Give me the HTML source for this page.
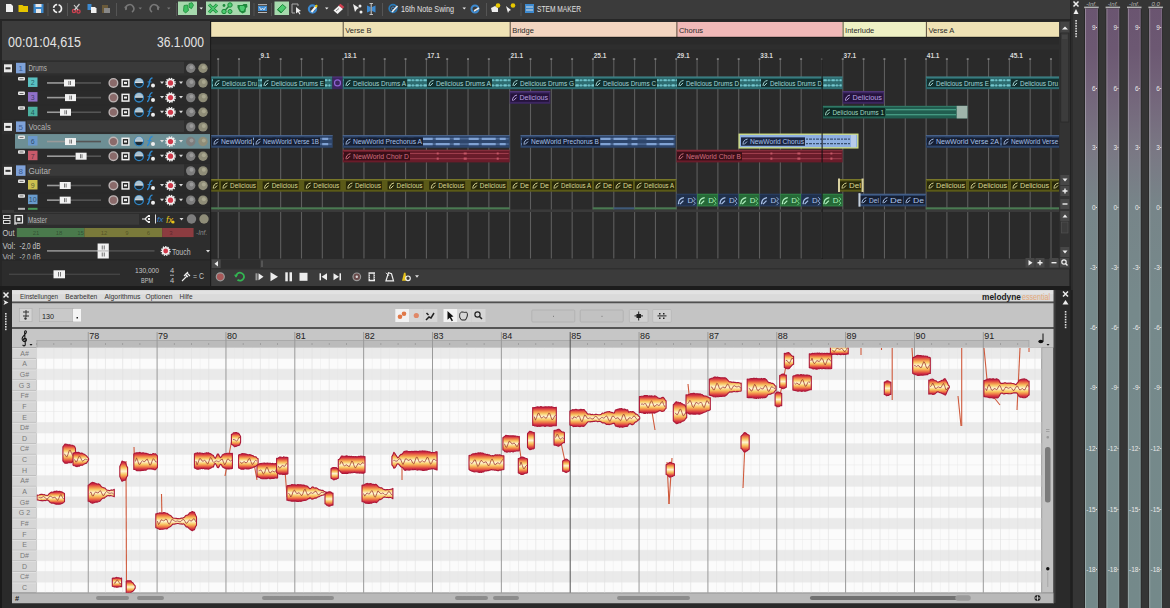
<!DOCTYPE html><html><head><meta charset="utf-8"><style>
*{margin:0;padding:0;box-sizing:border-box}
html,body{width:1170px;height:608px;overflow:hidden;background:#2b2b2b;font-family:"Liberation Sans",sans-serif;position:relative}
.a{position:absolute}
svg{position:absolute;left:0;top:0}
</style></head><body>
<div class="a" id="tb"><svg width="1071" height="21" style="position:absolute;left:0;top:0">
<rect x="0" y="0" width="1071" height="21" fill="#3b3b3b"/>
<rect x="0" y="19" width="1071" height="2" fill="#262626"/>
<!-- new doc -->
<path d="M6 4h5l2 2v6h-7z" fill="#f0f0f0"/>
<!-- folder -->
<path d="M18.5 5h4l1 1h4.5v6h-9.5z" fill="#e5c500"/>
<!-- save -->
<rect x="33.5" y="4" width="10" height="9" fill="#3b88cc"/><rect x="35.5" y="4" width="6" height="3" fill="#e8e8e8"/><rect x="36" y="9" width="5" height="4" fill="#e8e8e8"/>
<rect x="47.5" y="3" width="1" height="13" fill="#555"/>
<!-- refresh -->
<circle cx="57.5" cy="8.5" r="4" fill="none" stroke="#eee" stroke-width="1.6" stroke-dasharray="5 1.5"/>
<rect x="67" y="3" width="1" height="13" fill="#555"/>
<!-- scissors -->
<circle cx="74" cy="11" r="1.6" fill="none" stroke="#d04050" stroke-width="1.3"/><circle cx="78.5" cy="11.5" r="1.6" fill="none" stroke="#d04050" stroke-width="1.3"/><path d="M74.5 10l5-6M78 10l-4-5" stroke="#ccc" stroke-width="1.2"/>
<!-- copy -->
<rect x="87.5" y="4" width="4" height="6" fill="#3d8ad0"/><path d="M91 7h4l1.5 1.5v4.5h-5.5z" fill="#f0f0f0"/>
<!-- paste -->
<rect x="102" y="5" width="6" height="8" fill="#6a5a3a"/><rect x="104" y="8" width="6" height="5" fill="#888"/>
<rect x="116" y="3" width="1" height="13" fill="#555"/>
<!-- undo -->
<path d="M126 10a4 4 0 1 1 6 2" fill="none" stroke="#777" stroke-width="1.6"/><path d="M124 7l3 -1l0 4z" fill="#777"/>
<path d="M138.5 7.5h3.5l-1.75 2z" fill="#777"/>
<path d="M158 10a4 4 0 1 0 -6 2" fill="none" stroke="#777" stroke-width="1.6"/><path d="M160 7l-3 -1l0 4z" fill="#777"/>
<path d="M167 7.5h3.5l-1.75 2z" fill="#777"/>
<rect x="176" y="3" width="1" height="13" fill="#555"/>
<!-- green btn 1 -->
<rect x="178" y="1.5" width="19" height="13.5" fill="#a6d9ad"/>
<path d="M184 5.5l3.5 -0.5l1 5.5l-3 2.5l-2 -2z" fill="#3cc060" stroke="#1f8a3c" stroke-width="0.8"/><path d="M189 3.5l3 -0.8l1.5 2.5l-2 3.5l-2.5 -1.5z" fill="#3cc060" stroke="#1f8a3c" stroke-width="0.8"/>
<path d="M199.5 7.5h3.5l-1.75 2z" fill="#eee"/>
<rect x="206" y="1.5" width="44" height="13.5" fill="#a6d9ad"/>
<path d="M209 4.5c3 3 5 5 8 8M217 4.5c-3 3 -5 5 -8 8" stroke="#1f8a3c" stroke-width="3"/><path d="M209 4.5c3 3 5 5 8 8M217 4.5c-3 3 -5 5 -8 8" stroke="#4ccc70" stroke-width="1.4"/>
<path d="M224 11.5L230 5" stroke="#1f8a3c" stroke-width="1.5"/><circle cx="224" cy="11.5" r="2.2" fill="#4ccc70" stroke="#1f8a3c" stroke-width="1"/><circle cx="230" cy="5" r="2.2" fill="#4ccc70" stroke="#1f8a3c" stroke-width="1"/><circle cx="230" cy="11.5" r="2" fill="#4ccc70" stroke="#1f8a3c" stroke-width="1"/><circle cx="224" cy="5.5" r="1.4" fill="#1f8a3c"/>
<path d="M237.5 5h5l1 -1h3.5l0.5 3l-1.5 1l-0.5 4l-3 1.5l-3 -2l-2 -4z" fill="#1f8a3c"/><path d="M240 6h4l1 2l-1.5 3l-2.5 0l-1.5 -3z" fill="#4ccc70"/>
<rect x="253.5" y="3" width="1" height="13" fill="#555"/>
<rect x="258" y="4" width="9" height="1.2" fill="#aaa"/><rect x="258" y="6" width="9" height="5" fill="#3d8ad0"/><path d="M259.5 7l1.5 3l1.5 -2l1.5 2l1.5 -3" fill="none" stroke="#eee" stroke-width="0.8"/><rect x="258" y="12" width="9" height="1" fill="#bbb"/>
<rect x="271" y="3" width="1" height="13" fill="#555"/>
<rect x="274.5" y="1.5" width="14.5" height="13.5" fill="#a6d9ad"/>
<path d="M277.5 9.5l5 -5l3.5 3l-5 5.5z" fill="#4ccc70" stroke="#1f8a3c" stroke-width="1"/><path d="M277.5 9.5l3.5 3" stroke="#1f8a3c" stroke-width="1.2"/>
<path d="M292 4h6v2M292 4v9h3" fill="none" stroke="#aaa" stroke-width="1"/><path d="M296 7l5 4l-2 0.5l1.5 2.5l-1 0.5l-1.5 -2.5l-2 1.5z" fill="#eee"/>
<circle cx="312.5" cy="9" r="3.6" fill="none" stroke="#3d8ad0" stroke-width="2.2"/><path d="M311.5 12l5 -6" stroke="#f4f4f4" stroke-width="2"/><path d="M315.5 7.2l1.5 -2" stroke="#e8c800" stroke-width="2"/>
<path d="M325 7.5h3.5l-1.75 2z" fill="#eee"/>
<path d="M333.5 10.5l5.5 -5l4 3.5l-5.5 5z" fill="#f4f4f4"/><path d="M338.5 5.5l2 -1.8l3.8 3.3l-1.8 1.8z" fill="#d04050"/><path d="M336 11l3 -2.5" stroke="#666" stroke-width="0.8"/>
<rect x="347.5" y="3" width="1" height="13" fill="#555"/>
<path d="M353 4l6 4l-2 1l-2 3z" fill="#eee"/><circle cx="360" cy="6" r="1.5" fill="#eee"/><circle cx="361" cy="12" r="1.5" fill="#eee"/>
<path d="M367 5.5l3.5 1.5v4l-3.5 1.5zM375.5 5.5l-3.5 1.5v4l3.5 1.5z" fill="#3d8ad0"/><path d="M371.2 3.5v11" stroke="#ddd" stroke-width="0.9"/><path d="M369.5 3.5h3.5M369.5 14.5h3.5" stroke="#ddd" stroke-width="0.8"/>
<rect x="382" y="3" width="1" height="13" fill="#555"/>
<circle cx="393" cy="8.5" r="3.8" fill="none" stroke="#2a7ab8" stroke-width="1.8"/><circle cx="393" cy="8.5" r="1.5" fill="none" stroke="#3d8ad0" stroke-width="1"/><path d="M392 12l5.5 -6" stroke="#f0f0f0" stroke-width="1.6"/>
<text x="401" y="12" font-size="9.5" fill="#e0e0e0" font-family="Liberation Sans" textLength="53" lengthAdjust="spacingAndGlyphs">16th Note Swing</text>
<path d="M462.5 7.5h3.5l-1.75 2z" fill="#eee"/>
<circle cx="475" cy="9" r="3.5" fill="none" stroke="#3d8ad0" stroke-width="2"/><path d="M474 11l5 -3" stroke="#eee" stroke-width="1.5"/>
<rect x="486" y="3" width="1" height="13" fill="#555"/>
<path d="M491 8l4 -2l3 2v4h-6z" fill="#eee"/><circle cx="498" cy="5.5" r="2.3" fill="#e8c800"/>
<path d="M506 6l5 4l-2 1l-1 2z" fill="#eee"/><circle cx="513" cy="5.5" r="2.3" fill="#e8c800"/>
<rect x="520.5" y="3" width="1" height="13" fill="#555"/>
<rect x="525" y="4" width="9" height="9" fill="#3d8ad0"/><path d="M526 7h7M526 10h7" stroke="#ddd" stroke-width="1"/>
<text x="537" y="12" font-size="9" fill="#e0e0e0" font-family="Liberation Sans" textLength="44" lengthAdjust="spacingAndGlyphs">STEM MAKER</text>
</svg></div>
<svg width="1071" height="290" style="left:0;top:0">
<rect x="0" y="21" width="1071" height="269" fill="#262626"/>
<rect x="2" y="21" width="208" height="39.5" fill="#3c3c3c"/>
<text x="8" y="47.2" font-size="14" fill="#e4e4e4" textLength="73" lengthAdjust="spacingAndGlyphs">00:01:04,615</text>
<text x="157" y="47.2" font-size="14" fill="#e4e4e4" textLength="47" lengthAdjust="spacingAndGlyphs">36.1.000</text>
<rect x="2" y="61.5" width="208" height="151" fill="#2a2a2a"/>
<rect x="210" y="21" width="1.2" height="269" fill="#1c1c1c"/>
<rect x="2" y="61.3" width="208" height="14.65" fill="#2e2e2e"/>
<rect x="4" y="64.3" width="8" height="8" fill="#e8e8e8"/><rect x="5.5" y="67.3" width="5" height="2" fill="#333"/>
<rect x="16" y="62.8" width="9.5" height="10.5" fill="#7fa2d9"/>
<text x="20.7" y="71.3" font-size="8" fill="#3a5a90" text-anchor="middle">1</text>
<rect x="27" y="61.8" width="157" height="11.5" fill="#3a3a3a"/>
<text x="28.5" y="71.3" font-size="9" fill="#b4b4b4" textLength="18.5" lengthAdjust="spacingAndGlyphs">Drums</text>
<circle cx="190.7" cy="68.3" r="4.7" fill="#7d7d7d"/><circle cx="191.5" cy="67.3" r="2" fill="#9a9a9a"/>
<circle cx="203" cy="68.3" r="4.7" fill="#8f8d78"/><circle cx="203.8" cy="67.3" r="2" fill="#a9a78f"/>
<rect x="14" y="75.95" width="196" height="14.05" fill="#2a2a2a"/>
<rect x="18" y="76.95" width="7" height="3.5" fill="#e8e8e8" rx="1"/><rect x="19.5" y="78.35000000000001" width="4" height="0.8" fill="#555"/>
<rect x="28" y="77.45" width="9.5" height="9.5" fill="#5ac0c0"/>
<text x="32.7" y="85.25" font-size="7" fill="rgba(0,20,40,0.6)" text-anchor="middle">2</text>
<rect x="47" y="82.15" width="17" height="1.6" fill="#9a9a9a"/><rect x="64" y="82.15" width="37" height="1.6" fill="#555"/>
<rect x="64" y="79.45" width="11" height="7" fill="#f2f2f2"/><rect x="68.5" y="80.95" width="0.8" height="4" fill="#555"/><rect x="70" y="80.95" width="0.8" height="4" fill="#555"/>
<circle cx="113.4" cy="82.95" r="4.3" fill="#8a6a6a" stroke="#bcb4b4" stroke-width="1.4"/>
<rect x="121.4" y="78.95" width="8.2" height="8.2" fill="#f0f0f0"/><rect x="122.9" y="80.45" width="5.2" height="5.2" fill="#2a2a2a"/><rect x="124" y="81.95" width="3" height="2" fill="#f0f0f0"/>
<circle cx="139" cy="82.95" r="4.4" fill="#1c2a33" stroke="#2f86c6" stroke-width="1.3"/><path d="M134.8 82.45a4.2 4.2 0 0 1 8.4 0z" fill="#a9c2d2"/><rect x="135" y="82.15" width="8" height="0.9" fill="#eee"/>
<path d="M147 86.95c2 0 2-2 2.5-5s1-4 3-4" fill="none" stroke="#2f8ad0" stroke-width="1.4"/><path d="M147.5 81.95h4" stroke="#2f8ad0" stroke-width="1"/><circle cx="153" cy="85.45" r="2" fill="#eee"/>
<path d="M160 81.45h4l-2 2.5z" fill="#ddd"/>
<circle cx="170.5" cy="82.95" r="4.3" fill="#f0f0f0"/><circle cx="170.5" cy="82.95" r="4.6" fill="none" stroke="#f0f0f0" stroke-width="1.5" stroke-dasharray="1.3 1.1"/><circle cx="170.5" cy="82.95" r="2.6" fill="#d0394a"/>
<path d="M179 81.45h4l-2 2.5z" fill="#ddd"/>
<circle cx="190.7" cy="82.95" r="4.7" fill="#7d7d7d"/><circle cx="191.5" cy="81.95" r="2" fill="#9a9a9a"/>
<circle cx="203" cy="82.95" r="4.7" fill="#8f8d78"/><circle cx="203.8" cy="81.95" r="2" fill="#a9a78f"/>
<rect x="14" y="90.6" width="196" height="14.05" fill="#2a2a2a"/>
<rect x="18" y="91.6" width="7" height="3.5" fill="#e8e8e8" rx="1"/><rect x="19.5" y="93.0" width="4" height="0.8" fill="#555"/>
<rect x="28" y="92.1" width="9.5" height="9.5" fill="#9070c8"/>
<text x="32.7" y="99.89999999999999" font-size="7" fill="rgba(0,20,40,0.6)" text-anchor="middle">3</text>
<rect x="47" y="96.8" width="18" height="1.6" fill="#9a9a9a"/><rect x="65" y="96.8" width="36" height="1.6" fill="#555"/>
<rect x="65" y="94.1" width="11" height="7" fill="#f2f2f2"/><rect x="69.5" y="95.6" width="0.8" height="4" fill="#555"/><rect x="71" y="95.6" width="0.8" height="4" fill="#555"/>
<circle cx="113.4" cy="97.6" r="4.3" fill="#8a6a6a" stroke="#bcb4b4" stroke-width="1.4"/>
<rect x="121.4" y="93.6" width="8.2" height="8.2" fill="#f0f0f0"/><rect x="122.9" y="95.1" width="5.2" height="5.2" fill="#2a2a2a"/><rect x="124" y="96.6" width="3" height="2" fill="#f0f0f0"/>
<circle cx="139" cy="97.6" r="4.4" fill="#1c2a33" stroke="#2f86c6" stroke-width="1.3"/><path d="M134.8 97.1a4.2 4.2 0 0 1 8.4 0z" fill="#a9c2d2"/><rect x="135" y="96.8" width="8" height="0.9" fill="#eee"/>
<path d="M147 101.6c2 0 2-2 2.5-5s1-4 3-4" fill="none" stroke="#2f8ad0" stroke-width="1.4"/><path d="M147.5 96.6h4" stroke="#2f8ad0" stroke-width="1"/><circle cx="153" cy="100.1" r="2" fill="#eee"/>
<path d="M160 96.1h4l-2 2.5z" fill="#ddd"/>
<circle cx="170.5" cy="97.6" r="4.3" fill="#f0f0f0"/><circle cx="170.5" cy="97.6" r="4.6" fill="none" stroke="#f0f0f0" stroke-width="1.5" stroke-dasharray="1.3 1.1"/><circle cx="170.5" cy="97.6" r="2.6" fill="#d0394a"/>
<path d="M179 96.1h4l-2 2.5z" fill="#ddd"/>
<circle cx="190.7" cy="97.6" r="4.7" fill="#7d7d7d"/><circle cx="191.5" cy="96.6" r="2" fill="#9a9a9a"/>
<circle cx="203" cy="97.6" r="4.7" fill="#8f8d78"/><circle cx="203.8" cy="96.6" r="2" fill="#a9a78f"/>
<rect x="14" y="105.25" width="196" height="14.05" fill="#2a2a2a"/>
<rect x="18" y="106.25" width="7" height="3.5" fill="#e8e8e8" rx="1"/><rect x="19.5" y="107.65" width="4" height="0.8" fill="#555"/>
<rect x="28" y="106.75" width="9.5" height="9.5" fill="#4cb0a0"/>
<text x="32.7" y="114.55" font-size="7" fill="rgba(0,20,40,0.6)" text-anchor="middle">4</text>
<rect x="47" y="111.45" width="13" height="1.6" fill="#9a9a9a"/><rect x="60" y="111.45" width="41" height="1.6" fill="#555"/>
<rect x="60" y="108.75" width="11" height="7" fill="#f2f2f2"/><rect x="64.5" y="110.25" width="0.8" height="4" fill="#555"/><rect x="66" y="110.25" width="0.8" height="4" fill="#555"/>
<circle cx="113.4" cy="112.25" r="4.3" fill="#8a6a6a" stroke="#bcb4b4" stroke-width="1.4"/>
<rect x="121.4" y="108.25" width="8.2" height="8.2" fill="#f0f0f0"/><rect x="122.9" y="109.75" width="5.2" height="5.2" fill="#2a2a2a"/><rect x="124" y="111.25" width="3" height="2" fill="#f0f0f0"/>
<circle cx="139" cy="112.25" r="4.4" fill="#1c2a33" stroke="#2f86c6" stroke-width="1.3"/><path d="M134.8 111.75a4.2 4.2 0 0 1 8.4 0z" fill="#a9c2d2"/><rect x="135" y="111.45" width="8" height="0.9" fill="#eee"/>
<path d="M147 116.25c2 0 2-2 2.5-5s1-4 3-4" fill="none" stroke="#2f8ad0" stroke-width="1.4"/><path d="M147.5 111.25h4" stroke="#2f8ad0" stroke-width="1"/><circle cx="153" cy="114.75" r="2" fill="#eee"/>
<path d="M160 110.75h4l-2 2.5z" fill="#ddd"/>
<circle cx="170.5" cy="112.25" r="4.3" fill="#f0f0f0"/><circle cx="170.5" cy="112.25" r="4.6" fill="none" stroke="#f0f0f0" stroke-width="1.5" stroke-dasharray="1.3 1.1"/><circle cx="170.5" cy="112.25" r="2.6" fill="#d0394a"/>
<path d="M179 110.75h4l-2 2.5z" fill="#ddd"/>
<circle cx="190.7" cy="112.25" r="4.7" fill="#7d7d7d"/><circle cx="191.5" cy="111.25" r="2" fill="#9a9a9a"/>
<circle cx="203" cy="112.25" r="4.7" fill="#8f8d78"/><circle cx="203.8" cy="111.25" r="2" fill="#a9a78f"/>
<rect x="2" y="119.9" width="208" height="14.65" fill="#2e2e2e"/>
<rect x="4" y="122.9" width="8" height="8" fill="#e8e8e8"/><rect x="5.5" y="125.9" width="5" height="2" fill="#333"/>
<rect x="16" y="121.4" width="9.5" height="10.5" fill="#7fa2d9"/>
<text x="20.7" y="129.9" font-size="8" fill="#3a5a90" text-anchor="middle">5</text>
<rect x="27" y="120.4" width="157" height="11.5" fill="#3a3a3a"/>
<text x="28.5" y="129.9" font-size="9" fill="#b4b4b4" textLength="22.200000000000003" lengthAdjust="spacingAndGlyphs">Vocals</text>
<circle cx="190.7" cy="126.9" r="4.7" fill="#7d7d7d"/><circle cx="191.5" cy="125.9" r="2" fill="#9a9a9a"/>
<circle cx="203" cy="126.9" r="4.7" fill="#8f8d78"/><circle cx="203.8" cy="125.9" r="2" fill="#a9a78f"/>
<rect x="15" y="134.05" width="195" height="14.65" fill="#6d8f95"/>
<rect x="18" y="135.55" width="7" height="3.5" fill="#e8e8e8" rx="1"/><rect x="19.5" y="136.95000000000002" width="4" height="0.8" fill="#555"/>
<rect x="28" y="136.05" width="9.5" height="9.5" fill="#6a98cc"/>
<text x="32.7" y="143.85000000000002" font-size="7" fill="rgba(0,20,40,0.6)" text-anchor="middle">6</text>
<rect x="47" y="140.75" width="18" height="1.6" fill="#9a9a9a"/><rect x="65" y="140.75" width="36" height="1.6" fill="#555"/>
<rect x="65" y="138.05" width="11" height="7" fill="#f2f2f2"/><rect x="69.5" y="139.55" width="0.8" height="4" fill="#555"/><rect x="71" y="139.55" width="0.8" height="4" fill="#555"/>
<circle cx="113.4" cy="141.55" r="4.3" fill="#8a6a6a" stroke="#bcb4b4" stroke-width="1.4"/>
<rect x="121.4" y="137.55" width="8.2" height="8.2" fill="#f0f0f0"/><rect x="122.9" y="139.05" width="5.2" height="5.2" fill="#2a2a2a"/><rect x="124" y="140.55" width="3" height="2" fill="#f0f0f0"/>
<circle cx="139" cy="141.55" r="4.4" fill="#1c2a33" stroke="#2f86c6" stroke-width="1.3"/><path d="M134.8 141.05a4.2 4.2 0 0 1 8.4 0z" fill="#a9c2d2"/><rect x="135" y="140.75" width="8" height="0.9" fill="#eee"/>
<path d="M147 145.55c2 0 2-2 2.5-5s1-4 3-4" fill="none" stroke="#2f8ad0" stroke-width="1.4"/><path d="M147.5 140.55h4" stroke="#2f8ad0" stroke-width="1"/><circle cx="153" cy="144.05" r="2" fill="#eee"/>
<path d="M160 140.05h4l-2 2.5z" fill="#ddd"/>
<circle cx="170.5" cy="141.55" r="4.3" fill="#f0f0f0"/><circle cx="170.5" cy="141.55" r="4.6" fill="none" stroke="#f0f0f0" stroke-width="1.5" stroke-dasharray="1.3 1.1"/><circle cx="170.5" cy="141.55" r="2.6" fill="#d0394a"/>
<path d="M179 140.05h4l-2 2.5z" fill="#ddd"/>
<circle cx="190.7" cy="141.55" r="4.7" fill="#7d7d7d"/><circle cx="191.5" cy="140.55" r="2" fill="#9a9a9a"/>
<circle cx="203" cy="141.55" r="4.7" fill="#8f8d78"/><circle cx="203.8" cy="140.55" r="2" fill="#a9a78f"/>
<rect x="14" y="149.2" width="196" height="14.05" fill="#2a2a2a"/>
<rect x="18" y="150.2" width="7" height="3.5" fill="#e8e8e8" rx="1"/><rect x="19.5" y="151.6" width="4" height="0.8" fill="#555"/>
<rect x="28" y="150.7" width="9.5" height="9.5" fill="#c85a6a"/>
<text x="32.7" y="158.5" font-size="7" fill="rgba(0,20,40,0.6)" text-anchor="middle">7</text>
<rect x="47" y="155.39999999999998" width="28.599999999999994" height="1.6" fill="#9a9a9a"/><rect x="75.6" y="155.39999999999998" width="25.400000000000006" height="1.6" fill="#555"/>
<rect x="75.6" y="152.7" width="11" height="7" fill="#f2f2f2"/><rect x="80.1" y="154.2" width="0.8" height="4" fill="#555"/><rect x="81.6" y="154.2" width="0.8" height="4" fill="#555"/>
<circle cx="113.4" cy="156.2" r="4.3" fill="#8a6a6a" stroke="#bcb4b4" stroke-width="1.4"/>
<rect x="121.4" y="152.2" width="8.2" height="8.2" fill="#f0f0f0"/><rect x="122.9" y="153.7" width="5.2" height="5.2" fill="#2a2a2a"/><rect x="124" y="155.2" width="3" height="2" fill="#f0f0f0"/>
<circle cx="139" cy="156.2" r="4.4" fill="#1c2a33" stroke="#2f86c6" stroke-width="1.3"/><path d="M134.8 155.7a4.2 4.2 0 0 1 8.4 0z" fill="#a9c2d2"/><rect x="135" y="155.39999999999998" width="8" height="0.9" fill="#eee"/>
<path d="M147 160.2c2 0 2-2 2.5-5s1-4 3-4" fill="none" stroke="#2f8ad0" stroke-width="1.4"/><path d="M147.5 155.2h4" stroke="#2f8ad0" stroke-width="1"/><circle cx="153" cy="158.7" r="2" fill="#eee"/>
<path d="M160 154.7h4l-2 2.5z" fill="#ddd"/>
<circle cx="170.5" cy="156.2" r="4.3" fill="#f0f0f0"/><circle cx="170.5" cy="156.2" r="4.6" fill="none" stroke="#f0f0f0" stroke-width="1.5" stroke-dasharray="1.3 1.1"/><circle cx="170.5" cy="156.2" r="2.6" fill="#d0394a"/>
<path d="M179 154.7h4l-2 2.5z" fill="#ddd"/>
<circle cx="190.7" cy="156.2" r="4.7" fill="#7d7d7d"/><circle cx="191.5" cy="155.2" r="2" fill="#9a9a9a"/>
<circle cx="203" cy="156.2" r="4.7" fill="#8f8d78"/><circle cx="203.8" cy="155.2" r="2" fill="#a9a78f"/>
<rect x="2" y="163.85" width="208" height="14.65" fill="#2e2e2e"/>
<rect x="4" y="166.85" width="8" height="8" fill="#e8e8e8"/><rect x="5.5" y="169.85" width="5" height="2" fill="#333"/>
<rect x="16" y="165.35" width="9.5" height="10.5" fill="#7fa2d9"/>
<text x="20.7" y="173.85" font-size="8" fill="#3a5a90" text-anchor="middle">8</text>
<rect x="27" y="164.35" width="157" height="11.5" fill="#3a3a3a"/>
<text x="28.5" y="173.85" font-size="9" fill="#b4b4b4" textLength="22.200000000000003" lengthAdjust="spacingAndGlyphs">Guitar</text>
<circle cx="190.7" cy="170.85" r="4.7" fill="#7d7d7d"/><circle cx="191.5" cy="169.85" r="2" fill="#9a9a9a"/>
<circle cx="203" cy="170.85" r="4.7" fill="#8f8d78"/><circle cx="203.8" cy="169.85" r="2" fill="#a9a78f"/>
<rect x="14" y="178.5" width="196" height="14.05" fill="#2a2a2a"/>
<rect x="18" y="179.5" width="7" height="3.5" fill="#e8e8e8" rx="1"/><rect x="19.5" y="180.9" width="4" height="0.8" fill="#555"/>
<rect x="28" y="180.0" width="9.5" height="9.5" fill="#ccc050"/>
<text x="32.7" y="187.8" font-size="7" fill="rgba(0,20,40,0.6)" text-anchor="middle">9</text>
<rect x="47" y="184.7" width="12.700000000000003" height="1.6" fill="#9a9a9a"/><rect x="59.7" y="184.7" width="41.3" height="1.6" fill="#555"/>
<rect x="59.7" y="182.0" width="11" height="7" fill="#f2f2f2"/><rect x="64.2" y="183.5" width="0.8" height="4" fill="#555"/><rect x="65.7" y="183.5" width="0.8" height="4" fill="#555"/>
<circle cx="113.4" cy="185.5" r="4.3" fill="#8a6a6a" stroke="#bcb4b4" stroke-width="1.4"/>
<rect x="121.4" y="181.5" width="8.2" height="8.2" fill="#f0f0f0"/><rect x="122.9" y="183.0" width="5.2" height="5.2" fill="#2a2a2a"/><rect x="124" y="184.5" width="3" height="2" fill="#f0f0f0"/>
<circle cx="139" cy="185.5" r="4.4" fill="#1c2a33" stroke="#2f86c6" stroke-width="1.3"/><path d="M134.8 185.0a4.2 4.2 0 0 1 8.4 0z" fill="#a9c2d2"/><rect x="135" y="184.7" width="8" height="0.9" fill="#eee"/>
<path d="M147 189.5c2 0 2-2 2.5-5s1-4 3-4" fill="none" stroke="#2f8ad0" stroke-width="1.4"/><path d="M147.5 184.5h4" stroke="#2f8ad0" stroke-width="1"/><circle cx="153" cy="188.0" r="2" fill="#eee"/>
<path d="M160 184.0h4l-2 2.5z" fill="#ddd"/>
<circle cx="170.5" cy="185.5" r="4.3" fill="#f0f0f0"/><circle cx="170.5" cy="185.5" r="4.6" fill="none" stroke="#f0f0f0" stroke-width="1.5" stroke-dasharray="1.3 1.1"/><circle cx="170.5" cy="185.5" r="2.6" fill="#d0394a"/>
<path d="M179 184.0h4l-2 2.5z" fill="#ddd"/>
<circle cx="190.7" cy="185.5" r="4.7" fill="#7d7d7d"/><circle cx="191.5" cy="184.5" r="2" fill="#9a9a9a"/>
<circle cx="203" cy="185.5" r="4.7" fill="#8f8d78"/><circle cx="203.8" cy="184.5" r="2" fill="#a9a78f"/>
<rect x="14" y="193.14999999999998" width="196" height="14.05" fill="#2a2a2a"/>
<rect x="18" y="194.14999999999998" width="7" height="3.5" fill="#e8e8e8" rx="1"/><rect x="19.5" y="195.54999999999998" width="4" height="0.8" fill="#555"/>
<rect x="28" y="194.64999999999998" width="9.5" height="9.5" fill="#6a9ccc"/>
<text x="32.7" y="202.45" font-size="7" fill="rgba(0,20,40,0.6)" text-anchor="middle">10</text>
<rect x="47" y="199.34999999999997" width="12.700000000000003" height="1.6" fill="#9a9a9a"/><rect x="59.7" y="199.34999999999997" width="41.3" height="1.6" fill="#555"/>
<rect x="59.7" y="196.64999999999998" width="11" height="7" fill="#f2f2f2"/><rect x="64.2" y="198.14999999999998" width="0.8" height="4" fill="#555"/><rect x="65.7" y="198.14999999999998" width="0.8" height="4" fill="#555"/>
<circle cx="113.4" cy="200.14999999999998" r="4.3" fill="#8a6a6a" stroke="#bcb4b4" stroke-width="1.4"/>
<rect x="121.4" y="196.14999999999998" width="8.2" height="8.2" fill="#f0f0f0"/><rect x="122.9" y="197.64999999999998" width="5.2" height="5.2" fill="#2a2a2a"/><rect x="124" y="199.14999999999998" width="3" height="2" fill="#f0f0f0"/>
<circle cx="139" cy="200.14999999999998" r="4.4" fill="#1c2a33" stroke="#2f86c6" stroke-width="1.3"/><path d="M134.8 199.64999999999998a4.2 4.2 0 0 1 8.4 0z" fill="#a9c2d2"/><rect x="135" y="199.34999999999997" width="8" height="0.9" fill="#eee"/>
<path d="M147 204.14999999999998c2 0 2-2 2.5-5s1-4 3-4" fill="none" stroke="#2f8ad0" stroke-width="1.4"/><path d="M147.5 199.14999999999998h4" stroke="#2f8ad0" stroke-width="1"/><circle cx="153" cy="202.64999999999998" r="2" fill="#eee"/>
<path d="M160 198.64999999999998h4l-2 2.5z" fill="#ddd"/>
<circle cx="170.5" cy="200.14999999999998" r="4.3" fill="#f0f0f0"/><circle cx="170.5" cy="200.14999999999998" r="4.6" fill="none" stroke="#f0f0f0" stroke-width="1.5" stroke-dasharray="1.3 1.1"/><circle cx="170.5" cy="200.14999999999998" r="2.6" fill="#d0394a"/>
<path d="M179 198.64999999999998h4l-2 2.5z" fill="#ddd"/>
<circle cx="190.7" cy="200.14999999999998" r="4.7" fill="#7d7d7d"/><circle cx="191.5" cy="199.14999999999998" r="2" fill="#9a9a9a"/>
<circle cx="203" cy="200.14999999999998" r="4.7" fill="#8f8d78"/><circle cx="203.8" cy="199.14999999999998" r="2" fill="#a9a78f"/>
<rect x="2" y="209.9" width="208" height="3.5" fill="#3a3a3a"/>
<rect x="2" y="213.4" width="208" height="46" fill="#2d2d2d"/>
<rect x="27" y="213.8" width="112" height="11" fill="#3a3a3a"/>
<rect x="3.5" y="215.5" width="6.5" height="3" fill="none" stroke="#ddd" stroke-width="1"/><rect x="3.5" y="220.5" width="6.5" height="3" fill="none" stroke="#ddd" stroke-width="1"/>
<rect x="15" y="215.5" width="7.5" height="7.5" fill="none" stroke="#eee" stroke-width="1.2"/><rect x="17.2" y="217.7" width="3.2" height="3.2" fill="#eee"/><path d="M14 224h3" stroke="#eee"/>
<text x="28" y="222.6" font-size="9" fill="#b8b8b8" textLength="19" lengthAdjust="spacingAndGlyphs">Master</text>
<path d="M142 219h3M145 219l3-3M145 219l3 3" stroke="#eee" stroke-width="1.2" fill="none"/><rect x="148" y="215" width="2" height="2" fill="#eee"/><rect x="148" y="218" width="2" height="2" fill="#eee"/><rect x="148" y="221" width="2" height="2" fill="#eee"/>
<rect x="155" y="214.5" width="1" height="9" fill="#ddd"/><text x="157" y="222" font-size="8" font-style="italic" fill="#3a8ad0">fx</text>
<text x="166" y="223" font-size="9" font-style="italic" fill="#e6c21a">fx</text><circle cx="173" cy="222" r="1.6" fill="#e6c21a"/>
<path d="M179.5 218h4l-2 2.5z" fill="#ddd"/>
<circle cx="191.5" cy="219" r="4.7" fill="#7d7d7d"/><circle cx="204" cy="219" r="4.7" fill="#8f8d78"/>
<text x="2.5" y="235.5" font-size="8.5" fill="#c8c8c8" textLength="12" lengthAdjust="spacingAndGlyphs">Out</text>
<rect x="16.8" y="228" width="67.5" height="9.1" fill="#4a7a4c"/><rect x="84.3" y="228" width="78" height="9.1" fill="#7a7a3a"/><rect x="162.2" y="228" width="31.4" height="9.1" fill="#8c3c40"/>
<text x="36" y="235" font-size="6" fill="rgba(0,0,0,0.35)" text-anchor="middle">21</text>
<text x="59" y="235" font-size="6" fill="rgba(0,0,0,0.35)" text-anchor="middle">18</text>
<text x="80.5" y="235" font-size="6" fill="rgba(0,0,0,0.35)" text-anchor="middle">15</text>
<text x="104" y="235" font-size="6" fill="rgba(0,0,0,0.35)" text-anchor="middle">12</text>
<text x="127" y="235" font-size="6" fill="rgba(0,0,0,0.35)" text-anchor="middle">9</text>
<text x="148.5" y="235" font-size="6" fill="rgba(0,0,0,0.35)" text-anchor="middle">6</text>
<text x="171" y="235" font-size="6" fill="rgba(0,0,0,0.35)" text-anchor="middle">3</text>
<text x="196" y="235" font-size="6.5" fill="#888" font-style="italic">-Inf.</text>
<text x="2.5" y="248.5" font-size="8.5" fill="#c8c8c8" textLength="13" lengthAdjust="spacingAndGlyphs">Vol:</text>
<text x="19.5" y="248.5" font-size="8.5" fill="#c8c8c8" textLength="21" lengthAdjust="spacingAndGlyphs">-2,0 dB</text>
<rect x="47" y="250.2" width="51" height="1.4" fill="#a0a0a0"/><rect x="108" y="250.2" width="46.5" height="1.4" fill="#555"/>
<rect x="97.6" y="243.5" width="11.2" height="15" fill="#f2f2f2"/><rect x="97.6" y="250.6" width="11.2" height="0.7" fill="#999"/>
<rect x="101.8" y="245.5" width="0.8" height="4" fill="#555"/><rect x="103.8" y="245.5" width="0.8" height="4" fill="#555"/><rect x="101.8" y="252.5" width="0.8" height="4" fill="#555"/><rect x="103.8" y="252.5" width="0.8" height="4" fill="#555"/>
<circle cx="165.7" cy="251" r="3.9" fill="#f0f0f0"/><circle cx="165.7" cy="251" r="4.3" fill="none" stroke="#f0f0f0" stroke-width="1.4" stroke-dasharray="1.3 1.1"/><circle cx="165.7" cy="251" r="2.4" fill="#d0394a"/>
<text x="172" y="254.5" font-size="9" fill="#c0c0c0" textLength="18.5" lengthAdjust="spacingAndGlyphs">Touch</text>
<path d="M206 250h4l-2 2.5z" fill="#ddd"/>
<text x="2.5" y="259.5" font-size="8.5" fill="#b8b8b8" textLength="13" lengthAdjust="spacingAndGlyphs">Vol:</text>
<text x="19.5" y="259.5" font-size="8.5" fill="#b8b8b8" textLength="21" lengthAdjust="spacingAndGlyphs">-2,0 dB</text>
<rect x="2" y="259.5" width="208" height="26.5" fill="#2c2c2c"/>
<rect x="2" y="259.5" width="208" height="0.8" fill="#222"/>
<rect x="9" y="273.6" width="111" height="1.4" fill="#444"/>
<rect x="53.5" y="270.3" width="11.5" height="8" fill="#f2f2f2"/><rect x="58" y="272" width="0.8" height="4.5" fill="#555"/><rect x="60" y="272" width="0.8" height="4.5" fill="#555"/>
<text x="147" y="273" font-size="8" fill="#c4c4c4" text-anchor="middle" textLength="24" lengthAdjust="spacingAndGlyphs">130,000</text>
<text x="147" y="283" font-size="8" fill="#c4c4c4" text-anchor="middle" textLength="12" lengthAdjust="spacingAndGlyphs">BPM</text>
<text x="172" y="272.5" font-size="7.5" fill="#c4c4c4" text-anchor="middle">4</text><rect x="170" y="274.8" width="4" height="0.8" fill="#c4c4c4"/><text x="172" y="282.5" font-size="7.5" fill="#c4c4c4" text-anchor="middle">4</text>
<path d="M182 281l5-5M185 274l3 3M187 273l3 3M184 276l4-4" stroke="#eee" stroke-width="1.1"/>
<text x="193" y="279" font-size="9" fill="#c4c4c4" textLength="11" lengthAdjust="spacingAndGlyphs">= C</text>
<rect x="0" y="286" width="1071" height="4" fill="#1c1c1c"/>
<rect x="211.2" y="21" width="848" height="238" fill="#2a2a2a"/>
<rect x="211.2" y="22" width="848" height="15" fill="#efe2b5"/>
<rect x="342.7" y="22" width="167.0" height="15" fill="#efe2b5"/>
<rect x="342.7" y="22" width="1" height="15" fill="#5a5040"/>
<text x="345.2" y="32.5" font-size="7.5" fill="#2a2a2a">Verse B</text>
<rect x="509.7" y="22" width="166.7" height="15" fill="#f3d5c0"/>
<rect x="509.7" y="22" width="1" height="15" fill="#5a5040"/>
<text x="512.2" y="32.5" font-size="7.5" fill="#2a2a2a">Bridge</text>
<rect x="676.4" y="22" width="166.20000000000005" height="15" fill="#f1b9b8"/>
<rect x="676.4" y="22" width="1" height="15" fill="#5a5040"/>
<text x="678.9" y="32.5" font-size="7.5" fill="#2a2a2a">Chorus</text>
<rect x="842.6" y="22" width="83.29999999999995" height="15" fill="#eef0c4"/>
<rect x="842.6" y="22" width="1" height="15" fill="#5a5040"/>
<text x="845.1" y="32.5" font-size="7.5" fill="#2a2a2a">Interlude</text>
<rect x="925.9" y="22" width="133.30000000000007" height="15" fill="#efe2b5"/>
<rect x="925.9" y="22" width="1" height="15" fill="#5a5040"/>
<text x="928.4" y="32.5" font-size="7.5" fill="#2a2a2a">Verse A</text>
<rect x="211.2" y="36.8" width="848" height="1.2" fill="#1e1e1e"/>
<rect x="211.2" y="44.5" width="848" height="5" fill="#2e2e2e"/>
<rect x="217.66000000000003" y="58.5" width="1.1" height="200" fill="#5e5e5e"/>
<rect x="217.16000000000003" y="58.3" width="2" height="1.5" fill="#888"/>
<rect x="238.48000000000002" y="58.5" width="1.1" height="200" fill="#5e5e5e"/>
<rect x="237.98000000000002" y="58.3" width="2" height="1.5" fill="#888"/>
<rect x="259.3" y="58.5" width="1.1" height="200" fill="#5e5e5e"/>
<rect x="258.8" y="58.3" width="2" height="1.5" fill="#888"/>
<text x="260.6" y="57.8" font-size="6.5" fill="#d8d8d8" font-weight="bold">9.1</text>
<rect x="280.12" y="58.5" width="1.1" height="200" fill="#5e5e5e"/>
<rect x="279.62" y="58.3" width="2" height="1.5" fill="#888"/>
<rect x="300.94" y="58.5" width="1.1" height="200" fill="#5e5e5e"/>
<rect x="300.44" y="58.3" width="2" height="1.5" fill="#888"/>
<rect x="321.76" y="58.5" width="1.1" height="200" fill="#5e5e5e"/>
<rect x="321.26" y="58.3" width="2" height="1.5" fill="#888"/>
<rect x="342.58000000000004" y="58.5" width="1.1" height="200" fill="#5e5e5e"/>
<rect x="342.08000000000004" y="58.3" width="2" height="1.5" fill="#888"/>
<text x="343.88000000000005" y="57.8" font-size="6.5" fill="#d8d8d8" font-weight="bold">13.1</text>
<rect x="363.4" y="58.5" width="1.1" height="200" fill="#5e5e5e"/>
<rect x="362.9" y="58.3" width="2" height="1.5" fill="#888"/>
<rect x="384.22" y="58.5" width="1.1" height="200" fill="#5e5e5e"/>
<rect x="383.72" y="58.3" width="2" height="1.5" fill="#888"/>
<rect x="405.04" y="58.5" width="1.1" height="200" fill="#5e5e5e"/>
<rect x="404.54" y="58.3" width="2" height="1.5" fill="#888"/>
<rect x="425.86" y="58.5" width="1.1" height="200" fill="#5e5e5e"/>
<rect x="425.36" y="58.3" width="2" height="1.5" fill="#888"/>
<text x="427.16" y="57.8" font-size="6.5" fill="#d8d8d8" font-weight="bold">17.1</text>
<rect x="446.68" y="58.5" width="1.1" height="200" fill="#5e5e5e"/>
<rect x="446.18" y="58.3" width="2" height="1.5" fill="#888"/>
<rect x="467.5" y="58.5" width="1.1" height="200" fill="#5e5e5e"/>
<rect x="467.0" y="58.3" width="2" height="1.5" fill="#888"/>
<rect x="488.32000000000005" y="58.5" width="1.1" height="200" fill="#5e5e5e"/>
<rect x="487.82000000000005" y="58.3" width="2" height="1.5" fill="#888"/>
<rect x="509.14" y="58.5" width="1.1" height="200" fill="#5e5e5e"/>
<rect x="508.64" y="58.3" width="2" height="1.5" fill="#888"/>
<text x="510.44" y="57.8" font-size="6.5" fill="#d8d8d8" font-weight="bold">21.1</text>
<rect x="529.96" y="58.5" width="1.1" height="200" fill="#5e5e5e"/>
<rect x="529.46" y="58.3" width="2" height="1.5" fill="#888"/>
<rect x="550.78" y="58.5" width="1.1" height="200" fill="#5e5e5e"/>
<rect x="550.28" y="58.3" width="2" height="1.5" fill="#888"/>
<rect x="571.6" y="58.5" width="1.1" height="200" fill="#5e5e5e"/>
<rect x="571.1" y="58.3" width="2" height="1.5" fill="#888"/>
<rect x="592.4200000000001" y="58.5" width="1.1" height="200" fill="#5e5e5e"/>
<rect x="591.9200000000001" y="58.3" width="2" height="1.5" fill="#888"/>
<text x="593.72" y="57.8" font-size="6.5" fill="#d8d8d8" font-weight="bold">25.1</text>
<rect x="613.24" y="58.5" width="1.1" height="200" fill="#5e5e5e"/>
<rect x="612.74" y="58.3" width="2" height="1.5" fill="#888"/>
<rect x="634.06" y="58.5" width="1.1" height="200" fill="#5e5e5e"/>
<rect x="633.56" y="58.3" width="2" height="1.5" fill="#888"/>
<rect x="654.88" y="58.5" width="1.1" height="200" fill="#5e5e5e"/>
<rect x="654.38" y="58.3" width="2" height="1.5" fill="#888"/>
<rect x="675.7" y="58.5" width="1.1" height="200" fill="#5e5e5e"/>
<rect x="675.2" y="58.3" width="2" height="1.5" fill="#888"/>
<text x="677.0" y="57.8" font-size="6.5" fill="#d8d8d8" font-weight="bold">29.1</text>
<rect x="696.52" y="58.5" width="1.1" height="200" fill="#5e5e5e"/>
<rect x="696.02" y="58.3" width="2" height="1.5" fill="#888"/>
<rect x="717.34" y="58.5" width="1.1" height="200" fill="#5e5e5e"/>
<rect x="716.84" y="58.3" width="2" height="1.5" fill="#888"/>
<rect x="738.1600000000001" y="58.5" width="1.1" height="200" fill="#5e5e5e"/>
<rect x="737.6600000000001" y="58.3" width="2" height="1.5" fill="#888"/>
<rect x="758.98" y="58.5" width="1.1" height="200" fill="#5e5e5e"/>
<rect x="758.48" y="58.3" width="2" height="1.5" fill="#888"/>
<text x="760.28" y="57.8" font-size="6.5" fill="#d8d8d8" font-weight="bold">33.1</text>
<rect x="779.8" y="58.5" width="1.1" height="200" fill="#5e5e5e"/>
<rect x="779.3" y="58.3" width="2" height="1.5" fill="#888"/>
<rect x="800.6200000000001" y="58.5" width="1.1" height="200" fill="#5e5e5e"/>
<rect x="800.1200000000001" y="58.3" width="2" height="1.5" fill="#888"/>
<rect x="821.44" y="58.5" width="1.1" height="200" fill="#5e5e5e"/>
<rect x="820.94" y="58.3" width="2" height="1.5" fill="#888"/>
<rect x="842.26" y="58.5" width="1.1" height="200" fill="#5e5e5e"/>
<rect x="841.76" y="58.3" width="2" height="1.5" fill="#888"/>
<text x="843.56" y="57.8" font-size="6.5" fill="#d8d8d8" font-weight="bold">37.1</text>
<rect x="863.0799999999999" y="58.5" width="1.1" height="200" fill="#5e5e5e"/>
<rect x="862.5799999999999" y="58.3" width="2" height="1.5" fill="#888"/>
<rect x="883.9000000000001" y="58.5" width="1.1" height="200" fill="#5e5e5e"/>
<rect x="883.4000000000001" y="58.3" width="2" height="1.5" fill="#888"/>
<rect x="904.72" y="58.5" width="1.1" height="200" fill="#5e5e5e"/>
<rect x="904.22" y="58.3" width="2" height="1.5" fill="#888"/>
<rect x="925.54" y="58.5" width="1.1" height="200" fill="#5e5e5e"/>
<rect x="925.04" y="58.3" width="2" height="1.5" fill="#888"/>
<text x="926.8399999999999" y="57.8" font-size="6.5" fill="#d8d8d8" font-weight="bold">41.1</text>
<rect x="946.3600000000001" y="58.5" width="1.1" height="200" fill="#5e5e5e"/>
<rect x="945.8600000000001" y="58.3" width="2" height="1.5" fill="#888"/>
<rect x="967.1800000000001" y="58.5" width="1.1" height="200" fill="#5e5e5e"/>
<rect x="966.6800000000001" y="58.3" width="2" height="1.5" fill="#888"/>
<rect x="988.0" y="58.5" width="1.1" height="200" fill="#5e5e5e"/>
<rect x="987.5" y="58.3" width="2" height="1.5" fill="#888"/>
<rect x="1008.8199999999999" y="58.5" width="1.1" height="200" fill="#5e5e5e"/>
<rect x="1008.3199999999999" y="58.3" width="2" height="1.5" fill="#888"/>
<text x="1010.1199999999999" y="57.8" font-size="6.5" fill="#d8d8d8" font-weight="bold">45.1</text>
<rect x="1029.64" y="58.5" width="1.1" height="200" fill="#5e5e5e"/>
<rect x="1029.14" y="58.3" width="2" height="1.5" fill="#888"/>
<rect x="1050.46" y="58.5" width="1.1" height="200" fill="#5e5e5e"/>
<rect x="1049.96" y="58.3" width="2" height="1.5" fill="#888"/>
<rect x="211.2" y="209.4" width="848" height="2.6" fill="#3a3a3a"/>
<rect x="211.2" y="76.55" width="121.19999999999999" height="12.6" fill="#2d6c70"/>
<rect x="211.2" y="76.55" width="121.19999999999999" height="0.9" fill="#7ed3db" opacity="0.35"/>
<path d="M212.2 80.25H331.4M212.2 85.45H331.4" stroke="#7ed3db" stroke-width="0.9" opacity="0.55"/>
<path d="M212.2 80.25H331.4M212.2 85.45H331.4" stroke="#7ed3db" stroke-width="2.2" stroke-dasharray="3 1.5 1.5 2" opacity="0.8"/>
<rect x="213" y="78.75" width="45" height="8.4" fill="#12302f"/>
<path d="M215 85.95c0-3 1.5-5 4.5-5.5M216 85.95l3-3" fill="none" stroke="#a3d6d6" stroke-width="1"/>
<text x="222" y="85.75" font-size="8" fill="#a3d6d6" textLength="35" lengthAdjust="spacingAndGlyphs">Delicious Dru</text>
<rect x="262" y="78.75" width="63" height="8.4" fill="#12302f"/>
<path d="M264 85.95c0-3 1.5-5 4.5-5.5M265 85.95l3-3" fill="none" stroke="#a3d6d6" stroke-width="1"/>
<text x="271" y="85.75" font-size="8" fill="#a3d6d6" textLength="53" lengthAdjust="spacingAndGlyphs">Delicious Drums E</text>
<rect x="332.4" y="76.55" width="10.300000000000011" height="12.6" fill="#3c2660"/>
<rect x="332.4" y="76.55" width="10.300000000000011" height="0.9" fill="#8e62d2" opacity="0.35"/>
<circle cx="337.5" cy="82.95" r="3" fill="none" stroke="#8e62d2" stroke-width="1.2"/>
<rect x="342.7" y="76.55" width="499.90000000000003" height="12.6" fill="#2d6c70"/>
<rect x="342.7" y="76.55" width="499.90000000000003" height="0.9" fill="#7ed3db" opacity="0.35"/>
<path d="M343.7 80.25H841.6M343.7 85.45H841.6" stroke="#7ed3db" stroke-width="0.9" opacity="0.55"/>
<path d="M343.7 80.25H841.6M343.7 85.45H841.6" stroke="#7ed3db" stroke-width="2.2" stroke-dasharray="3 1.5 1.5 2" opacity="0.8"/>
<rect x="344" y="78.75" width="63" height="8.4" fill="#12302f"/>
<path d="M346 85.95c0-3 1.5-5 4.5-5.5M347 85.95l3-3" fill="none" stroke="#a3d6d6" stroke-width="1"/>
<text x="353" y="85.75" font-size="8" fill="#a3d6d6" textLength="53" lengthAdjust="spacingAndGlyphs">Delicious Drums A</text>
<rect x="427" y="78.75" width="65" height="8.4" fill="#12302f"/>
<path d="M429 85.95c0-3 1.5-5 4.5-5.5M430 85.95l3-3" fill="none" stroke="#a3d6d6" stroke-width="1"/>
<text x="436" y="85.75" font-size="8" fill="#a3d6d6" textLength="55" lengthAdjust="spacingAndGlyphs">Delicious Drums A</text>
<rect x="511" y="78.75" width="64" height="8.4" fill="#12302f"/>
<path d="M513 85.95c0-3 1.5-5 4.5-5.5M514 85.95l3-3" fill="none" stroke="#a3d6d6" stroke-width="1"/>
<text x="520" y="85.75" font-size="8" fill="#a3d6d6" textLength="54" lengthAdjust="spacingAndGlyphs">Delicious Drums G</text>
<rect x="594" y="78.75" width="63" height="8.4" fill="#12302f"/>
<path d="M596 85.95c0-3 1.5-5 4.5-5.5M597 85.95l3-3" fill="none" stroke="#a3d6d6" stroke-width="1"/>
<text x="603" y="85.75" font-size="8" fill="#a3d6d6" textLength="53" lengthAdjust="spacingAndGlyphs">Delicious Drums C</text>
<rect x="677" y="78.75" width="63" height="8.4" fill="#12302f"/>
<path d="M679 85.95c0-3 1.5-5 4.5-5.5M680 85.95l3-3" fill="none" stroke="#a3d6d6" stroke-width="1"/>
<text x="686" y="85.75" font-size="8" fill="#a3d6d6" textLength="53" lengthAdjust="spacingAndGlyphs">Delicious Drums D</text>
<rect x="761" y="78.75" width="62" height="8.4" fill="#12302f"/>
<path d="M763 85.95c0-3 1.5-5 4.5-5.5M764 85.95l3-3" fill="none" stroke="#a3d6d6" stroke-width="1"/>
<text x="770" y="85.75" font-size="8" fill="#a3d6d6" textLength="52" lengthAdjust="spacingAndGlyphs">Delicious Drums D</text>
<rect x="925.9" y="76.55" width="133.30000000000007" height="12.6" fill="#2d6c70"/>
<rect x="925.9" y="76.55" width="133.30000000000007" height="0.9" fill="#7ed3db" opacity="0.35"/>
<path d="M926.9 80.25H1058.2M926.9 85.45H1058.2" stroke="#7ed3db" stroke-width="0.9" opacity="0.55"/>
<path d="M926.9 80.25H1058.2M926.9 85.45H1058.2" stroke="#7ed3db" stroke-width="2.2" stroke-dasharray="3 1.5 1.5 2" opacity="0.8"/>
<rect x="927" y="78.75" width="63" height="8.4" fill="#12302f"/>
<path d="M929 85.95c0-3 1.5-5 4.5-5.5M930 85.95l3-3" fill="none" stroke="#a3d6d6" stroke-width="1"/>
<text x="936" y="85.75" font-size="8" fill="#a3d6d6" textLength="53" lengthAdjust="spacingAndGlyphs">Delicious Drums E</text>
<rect x="1011" y="78.75" width="48.200000000000045" height="8.4" fill="#12302f"/>
<path d="M1013 85.95c0-3 1.5-5 4.5-5.5M1014 85.95l3-3" fill="none" stroke="#a3d6d6" stroke-width="1"/>
<text x="1020" y="85.75" font-size="8" fill="#a3d6d6" textLength="38.200000000000045" lengthAdjust="spacingAndGlyphs">Delicious Dru</text>
<rect x="509.7" y="91.19999999999999" width="40.599999999999966" height="12.6" fill="#3c2660"/>
<rect x="509.7" y="91.19999999999999" width="40.599999999999966" height="0.9" fill="#8e62d2" opacity="0.35"/>
<rect x="510.5" y="93.39999999999999" width="38.5" height="8.4" fill="#25133c"/>
<path d="M512.5 100.6c0-3 1.5-5 4.5-5.5M513.5 100.6l3-3" fill="none" stroke="#b9a0e0" stroke-width="1"/>
<text x="519.5" y="100.39999999999999" font-size="8" fill="#b9a0e0" textLength="28.5" lengthAdjust="spacingAndGlyphs">Delicious</text>
<rect x="842.6" y="91.19999999999999" width="41.5" height="12.6" fill="#3c2660"/>
<rect x="842.6" y="91.19999999999999" width="41.5" height="0.9" fill="#8e62d2" opacity="0.35"/>
<rect x="843.5" y="93.39999999999999" width="39.5" height="8.4" fill="#25133c"/>
<path d="M845.5 100.6c0-3 1.5-5 4.5-5.5M846.5 100.6l3-3" fill="none" stroke="#b9a0e0" stroke-width="1"/>
<text x="852.5" y="100.39999999999999" font-size="8" fill="#b9a0e0" textLength="29.5" lengthAdjust="spacingAndGlyphs">Delicious</text>
<rect x="822.6" y="105.85" width="144.79999999999995" height="12.6" fill="#215e50"/>
<rect x="822.6" y="105.85" width="144.79999999999995" height="0.9" fill="#5fc4a4" opacity="0.35"/>
<rect x="823.5" y="108.05" width="61.5" height="8.4" fill="#0e2822"/>
<path d="M825.5 115.25c0-3 1.5-5 4.5-5.5M826.5 115.25l3-3" fill="none" stroke="#a0d8c4" stroke-width="1"/>
<text x="832.5" y="115.05" font-size="8" fill="#a0d8c4" textLength="51.5" lengthAdjust="spacingAndGlyphs">Delicious Drums 1</text>
<path d="M886 109.75H956M886 114.75H956" stroke="#5fc4a4" stroke-width="1" opacity="0.8"/>
<rect x="956.7" y="105.85" width="10.7" height="12.6" fill="#9fb5ab"/>
<rect x="211.2" y="135.15" width="121.5" height="12.6" fill="#2e466c"/>
<rect x="211.2" y="135.15" width="121.5" height="0.9" fill="#8fb2e6" opacity="0.35"/>
<path d="M212.2 138.85000000000002H331.7M212.2 144.05H331.7" stroke="#8fb2e6" stroke-width="0.9" opacity="0.55"/>
<path d="M212.2 138.85000000000002H331.7M212.2 144.05H331.7" stroke="#8fb2e6" stroke-width="2.2" stroke-dasharray="14 4 6 9 10 3" opacity="0.8"/>
<rect x="212" y="137.35000000000002" width="41" height="8.4" fill="#161f33"/>
<path d="M214 144.55c0-3 1.5-5 4.5-5.5M215 144.55l3-3" fill="none" stroke="#a9c1e8" stroke-width="1"/>
<text x="221" y="144.35000000000002" font-size="8" fill="#a9c1e8" textLength="31" lengthAdjust="spacingAndGlyphs">NewWorld</text>
<rect x="254" y="137.35000000000002" width="66" height="8.4" fill="#161f33"/>
<path d="M256 144.55c0-3 1.5-5 4.5-5.5M257 144.55l3-3" fill="none" stroke="#a9c1e8" stroke-width="1"/>
<text x="263" y="144.35000000000002" font-size="8" fill="#a9c1e8" textLength="56" lengthAdjust="spacingAndGlyphs">NewWorld Verse 1B</text>
<rect x="342.7" y="135.15" width="167.0" height="12.6" fill="#2e466c"/>
<rect x="342.7" y="135.15" width="167.0" height="0.9" fill="#8fb2e6" opacity="0.35"/>
<path d="M343.7 138.85000000000002H508.7M343.7 144.05H508.7" stroke="#8fb2e6" stroke-width="0.9" opacity="0.55"/>
<path d="M343.7 138.85000000000002H508.7M343.7 144.05H508.7" stroke="#8fb2e6" stroke-width="2.2" stroke-dasharray="14 4 6 9 10 3" opacity="0.8"/>
<rect x="344" y="137.35000000000002" width="79" height="8.4" fill="#161f33"/>
<path d="M346 144.55c0-3 1.5-5 4.5-5.5M347 144.55l3-3" fill="none" stroke="#a9c1e8" stroke-width="1"/>
<text x="353" y="144.35000000000002" font-size="8" fill="#a9c1e8" textLength="69" lengthAdjust="spacingAndGlyphs">NewWorld Prechorus A</text>
<rect x="520.5" y="135.15" width="155.10000000000002" height="12.6" fill="#2e466c"/>
<rect x="520.5" y="135.15" width="155.10000000000002" height="0.9" fill="#8fb2e6" opacity="0.35"/>
<path d="M521.5 138.85000000000002H674.6M521.5 144.05H674.6" stroke="#8fb2e6" stroke-width="0.9" opacity="0.55"/>
<path d="M521.5 138.85000000000002H674.6M521.5 144.05H674.6" stroke="#8fb2e6" stroke-width="2.2" stroke-dasharray="14 4 6 9 10 3" opacity="0.8"/>
<rect x="522" y="137.35000000000002" width="78" height="8.4" fill="#161f33"/>
<path d="M524 144.55c0-3 1.5-5 4.5-5.5M525 144.55l3-3" fill="none" stroke="#a9c1e8" stroke-width="1"/>
<text x="531" y="144.35000000000002" font-size="8" fill="#a9c1e8" textLength="68" lengthAdjust="spacingAndGlyphs">NewWorld Prechorus B</text>
<rect x="738.5" y="133.55" width="120" height="15" fill="#d2e07e"/>
<rect x="739.8" y="134.85000000000002" width="117.4" height="12.4" fill="#8fb0e2"/>
<rect x="741" y="137.35000000000002" width="64" height="8.4" fill="#1a2540"/>
<path d="M743 144.55c0-3 1.5-5 4.5-5.5M744 144.55l3-3" fill="none" stroke="#a9c1e8" stroke-width="1"/>
<text x="750" y="144.35000000000002" font-size="8" fill="#a9c1e8" textLength="54" lengthAdjust="spacingAndGlyphs">NewWorld Chorus</text>
<path d="M806 139.05H850M806 143.55H850" stroke="#3a5070" stroke-width="1.2" stroke-dasharray="2 1 3 1"/>
<rect x="851" y="134.85000000000002" width="5" height="12.4" fill="#b8cce8"/>
<rect x="925.9" y="135.15" width="133.30000000000007" height="12.6" fill="#2e466c"/>
<rect x="925.9" y="135.15" width="133.30000000000007" height="0.9" fill="#8fb2e6" opacity="0.35"/>
<path d="M926.9 138.85000000000002H1058.2M926.9 144.05H1058.2" stroke="#8fb2e6" stroke-width="0.9" opacity="0.55"/>
<path d="M926.9 138.85000000000002H1058.2M926.9 144.05H1058.2" stroke="#8fb2e6" stroke-width="2.2" stroke-dasharray="14 4 6 9 10 3" opacity="0.8"/>
<rect x="927" y="137.35000000000002" width="73" height="8.4" fill="#161f33"/>
<path d="M929 144.55c0-3 1.5-5 4.5-5.5M930 144.55l3-3" fill="none" stroke="#a9c1e8" stroke-width="1"/>
<text x="936" y="144.35000000000002" font-size="8" fill="#a9c1e8" textLength="63" lengthAdjust="spacingAndGlyphs">NewWorld Verse 2A</text>
<rect x="1002" y="137.35000000000002" width="57.200000000000045" height="8.4" fill="#161f33"/>
<path d="M1004 144.55c0-3 1.5-5 4.5-5.5M1005 144.55l3-3" fill="none" stroke="#a9c1e8" stroke-width="1"/>
<text x="1011" y="144.35000000000002" font-size="8" fill="#a9c1e8" textLength="47.200000000000045" lengthAdjust="spacingAndGlyphs">NewWorld Verse</text>
<rect x="342.7" y="149.79999999999998" width="167.0" height="12.6" fill="#6a1c2a"/>
<rect x="342.7" y="149.79999999999998" width="167.0" height="0.9" fill="#d46070" opacity="0.35"/>
<path d="M343.7 153.5H508.7M343.7 158.7H508.7" stroke="#d46070" stroke-width="0.9" opacity="0.55"/>
<path d="M343.7 153.5H508.7M343.7 158.7H508.7" stroke="#d46070" stroke-width="2.2" stroke-dasharray="3 30 2 25" opacity="0.8"/>
<rect x="344" y="152.0" width="66" height="8.4" fill="#3a0f18"/>
<path d="M346 159.2c0-3 1.5-5 4.5-5.5M347 159.2l3-3" fill="none" stroke="#d27080" stroke-width="1"/>
<text x="353" y="159.0" font-size="8" fill="#d27080" textLength="56" lengthAdjust="spacingAndGlyphs">NewWorld Choir D</text>
<rect x="676.4" y="149.79999999999998" width="166.20000000000005" height="12.6" fill="#6a1c2a"/>
<rect x="676.4" y="149.79999999999998" width="166.20000000000005" height="0.9" fill="#d46070" opacity="0.35"/>
<path d="M677.4 153.5H841.6M677.4 158.7H841.6" stroke="#d46070" stroke-width="0.9" opacity="0.55"/>
<path d="M677.4 153.5H841.6M677.4 158.7H841.6" stroke="#d46070" stroke-width="2.2" stroke-dasharray="3 30 2 25" opacity="0.8"/>
<rect x="677" y="152.0" width="65" height="8.4" fill="#3a0f18"/>
<path d="M679 159.2c0-3 1.5-5 4.5-5.5M680 159.2l3-3" fill="none" stroke="#d27080" stroke-width="1"/>
<text x="686" y="159.0" font-size="8" fill="#d27080" textLength="55" lengthAdjust="spacingAndGlyphs">NewWorld Choir B</text>
<rect x="211.2" y="179.1" width="298.5" height="12.6" fill="#5b5a18"/>
<rect x="211.2" y="179.1" width="298.5" height="0.9" fill="#c4c250" opacity="0.35"/>
<rect x="211.2" y="181.3" width="7.800000000000011" height="8.4" fill="#28280a"/>
<path d="M213.2 188.5c0-3 1.5-5 4.5-5.5M214.2 188.5l3-3" fill="none" stroke="#dcd994" stroke-width="1"/>
<rect x="221.0" y="181.3" width="36.0" height="8.4" fill="#28280a"/>
<path d="M223.0 188.5c0-3 1.5-5 4.5-5.5M224.0 188.5l3-3" fill="none" stroke="#dcd994" stroke-width="1"/>
<text x="230.0" y="188.3" font-size="8" fill="#dcd994" textLength="26.0" lengthAdjust="spacingAndGlyphs">Delicious</text>
<rect x="262.64" y="181.3" width="36.0" height="8.4" fill="#28280a"/>
<path d="M264.64 188.5c0-3 1.5-5 4.5-5.5M265.64 188.5l3-3" fill="none" stroke="#dcd994" stroke-width="1"/>
<text x="271.64" y="188.3" font-size="8" fill="#dcd994" textLength="26.0" lengthAdjust="spacingAndGlyphs">Delicious</text>
<rect x="304.28" y="181.3" width="36.0" height="8.4" fill="#28280a"/>
<path d="M306.28 188.5c0-3 1.5-5 4.5-5.5M307.28 188.5l3-3" fill="none" stroke="#dcd994" stroke-width="1"/>
<text x="313.28" y="188.3" font-size="8" fill="#dcd994" textLength="26.0" lengthAdjust="spacingAndGlyphs">Delicious</text>
<rect x="345.92" y="181.3" width="36.0" height="8.4" fill="#28280a"/>
<path d="M347.92 188.5c0-3 1.5-5 4.5-5.5M348.92 188.5l3-3" fill="none" stroke="#dcd994" stroke-width="1"/>
<text x="354.92" y="188.3" font-size="8" fill="#dcd994" textLength="26.0" lengthAdjust="spacingAndGlyphs">Delicious</text>
<rect x="387.56" y="181.3" width="36.0" height="8.4" fill="#28280a"/>
<path d="M389.56 188.5c0-3 1.5-5 4.5-5.5M390.56 188.5l3-3" fill="none" stroke="#dcd994" stroke-width="1"/>
<text x="396.56" y="188.3" font-size="8" fill="#dcd994" textLength="26.0" lengthAdjust="spacingAndGlyphs">Delicious</text>
<rect x="429.2" y="181.3" width="36.0" height="8.4" fill="#28280a"/>
<path d="M431.2 188.5c0-3 1.5-5 4.5-5.5M432.2 188.5l3-3" fill="none" stroke="#dcd994" stroke-width="1"/>
<text x="438.2" y="188.3" font-size="8" fill="#dcd994" textLength="26.0" lengthAdjust="spacingAndGlyphs">Delicious</text>
<rect x="470.84000000000003" y="181.3" width="36.0" height="8.4" fill="#28280a"/>
<path d="M472.84000000000003 188.5c0-3 1.5-5 4.5-5.5M473.84000000000003 188.5l3-3" fill="none" stroke="#dcd994" stroke-width="1"/>
<text x="479.84000000000003" y="188.3" font-size="8" fill="#dcd994" textLength="26.0" lengthAdjust="spacingAndGlyphs">Delicious</text>
<rect x="509.7" y="179.1" width="166.7" height="12.6" fill="#5b5a18"/>
<rect x="509.7" y="179.1" width="166.7" height="0.9" fill="#c4c250" opacity="0.35"/>
<rect x="511" y="181.3" width="19" height="8.4" fill="#28280a"/>
<path d="M513 188.5c0-3 1.5-5 4.5-5.5M514 188.5l3-3" fill="none" stroke="#dcd994" stroke-width="1"/>
<text x="520" y="188.3" font-size="8" fill="#dcd994" textLength="9" lengthAdjust="spacingAndGlyphs">De</text>
<rect x="531" y="181.3" width="19" height="8.4" fill="#28280a"/>
<path d="M533 188.5c0-3 1.5-5 4.5-5.5M534 188.5l3-3" fill="none" stroke="#dcd994" stroke-width="1"/>
<text x="540" y="188.3" font-size="8" fill="#dcd994" textLength="9" lengthAdjust="spacingAndGlyphs">De</text>
<rect x="552" y="181.3" width="40" height="8.4" fill="#28280a"/>
<path d="M554 188.5c0-3 1.5-5 4.5-5.5M555 188.5l3-3" fill="none" stroke="#dcd994" stroke-width="1"/>
<text x="561" y="188.3" font-size="8" fill="#dcd994" textLength="30" lengthAdjust="spacingAndGlyphs">Delicious A</text>
<rect x="594" y="181.3" width="19" height="8.4" fill="#28280a"/>
<path d="M596 188.5c0-3 1.5-5 4.5-5.5M597 188.5l3-3" fill="none" stroke="#dcd994" stroke-width="1"/>
<text x="603" y="188.3" font-size="8" fill="#dcd994" textLength="9" lengthAdjust="spacingAndGlyphs">De</text>
<rect x="614" y="181.3" width="19" height="8.4" fill="#28280a"/>
<path d="M616 188.5c0-3 1.5-5 4.5-5.5M617 188.5l3-3" fill="none" stroke="#dcd994" stroke-width="1"/>
<text x="623" y="188.3" font-size="8" fill="#dcd994" textLength="9" lengthAdjust="spacingAndGlyphs">De</text>
<rect x="635" y="181.3" width="40" height="8.4" fill="#28280a"/>
<path d="M637 188.5c0-3 1.5-5 4.5-5.5M638 188.5l3-3" fill="none" stroke="#dcd994" stroke-width="1"/>
<text x="644" y="188.3" font-size="8" fill="#dcd994" textLength="30" lengthAdjust="spacingAndGlyphs">Delicious A</text>
<rect x="838" y="179.1" width="25.600000000000023" height="12.6" fill="#5b5a18"/>
<rect x="838" y="179.1" width="25.600000000000023" height="0.9" fill="#c4c250" opacity="0.35"/>
<rect x="840" y="181.3" width="22" height="8.4" fill="#28280a"/>
<path d="M842 188.5c0-3 1.5-5 4.5-5.5M843 188.5l3-3" fill="none" stroke="#dcd994" stroke-width="1"/>
<text x="849" y="188.3" font-size="8" fill="#dcd994" textLength="12" lengthAdjust="spacingAndGlyphs">Del</text>
<rect x="838" y="178.5" width="2" height="13.5" fill="#d8d0a0"/><rect x="861.6" y="178.5" width="2" height="13.5" fill="#d8d0a0"/>
<rect x="925.9" y="179.1" width="133.30000000000007" height="12.6" fill="#5b5a18"/>
<rect x="925.9" y="179.1" width="133.30000000000007" height="0.9" fill="#c4c250" opacity="0.35"/>
<rect x="927" y="181.3" width="39" height="8.4" fill="#28280a"/>
<path d="M929 188.5c0-3 1.5-5 4.5-5.5M930 188.5l3-3" fill="none" stroke="#dcd994" stroke-width="1"/>
<text x="936" y="188.3" font-size="8" fill="#dcd994" textLength="29" lengthAdjust="spacingAndGlyphs">Delicious</text>
<rect x="969" y="181.3" width="39" height="8.4" fill="#28280a"/>
<path d="M971 188.5c0-3 1.5-5 4.5-5.5M972 188.5l3-3" fill="none" stroke="#dcd994" stroke-width="1"/>
<text x="978" y="188.3" font-size="8" fill="#dcd994" textLength="29" lengthAdjust="spacingAndGlyphs">Delicious</text>
<rect x="1011" y="181.3" width="39" height="8.4" fill="#28280a"/>
<path d="M1013 188.5c0-3 1.5-5 4.5-5.5M1014 188.5l3-3" fill="none" stroke="#dcd994" stroke-width="1"/>
<text x="1020" y="188.3" font-size="8" fill="#dcd994" textLength="29" lengthAdjust="spacingAndGlyphs">Delicious</text>
<rect x="1052" y="181.3" width="7.2000000000000455" height="8.4" fill="#28280a"/>
<path d="M1054 188.5c0-3 1.5-5 4.5-5.5M1055 188.5l3-3" fill="none" stroke="#dcd994" stroke-width="1"/>
<rect x="676.4" y="193.74999999999997" width="20.78" height="12.6" fill="#2e466c"/>
<rect x="677.0" y="194.54999999999998" width="19.6" height="11" fill="#161f33" opacity="0.55"/>
<path d="M678.4 204.14999999999998c0-3.5 2-6 5.5-6.5M679.9 204.14999999999998l3.5-3.5" fill="none" stroke="#a9c1e8" stroke-width="1.3"/>
<text x="687.4" y="202.95" font-size="8" fill="#a9c1e8">D</text>
<path d="M693.4 197.14999999999998l2 2l-2 2M693.4 201.14999999999998l2 2l-2 2" fill="none" stroke="#8fb2e6" stroke-width="0.9"/>
<rect x="697.18" y="193.74999999999997" width="20.78" height="12.6" fill="#35904c"/>
<rect x="697.78" y="194.54999999999998" width="19.6" height="11" fill="#1a4a26" opacity="0.55"/>
<path d="M699.18 204.14999999999998c0-3.5 2-6 5.5-6.5M700.68 204.14999999999998l3.5-3.5" fill="none" stroke="#b0f0c0" stroke-width="1.3"/>
<text x="708.18" y="202.95" font-size="8" fill="#b0f0c0">D</text>
<path d="M714.18 197.14999999999998l2 2l-2 2M714.18 201.14999999999998l2 2l-2 2" fill="none" stroke="#70e090" stroke-width="0.9"/>
<rect x="717.96" y="193.74999999999997" width="20.78" height="12.6" fill="#2e466c"/>
<rect x="718.5600000000001" y="194.54999999999998" width="19.6" height="11" fill="#161f33" opacity="0.55"/>
<path d="M719.96 204.14999999999998c0-3.5 2-6 5.5-6.5M721.46 204.14999999999998l3.5-3.5" fill="none" stroke="#a9c1e8" stroke-width="1.3"/>
<text x="728.96" y="202.95" font-size="8" fill="#a9c1e8">D</text>
<path d="M734.96 197.14999999999998l2 2l-2 2M734.96 201.14999999999998l2 2l-2 2" fill="none" stroke="#8fb2e6" stroke-width="0.9"/>
<rect x="738.74" y="193.74999999999997" width="20.78" height="12.6" fill="#35904c"/>
<rect x="739.34" y="194.54999999999998" width="19.6" height="11" fill="#1a4a26" opacity="0.55"/>
<path d="M740.74 204.14999999999998c0-3.5 2-6 5.5-6.5M742.24 204.14999999999998l3.5-3.5" fill="none" stroke="#b0f0c0" stroke-width="1.3"/>
<text x="749.74" y="202.95" font-size="8" fill="#b0f0c0">D</text>
<path d="M755.74 197.14999999999998l2 2l-2 2M755.74 201.14999999999998l2 2l-2 2" fill="none" stroke="#70e090" stroke-width="0.9"/>
<rect x="759.52" y="193.74999999999997" width="20.78" height="12.6" fill="#2e466c"/>
<rect x="760.12" y="194.54999999999998" width="19.6" height="11" fill="#161f33" opacity="0.55"/>
<path d="M761.52 204.14999999999998c0-3.5 2-6 5.5-6.5M763.02 204.14999999999998l3.5-3.5" fill="none" stroke="#a9c1e8" stroke-width="1.3"/>
<text x="770.52" y="202.95" font-size="8" fill="#a9c1e8">D</text>
<path d="M776.52 197.14999999999998l2 2l-2 2M776.52 201.14999999999998l2 2l-2 2" fill="none" stroke="#8fb2e6" stroke-width="0.9"/>
<rect x="780.3" y="193.74999999999997" width="20.78" height="12.6" fill="#35904c"/>
<rect x="780.9" y="194.54999999999998" width="19.6" height="11" fill="#1a4a26" opacity="0.55"/>
<path d="M782.3 204.14999999999998c0-3.5 2-6 5.5-6.5M783.8 204.14999999999998l3.5-3.5" fill="none" stroke="#b0f0c0" stroke-width="1.3"/>
<text x="791.3" y="202.95" font-size="8" fill="#b0f0c0">D</text>
<path d="M797.3 197.14999999999998l2 2l-2 2M797.3 201.14999999999998l2 2l-2 2" fill="none" stroke="#70e090" stroke-width="0.9"/>
<rect x="801.0799999999999" y="193.74999999999997" width="20.78" height="12.6" fill="#2e466c"/>
<rect x="801.68" y="194.54999999999998" width="19.6" height="11" fill="#161f33" opacity="0.55"/>
<path d="M803.0799999999999 204.14999999999998c0-3.5 2-6 5.5-6.5M804.5799999999999 204.14999999999998l3.5-3.5" fill="none" stroke="#a9c1e8" stroke-width="1.3"/>
<text x="812.0799999999999" y="202.95" font-size="8" fill="#a9c1e8">D</text>
<path d="M818.0799999999999 197.14999999999998l2 2l-2 2M818.0799999999999 201.14999999999998l2 2l-2 2" fill="none" stroke="#8fb2e6" stroke-width="0.9"/>
<rect x="821.86" y="193.74999999999997" width="20.78" height="12.6" fill="#35904c"/>
<rect x="822.46" y="194.54999999999998" width="19.6" height="11" fill="#1a4a26" opacity="0.55"/>
<path d="M823.86 204.14999999999998c0-3.5 2-6 5.5-6.5M825.36 204.14999999999998l3.5-3.5" fill="none" stroke="#b0f0c0" stroke-width="1.3"/>
<text x="832.86" y="202.95" font-size="8" fill="#b0f0c0">D</text>
<path d="M838.86 197.14999999999998l2 2l-2 2M838.86 201.14999999999998l2 2l-2 2" fill="none" stroke="#70e090" stroke-width="0.9"/>
<rect x="858.5" y="193.74999999999997" width="67.39999999999998" height="12.6" fill="#2e466c"/>
<rect x="858.5" y="193.74999999999997" width="67.39999999999998" height="0.9" fill="#8fb2e6" opacity="0.35"/>
<rect x="860" y="195.95" width="20" height="8.4" fill="#161f33"/>
<path d="M862 203.14999999999998c0-3 1.5-5 4.5-5.5M863 203.14999999999998l3-3" fill="none" stroke="#a9c1e8" stroke-width="1"/>
<text x="869" y="202.95" font-size="8" fill="#a9c1e8" textLength="10" lengthAdjust="spacingAndGlyphs">Del</text>
<rect x="881" y="195.95" width="22" height="8.4" fill="#161f33"/>
<path d="M883 203.14999999999998c0-3 1.5-5 4.5-5.5M884 203.14999999999998l3-3" fill="none" stroke="#a9c1e8" stroke-width="1"/>
<text x="890" y="202.95" font-size="8" fill="#a9c1e8" textLength="12" lengthAdjust="spacingAndGlyphs">De</text>
<rect x="904" y="195.95" width="21" height="8.4" fill="#161f33"/>
<path d="M906 203.14999999999998c0-3 1.5-5 4.5-5.5M907 203.14999999999998l3-3" fill="none" stroke="#a9c1e8" stroke-width="1"/>
<text x="913" y="202.95" font-size="8" fill="#a9c1e8" textLength="11" lengthAdjust="spacingAndGlyphs">De</text>
<rect x="858.5" y="193.14999999999998" width="2" height="13.5" fill="#c8d0d8"/>
<rect x="211.2" y="207.3" width="298.5" height="2.1" fill="#4a7a52"/>
<rect x="592.8" y="207.3" width="20.90000000000009" height="2.1" fill="#4a7a52"/>
<rect x="613.7" y="207.3" width="20.799999999999955" height="2.1" fill="#3f5a78"/>
<rect x="634.5" y="207.3" width="41.89999999999998" height="2.1" fill="#4a7a52"/>
<rect x="925.9" y="207.3" width="133.30000000000007" height="2.1" fill="#4a7a52"/>
<rect x="821.6" y="58" width="1" height="201" fill="#111"/>
<rect x="211.2" y="259" width="858" height="9.5" fill="#393939"/>
<rect x="212" y="259.5" width="8.5" height="8.5" fill="#4a4a4a"/><path d="M218 261l-3.5 2.7l3.5 2.7z" fill="#eee"/>
<rect x="221" y="259.5" width="39" height="8.5" fill="#2e2e2e"/><rect x="261" y="260.5" width="2" height="6.5" fill="#555"/>
<rect x="211.2" y="268.5" width="858" height="17.5" fill="#3b3b3b"/>
<rect x="211.2" y="268.5" width="858" height="0.8" fill="#2a2a2a"/>
<circle cx="220.3" cy="276.8" r="4" fill="#a85858" stroke="#9a9a9a" stroke-width="1.2"/>
<path d="M236 276.8a4 4 0 1 1 1.5 3" fill="none" stroke="#33b552" stroke-width="1.8"/><path d="M234 274.8l2 3l2-3z" fill="#33b552"/>
<rect x="255.5" y="273.3" width="2" height="7" fill="#999"/><path d="M258.5 273.3l5 3.5l-5 3.5z" fill="#eee"/>
<path d="M270.5 272.3l7.5 4.5l-7.5 4.5z" fill="#eee"/>
<rect x="285.3" y="272.3" width="2.5" height="9" fill="#eee"/><rect x="289.5" y="272.3" width="2.5" height="9" fill="#eee"/>
<rect x="299.5" y="272.8" width="8" height="8" fill="#eee"/>
<rect x="319.5" y="273.3" width="1.5" height="7" fill="#eee"/><path d="M327 273.3l-5.5 3.5l5.5 3.5z" fill="#eee"/>
<rect x="339.5" y="273.3" width="1.5" height="7" fill="#eee"/><path d="M333.5 273.3l5.5 3.5l-5.5 3.5z" fill="#eee"/>
<circle cx="356.8" cy="276.8" r="3.8" fill="#6a4a4a" stroke="#999" stroke-width="1.2"/><circle cx="356.8" cy="276.8" r="1.2" fill="#ddd"/>
<rect x="368.5" y="272.3" width="6.5" height="9" fill="#eee"/><rect x="370" y="273.8" width="3.5" height="6" fill="#3b3b3b"/><path d="M369.2 273.8v6M374.3 273.8v6" stroke="#3b3b3b" stroke-width="0.8" stroke-dasharray="1 1"/>
<path d="M386 280.8l2.5-8l3 1l2 7z" fill="none" stroke="#eee" stroke-width="1.2"/><path d="M386 272.8l3 3" stroke="#eee"/>
<path d="M402 280.8l2-8l1.5 0l1 8z" fill="#e6c21a"/><circle cx="408" cy="278.3" r="2.3" fill="none" stroke="#eee" stroke-width="1.2"/>
<path d="M415 275.3h4l-2 2.5z" fill="#ddd"/>
<rect x="1059.3" y="21" width="11" height="247.5" fill="#333"/>
<rect x="1060.3" y="22" width="9" height="11" fill="#444"/><path d="M1062 29.5l3-3l3 3z" fill="#eee"/>
<rect x="1060.8" y="33" width="8" height="89" fill="#3c3c3c" stroke="#292929" stroke-width="0.8"/><rect x="1062" y="35" width="5.5" height="4" fill="#454545"/>
<rect x="1060.3" y="175" width="9" height="10" fill="#474747"/>
<path d="M1062.5 178.5h5l-2.5 3z" fill="#eee"/>
<rect x="1060.3" y="186" width="9" height="10" fill="#474747"/>
<path d="M1062.5 191h5M1065 188.5v5" stroke="#eee" stroke-width="1.4"/>
<rect x="1060.3" y="199" width="9" height="10" fill="#474747"/>
<path d="M1062.5 204h5" stroke="#eee" stroke-width="1.4"/>
<rect x="1060.3" y="211" width="9" height="10" fill="#474747"/>
<path d="M1062.5 217.5h5l-2.5-3z" fill="#eee"/>
<rect x="1060.3" y="247" width="9" height="10" fill="#474747"/>
<path d="M1062.5 250.5h5l-2.5 3z" fill="#eee"/>
<rect x="1061.5" y="222" width="6.5" height="11" fill="#3c3c3c" stroke="#555" stroke-width="0.6"/>
<rect x="1025.5" y="258" width="9" height="9.5" fill="#474747"/>
<path d="M1028.5 260l4 2.7l-4 2.7z" fill="#eee"/>
<rect x="1035.5" y="258" width="9" height="9.5" fill="#474747"/>
<path d="M1037.5 262.7h5M1040 260.2v5" stroke="#eee" stroke-width="1.4"/>
<rect x="1049.5" y="258" width="9" height="9.5" fill="#474747"/>
<path d="M1051.5 262.7h5" stroke="#eee" stroke-width="1.4"/>
<rect x="1060.0" y="258" width="9" height="9.5" fill="#474747"/>
<circle cx="1064" cy="262" r="2.2" fill="none" stroke="#eee" stroke-width="1.2"/><path d="M1065.5 263.5l2 2" stroke="#eee" stroke-width="1.4"/>
<rect x="1070.3" y="0" width="2.5" height="290" fill="#1f1f1f"/>
<rect x="14" y="207.8" width="196" height="4" fill="#2a2a2a"/>
<rect x="18" y="207.8" width="7" height="2" fill="#bbb"/><rect x="28" y="207.8" width="9.5" height="2" fill="#4a9a5a"/></svg>
<svg width="1170" height="608" style="left:0;top:0">
<rect x="0" y="290" width="1073" height="318" fill="#2a2a2a"/>
<rect x="0" y="290" width="2" height="318" fill="#1a1a1a"/>
<path d="M3.5 292.5l5 5M8.5 292.5l-5 5" stroke="#eee" stroke-width="1.5"/><path d="M3.5 300l5 2.5l-5 2.5l1.2-2.5z" fill="#eee"/>
<rect x="5" y="313.0" width="1.6" height="1.6" fill="#ddd"/>
<rect x="5" y="315.6" width="1.6" height="1.6" fill="#ddd"/>
<rect x="5" y="318.2" width="1.6" height="1.6" fill="#ddd"/>
<rect x="5" y="320.8" width="1.6" height="1.6" fill="#ddd"/>
<rect x="5" y="323.4" width="1.6" height="1.6" fill="#ddd"/>
<rect x="5" y="326.0" width="1.6" height="1.6" fill="#ddd"/>
<rect x="5" y="328.6" width="1.6" height="1.6" fill="#ddd"/>
<path d="M1063 291.5l5 5M1068 291.5l-5 5" stroke="#eee" stroke-width="1.5"/><path d="M1062.5 304.5l3-4.5l3 4.5z" fill="#eee"/>
<rect x="1064.8" y="311.0" width="1.6" height="1.6" fill="#ddd"/>
<rect x="1064.8" y="313.6" width="1.6" height="1.6" fill="#ddd"/>
<rect x="1064.8" y="316.2" width="1.6" height="1.6" fill="#ddd"/>
<rect x="1064.8" y="318.8" width="1.6" height="1.6" fill="#ddd"/>
<rect x="1064.8" y="321.4" width="1.6" height="1.6" fill="#ddd"/>
<rect x="1064.8" y="324.0" width="1.6" height="1.6" fill="#ddd"/>
<rect x="1064.8" y="326.6" width="1.6" height="1.6" fill="#ddd"/>
<rect x="1070.3" y="290" width="2.5" height="318" fill="#1f1f1f"/>
<rect x="12" y="290.2" width="1043" height="11.5" fill="#dadada"/><rect x="12" y="290.2" width="1043" height="4" fill="#e2e2e2"/>
<text x="20" y="299.3" font-size="8" fill="#333" textLength="38" lengthAdjust="spacingAndGlyphs">Einstellungen</text>
<text x="65.3" y="299.3" font-size="8" fill="#333" textLength="32" lengthAdjust="spacingAndGlyphs">Bearbeiten</text>
<text x="104.5" y="299.3" font-size="8" fill="#333" textLength="36" lengthAdjust="spacingAndGlyphs">Algorithmus</text>
<text x="145.5" y="299.3" font-size="8" fill="#333" textLength="27" lengthAdjust="spacingAndGlyphs">Optionen</text>
<text x="179.5" y="299.3" font-size="8" fill="#333" textLength="13" lengthAdjust="spacingAndGlyphs">Hilfe</text>
<text x="982" y="299.5" font-size="9.5" font-weight="bold" fill="#1a1a1a" textLength="39" lengthAdjust="spacingAndGlyphs">melodyne</text>
<text x="1022" y="299.5" font-size="9.5" fill="#e4a878" textLength="28" lengthAdjust="spacingAndGlyphs">essential</text>
<rect x="12" y="301.7" width="1043" height="1.5" fill="#505050"/>
<rect x="12" y="303.2" width="1042" height="23.8" fill="#c4c4c4"/>
<rect x="19.5" y="308.5" width="12.5" height="13.2" fill="#d3d3d3" stroke="#b0b0b0" stroke-width="0.6"/>
<path d="M23 312h6M23 316h6" stroke="#333" stroke-width="1.1"/><circle cx="25.5" cy="318.5" r="1.2" fill="#333"/><path d="M26 310v7" stroke="#333" stroke-width="1"/>
<rect x="39.5" y="308.5" width="33.5" height="13.2" fill="#c9c9c9" stroke="#adadad" stroke-width="0.6"/>
<text x="42" y="318.5" font-size="8" fill="#222" textLength="12" lengthAdjust="spacingAndGlyphs">130</text>
<rect x="73" y="309" width="8" height="12.5" fill="#f4f4f4"/><rect x="76.5" y="317" width="1.5" height="1.5" fill="#222"/>
<rect x="395.3" y="309" width="14" height="13" fill="#f2f2f2"/><rect x="409.3" y="309" width="14" height="13" fill="#d6d6d6"/><rect x="423.3" y="309" width="14" height="13" fill="#d6d6d6"/>
<circle cx="400" cy="316.7" r="2.3" fill="#e07848"/><circle cx="404" cy="313.7" r="2.3" fill="#e07848"/><circle cx="416.3" cy="315.5" r="2.6" fill="#e08868"/>
<path d="M426 320l3-3l2 1l3-5M426.5 313l2 2" stroke="#222" stroke-width="1.5" fill="none"/>
<rect x="443.5" y="309" width="14" height="13" fill="#f2f2f2"/><rect x="457.5" y="309" width="14" height="13" fill="#d6d6d6"/><rect x="471.5" y="309" width="14" height="13" fill="#d6d6d6"/>
<path d="M447.5 311l6 5.5l-2.5 0.5l2 3.5l-1.3 0.7l-2-3.5l-2.2 2z" fill="#111"/>
<path d="M460 318c-1-3 0-6 2-6c2 0 3 1 4 0c1 0 2 2 1 5l-1.5 3h-4z" fill="none" stroke="#222" stroke-width="1"/>
<circle cx="477.5" cy="314.5" r="2.6" fill="none" stroke="#222" stroke-width="1.2"/><path d="M479.5 316.5l2.5 2.5" stroke="#222" stroke-width="1.5"/>
<rect x="531.8" y="310" width="43" height="12" fill="#c2c2c2" stroke="#acacac" stroke-width="0.7" rx="1"/><rect x="553" y="315.8" width="1" height="1" fill="#777"/>
<rect x="580.2" y="310" width="43" height="12" fill="#c2c2c2" stroke="#acacac" stroke-width="0.7" rx="1"/><rect x="601.5" y="315.8" width="1" height="1" fill="#777"/>
<rect x="629.4" y="309.5" width="18.6" height="12.8" fill="#d0d0d0" stroke="#b0b0b0" stroke-width="0.6" rx="1"/><rect x="652.7" y="309.5" width="18.6" height="12.8" fill="#d0d0d0" stroke="#b0b0b0" stroke-width="0.6" rx="1"/>
<path d="M634.5 315.9h8.5M638.7 311.5v9" stroke="#222" stroke-width="1"/><rect x="636.5" y="314" width="4.5" height="4" fill="#222"/>
<path d="M657.5 315.9h9" stroke="#222" stroke-width="1"/><path d="M659 313h1.5v1.5h-1.5zM663 313h1.5v1.5h-1.5zM659 317.5h1.5v1.5h-1.5zM663 317.5h1.5v1.5h-1.5z" fill="#222"/>
<rect x="12" y="327" width="1042" height="2" fill="#555"/>
<rect x="12" y="329" width="1042" height="18.8" fill="#c6c6c6"/>
<rect x="36.6" y="340.2" width="992.5" height="7.6" fill="#bbbbbb"/><rect x="36.6" y="340.2" width="992.5" height="0.8" fill="#a5a5a5"/><rect x="36.6" y="340.2" width="0.8" height="7.6" fill="#a5a5a5"/><rect x="1028.5" y="340.2" width="0.8" height="7.6" fill="#a5a5a5"/>
<path d="M25.3 344.5c0 1.8-2.6 1.8-2.4 0.2M25.3 344.5L24.6 332c0-1.5 1.8-1.8 1.8 0c0 2.2-4.3 4-4.3 6.8c0 2.2 2 3 3.2 2.6c1.6-0.6 1.6-3-0.2-3.2c-1.4-0.1-1.9 1.2-1.3 2" fill="none" stroke="#111" stroke-width="1.05"/>
<path d="M29.5 344h3l-1.5 1.8z" fill="#111"/>
<path d="M1043 333.5v8" stroke="#111" stroke-width="1"/><ellipse cx="1040.8" cy="341.5" rx="2.5" ry="1.8" fill="#111"/><path d="M1046.5 344h3l-1.5 1.8z" fill="#111"/>
<rect x="36.6" y="347.8" width="1004.9" height="244.95000000000002" fill="#fbfbfb"/>
<rect x="12" y="347.8" width="24.6" height="244.95000000000002" fill="#bdbdbd"/>
<rect x="36.6" y="347.8" width="1004.9" height="10.65" fill="#eaeaea"/>
<rect x="12.5" y="348.3" width="23.6" height="9.65" fill="#d6d6d6"/><rect x="12.5" y="348.3" width="23.6" height="0.7" fill="#e6e6e6"/>
<text x="24.5" y="355.6" font-size="7" fill="#7a7a7a" text-anchor="middle">A#</text>
<rect x="12.5" y="358.95" width="23.6" height="9.65" fill="#d6d6d6"/><rect x="12.5" y="358.95" width="23.6" height="0.7" fill="#e6e6e6"/>
<text x="24.5" y="366.25" font-size="7" fill="#7a7a7a" text-anchor="middle">A</text>
<rect x="36.6" y="369.1" width="1004.9" height="10.65" fill="#eaeaea"/>
<rect x="12.5" y="369.6" width="23.6" height="9.65" fill="#d6d6d6"/><rect x="12.5" y="369.6" width="23.6" height="0.7" fill="#e6e6e6"/>
<text x="24.5" y="376.90000000000003" font-size="7" fill="#7a7a7a" text-anchor="middle">G#</text>
<rect x="12.5" y="380.25" width="23.6" height="9.65" fill="#d6d6d6"/><rect x="12.5" y="380.25" width="23.6" height="0.7" fill="#e6e6e6"/>
<text x="24.5" y="387.55" font-size="7" fill="#7a7a7a" text-anchor="middle">G 3</text>
<rect x="36.6" y="390.40000000000003" width="1004.9" height="10.65" fill="#eaeaea"/>
<rect x="12.5" y="390.90000000000003" width="23.6" height="9.65" fill="#d6d6d6"/><rect x="12.5" y="390.90000000000003" width="23.6" height="0.7" fill="#e6e6e6"/>
<text x="24.5" y="398.20000000000005" font-size="7" fill="#7a7a7a" text-anchor="middle">F#</text>
<rect x="12.5" y="401.55" width="23.6" height="9.65" fill="#d6d6d6"/><rect x="12.5" y="401.55" width="23.6" height="0.7" fill="#e6e6e6"/>
<text x="24.5" y="408.85" font-size="7" fill="#7a7a7a" text-anchor="middle">F</text>
<rect x="12.5" y="412.20000000000005" width="23.6" height="9.65" fill="#d6d6d6"/><rect x="12.5" y="412.20000000000005" width="23.6" height="0.7" fill="#e6e6e6"/>
<text x="24.5" y="419.50000000000006" font-size="7" fill="#7a7a7a" text-anchor="middle">E</text>
<rect x="36.6" y="422.35" width="1004.9" height="10.65" fill="#eaeaea"/>
<rect x="12.5" y="422.85" width="23.6" height="9.65" fill="#d6d6d6"/><rect x="12.5" y="422.85" width="23.6" height="0.7" fill="#e6e6e6"/>
<text x="24.5" y="430.15000000000003" font-size="7" fill="#7a7a7a" text-anchor="middle">D#</text>
<rect x="12.5" y="433.5" width="23.6" height="9.65" fill="#d6d6d6"/><rect x="12.5" y="433.5" width="23.6" height="0.7" fill="#e6e6e6"/>
<text x="24.5" y="440.8" font-size="7" fill="#7a7a7a" text-anchor="middle">D</text>
<rect x="36.6" y="443.65000000000003" width="1004.9" height="10.65" fill="#eaeaea"/>
<rect x="12.5" y="444.15000000000003" width="23.6" height="9.65" fill="#d6d6d6"/><rect x="12.5" y="444.15000000000003" width="23.6" height="0.7" fill="#e6e6e6"/>
<text x="24.5" y="451.45000000000005" font-size="7" fill="#7a7a7a" text-anchor="middle">C#</text>
<rect x="12.5" y="454.8" width="23.6" height="9.65" fill="#d6d6d6"/><rect x="12.5" y="454.8" width="23.6" height="0.7" fill="#e6e6e6"/>
<text x="24.5" y="462.1" font-size="7" fill="#7a7a7a" text-anchor="middle">C</text>
<rect x="12.5" y="465.45000000000005" width="23.6" height="9.65" fill="#d6d6d6"/><rect x="12.5" y="465.45000000000005" width="23.6" height="0.7" fill="#e6e6e6"/>
<text x="24.5" y="472.75000000000006" font-size="7" fill="#7a7a7a" text-anchor="middle">H</text>
<rect x="36.6" y="475.6" width="1004.9" height="10.65" fill="#eaeaea"/>
<rect x="12.5" y="476.1" width="23.6" height="9.65" fill="#d6d6d6"/><rect x="12.5" y="476.1" width="23.6" height="0.7" fill="#e6e6e6"/>
<text x="24.5" y="483.40000000000003" font-size="7" fill="#7a7a7a" text-anchor="middle">A#</text>
<rect x="12.5" y="486.75" width="23.6" height="9.65" fill="#d6d6d6"/><rect x="12.5" y="486.75" width="23.6" height="0.7" fill="#e6e6e6"/>
<text x="24.5" y="494.05" font-size="7" fill="#7a7a7a" text-anchor="middle">A</text>
<rect x="36.6" y="496.9" width="1004.9" height="10.65" fill="#eaeaea"/>
<rect x="12.5" y="497.4" width="23.6" height="9.65" fill="#d6d6d6"/><rect x="12.5" y="497.4" width="23.6" height="0.7" fill="#e6e6e6"/>
<text x="24.5" y="504.7" font-size="7" fill="#7a7a7a" text-anchor="middle">G#</text>
<rect x="12.5" y="508.05" width="23.6" height="9.65" fill="#d6d6d6"/><rect x="12.5" y="508.05" width="23.6" height="0.7" fill="#e6e6e6"/>
<text x="24.5" y="515.35" font-size="7" fill="#7a7a7a" text-anchor="middle">G 2</text>
<rect x="36.6" y="518.2" width="1004.9" height="10.65" fill="#eaeaea"/>
<rect x="12.5" y="518.7" width="23.6" height="9.65" fill="#d6d6d6"/><rect x="12.5" y="518.7" width="23.6" height="0.7" fill="#e6e6e6"/>
<text x="24.5" y="526.0" font-size="7" fill="#7a7a7a" text-anchor="middle">F#</text>
<rect x="12.5" y="529.35" width="23.6" height="9.65" fill="#d6d6d6"/><rect x="12.5" y="529.35" width="23.6" height="0.7" fill="#e6e6e6"/>
<text x="24.5" y="536.65" font-size="7" fill="#7a7a7a" text-anchor="middle">F</text>
<rect x="12.5" y="540.0" width="23.6" height="9.65" fill="#d6d6d6"/><rect x="12.5" y="540.0" width="23.6" height="0.7" fill="#e6e6e6"/>
<text x="24.5" y="547.3" font-size="7" fill="#7a7a7a" text-anchor="middle">E</text>
<rect x="36.6" y="550.15" width="1004.9" height="10.65" fill="#eaeaea"/>
<rect x="12.5" y="550.65" width="23.6" height="9.65" fill="#d6d6d6"/><rect x="12.5" y="550.65" width="23.6" height="0.7" fill="#e6e6e6"/>
<text x="24.5" y="557.9499999999999" font-size="7" fill="#7a7a7a" text-anchor="middle">D#</text>
<rect x="12.5" y="561.3" width="23.6" height="9.65" fill="#d6d6d6"/><rect x="12.5" y="561.3" width="23.6" height="0.7" fill="#e6e6e6"/>
<text x="24.5" y="568.5999999999999" font-size="7" fill="#7a7a7a" text-anchor="middle">D</text>
<rect x="36.6" y="571.45" width="1004.9" height="10.65" fill="#eaeaea"/>
<rect x="12.5" y="571.95" width="23.6" height="9.65" fill="#d6d6d6"/><rect x="12.5" y="571.95" width="23.6" height="0.7" fill="#e6e6e6"/>
<text x="24.5" y="579.25" font-size="7" fill="#7a7a7a" text-anchor="middle">C#</text>
<rect x="12.5" y="582.6" width="23.6" height="9.65" fill="#d6d6d6"/><rect x="12.5" y="582.6" width="23.6" height="0.7" fill="#e6e6e6"/>
<text x="24.5" y="589.9" font-size="7" fill="#7a7a7a" text-anchor="middle">C</text>
<rect x="36.6" y="358.15" width="1004.9" height="0.6" fill="#ececec"/>
<rect x="36.6" y="368.8" width="1004.9" height="0.6" fill="#ececec"/>
<rect x="36.6" y="379.45" width="1004.9" height="0.6" fill="#ececec"/>
<rect x="36.6" y="390.1" width="1004.9" height="0.6" fill="#ececec"/>
<rect x="36.6" y="400.75" width="1004.9" height="0.6" fill="#ececec"/>
<rect x="36.6" y="411.40000000000003" width="1004.9" height="0.6" fill="#ececec"/>
<rect x="36.6" y="422.05" width="1004.9" height="0.6" fill="#ececec"/>
<rect x="36.6" y="432.7" width="1004.9" height="0.6" fill="#ececec"/>
<rect x="36.6" y="443.35" width="1004.9" height="0.6" fill="#ececec"/>
<rect x="36.6" y="454.0" width="1004.9" height="0.6" fill="#ececec"/>
<rect x="36.6" y="464.65000000000003" width="1004.9" height="0.6" fill="#ececec"/>
<rect x="36.6" y="475.3" width="1004.9" height="0.6" fill="#ececec"/>
<rect x="36.6" y="485.95" width="1004.9" height="0.6" fill="#ececec"/>
<rect x="36.6" y="496.59999999999997" width="1004.9" height="0.6" fill="#ececec"/>
<rect x="36.6" y="507.25" width="1004.9" height="0.6" fill="#ececec"/>
<rect x="36.6" y="517.9000000000001" width="1004.9" height="0.6" fill="#ececec"/>
<rect x="36.6" y="528.5500000000001" width="1004.9" height="0.6" fill="#ececec"/>
<rect x="36.6" y="539.2" width="1004.9" height="0.6" fill="#ececec"/>
<rect x="36.6" y="549.85" width="1004.9" height="0.6" fill="#ececec"/>
<rect x="36.6" y="560.5" width="1004.9" height="0.6" fill="#ececec"/>
<rect x="36.6" y="571.1500000000001" width="1004.9" height="0.6" fill="#ececec"/>
<rect x="36.6" y="581.8000000000001" width="1004.9" height="0.6" fill="#ececec"/>
<rect x="36.11250000000003" y="347.8" width="1" height="244.95000000000002" fill="#e2e2e2" opacity="0.7"/>
<rect x="36.212500000000034" y="343" width="0.8" height="2" fill="#999"/>
<rect x="53.32500000000003" y="347.8" width="1" height="244.95000000000002" fill="#e2e2e2" opacity="0.7"/>
<rect x="53.42500000000003" y="343" width="0.8" height="2" fill="#999"/>
<rect x="44.81875000000003" y="347.8" width="0.8" height="244.95000000000002" fill="#e6e6e6" opacity="0.45"/>
<rect x="70.53750000000002" y="347.8" width="1" height="244.95000000000002" fill="#e2e2e2" opacity="0.7"/>
<rect x="70.63750000000002" y="343" width="0.8" height="2" fill="#999"/>
<rect x="62.031250000000036" y="347.8" width="0.8" height="244.95000000000002" fill="#e6e6e6" opacity="0.45"/>
<rect x="104.9625" y="347.8" width="1" height="244.95000000000002" fill="#e2e2e2" opacity="0.7"/>
<rect x="105.0625" y="343" width="0.8" height="2" fill="#999"/>
<rect x="96.45625" y="347.8" width="0.8" height="244.95000000000002" fill="#e6e6e6" opacity="0.45"/>
<rect x="122.175" y="347.8" width="1" height="244.95000000000002" fill="#e2e2e2" opacity="0.7"/>
<rect x="122.27499999999999" y="343" width="0.8" height="2" fill="#999"/>
<rect x="113.66874999999999" y="347.8" width="0.8" height="244.95000000000002" fill="#e6e6e6" opacity="0.45"/>
<rect x="139.3875" y="347.8" width="1" height="244.95000000000002" fill="#e2e2e2" opacity="0.7"/>
<rect x="139.48749999999998" y="343" width="0.8" height="2" fill="#999"/>
<rect x="130.88125" y="347.8" width="0.8" height="244.95000000000002" fill="#e6e6e6" opacity="0.45"/>
<rect x="87.75" y="332" width="1" height="260.95000000000005" fill="#9a9a9a"/>
<text x="89.25" y="338.8" font-size="8.5" fill="#222" textLength="10" lengthAdjust="spacingAndGlyphs">78</text>
<rect x="173.81250000000003" y="347.8" width="1" height="244.95000000000002" fill="#e2e2e2" opacity="0.7"/>
<rect x="173.91250000000002" y="343" width="0.8" height="2" fill="#999"/>
<rect x="165.30625" y="347.8" width="0.8" height="244.95000000000002" fill="#e6e6e6" opacity="0.45"/>
<rect x="191.02500000000003" y="347.8" width="1" height="244.95000000000002" fill="#e2e2e2" opacity="0.7"/>
<rect x="191.12500000000003" y="343" width="0.8" height="2" fill="#999"/>
<rect x="182.51875" y="347.8" width="0.8" height="244.95000000000002" fill="#e6e6e6" opacity="0.45"/>
<rect x="208.2375" y="347.8" width="1" height="244.95000000000002" fill="#e2e2e2" opacity="0.7"/>
<rect x="208.3375" y="343" width="0.8" height="2" fill="#999"/>
<rect x="199.73125000000002" y="347.8" width="0.8" height="244.95000000000002" fill="#e6e6e6" opacity="0.45"/>
<rect x="156.60000000000002" y="332" width="1" height="260.95000000000005" fill="#9a9a9a"/>
<text x="158.10000000000002" y="338.8" font-size="8.5" fill="#222" textLength="10" lengthAdjust="spacingAndGlyphs">79</text>
<rect x="242.66250000000002" y="347.8" width="1" height="244.95000000000002" fill="#e2e2e2" opacity="0.7"/>
<rect x="242.76250000000002" y="343" width="0.8" height="2" fill="#999"/>
<rect x="234.15625" y="347.8" width="0.8" height="244.95000000000002" fill="#e6e6e6" opacity="0.45"/>
<rect x="259.875" y="347.8" width="1" height="244.95000000000002" fill="#e2e2e2" opacity="0.7"/>
<rect x="259.975" y="343" width="0.8" height="2" fill="#999"/>
<rect x="251.36875" y="347.8" width="0.8" height="244.95000000000002" fill="#e6e6e6" opacity="0.45"/>
<rect x="277.08750000000003" y="347.8" width="1" height="244.95000000000002" fill="#e2e2e2" opacity="0.7"/>
<rect x="277.18750000000006" y="343" width="0.8" height="2" fill="#999"/>
<rect x="268.58125000000007" y="347.8" width="0.8" height="244.95000000000002" fill="#e6e6e6" opacity="0.45"/>
<rect x="225.45000000000002" y="332" width="1" height="260.95000000000005" fill="#9a9a9a"/>
<text x="226.95000000000002" y="338.8" font-size="8.5" fill="#222" textLength="10" lengthAdjust="spacingAndGlyphs">80</text>
<rect x="311.5125" y="347.8" width="1" height="244.95000000000002" fill="#e2e2e2" opacity="0.7"/>
<rect x="311.6125" y="343" width="0.8" height="2" fill="#999"/>
<rect x="303.00625" y="347.8" width="0.8" height="244.95000000000002" fill="#e6e6e6" opacity="0.45"/>
<rect x="328.725" y="347.8" width="1" height="244.95000000000002" fill="#e2e2e2" opacity="0.7"/>
<rect x="328.82500000000005" y="343" width="0.8" height="2" fill="#999"/>
<rect x="320.21875000000006" y="347.8" width="0.8" height="244.95000000000002" fill="#e6e6e6" opacity="0.45"/>
<rect x="345.9375" y="347.8" width="1" height="244.95000000000002" fill="#e2e2e2" opacity="0.7"/>
<rect x="346.0375" y="343" width="0.8" height="2" fill="#999"/>
<rect x="337.43125000000003" y="347.8" width="0.8" height="244.95000000000002" fill="#e6e6e6" opacity="0.45"/>
<rect x="294.3" y="332" width="1" height="260.95000000000005" fill="#9a9a9a"/>
<text x="295.8" y="338.8" font-size="8.5" fill="#222" textLength="10" lengthAdjust="spacingAndGlyphs">81</text>
<rect x="380.36249999999995" y="347.8" width="1" height="244.95000000000002" fill="#e2e2e2" opacity="0.7"/>
<rect x="380.4625" y="343" width="0.8" height="2" fill="#999"/>
<rect x="371.85625" y="347.8" width="0.8" height="244.95000000000002" fill="#e6e6e6" opacity="0.45"/>
<rect x="397.575" y="347.8" width="1" height="244.95000000000002" fill="#e2e2e2" opacity="0.7"/>
<rect x="397.675" y="343" width="0.8" height="2" fill="#999"/>
<rect x="389.06875" y="347.8" width="0.8" height="244.95000000000002" fill="#e6e6e6" opacity="0.45"/>
<rect x="414.78749999999997" y="347.8" width="1" height="244.95000000000002" fill="#e2e2e2" opacity="0.7"/>
<rect x="414.8875" y="343" width="0.8" height="2" fill="#999"/>
<rect x="406.28125" y="347.8" width="0.8" height="244.95000000000002" fill="#e6e6e6" opacity="0.45"/>
<rect x="363.15" y="332" width="1" height="260.95000000000005" fill="#9a9a9a"/>
<text x="364.65" y="338.8" font-size="8.5" fill="#222" textLength="10" lengthAdjust="spacingAndGlyphs">82</text>
<rect x="449.2125" y="347.8" width="1" height="244.95000000000002" fill="#e2e2e2" opacity="0.7"/>
<rect x="449.3125" y="343" width="0.8" height="2" fill="#999"/>
<rect x="440.70625" y="347.8" width="0.8" height="244.95000000000002" fill="#e6e6e6" opacity="0.45"/>
<rect x="466.425" y="347.8" width="1" height="244.95000000000002" fill="#e2e2e2" opacity="0.7"/>
<rect x="466.52500000000003" y="343" width="0.8" height="2" fill="#999"/>
<rect x="457.91875000000005" y="347.8" width="0.8" height="244.95000000000002" fill="#e6e6e6" opacity="0.45"/>
<rect x="483.6375" y="347.8" width="1" height="244.95000000000002" fill="#e2e2e2" opacity="0.7"/>
<rect x="483.7375" y="343" width="0.8" height="2" fill="#999"/>
<rect x="475.13125" y="347.8" width="0.8" height="244.95000000000002" fill="#e6e6e6" opacity="0.45"/>
<rect x="432.0" y="332" width="1" height="260.95000000000005" fill="#9a9a9a"/>
<text x="433.5" y="338.8" font-size="8.5" fill="#222" textLength="10" lengthAdjust="spacingAndGlyphs">83</text>
<rect x="518.0625" y="347.8" width="1" height="244.95000000000002" fill="#e2e2e2" opacity="0.7"/>
<rect x="518.1625" y="343" width="0.8" height="2" fill="#999"/>
<rect x="509.55625000000003" y="347.8" width="0.8" height="244.95000000000002" fill="#e6e6e6" opacity="0.45"/>
<rect x="535.275" y="347.8" width="1" height="244.95000000000002" fill="#e2e2e2" opacity="0.7"/>
<rect x="535.375" y="343" width="0.8" height="2" fill="#999"/>
<rect x="526.7687500000001" y="347.8" width="0.8" height="244.95000000000002" fill="#e6e6e6" opacity="0.45"/>
<rect x="552.4875000000001" y="347.8" width="1" height="244.95000000000002" fill="#e2e2e2" opacity="0.7"/>
<rect x="552.5875000000001" y="343" width="0.8" height="2" fill="#999"/>
<rect x="543.98125" y="347.8" width="0.8" height="244.95000000000002" fill="#e6e6e6" opacity="0.45"/>
<rect x="500.85" y="332" width="1" height="260.95000000000005" fill="#9a9a9a"/>
<text x="502.35" y="338.8" font-size="8.5" fill="#222" textLength="10" lengthAdjust="spacingAndGlyphs">84</text>
<rect x="586.9125" y="347.8" width="1" height="244.95000000000002" fill="#e2e2e2" opacity="0.7"/>
<rect x="587.0125" y="343" width="0.8" height="2" fill="#999"/>
<rect x="578.4062500000001" y="347.8" width="0.8" height="244.95000000000002" fill="#e6e6e6" opacity="0.45"/>
<rect x="604.125" y="347.8" width="1" height="244.95000000000002" fill="#e2e2e2" opacity="0.7"/>
<rect x="604.225" y="343" width="0.8" height="2" fill="#999"/>
<rect x="595.6187500000001" y="347.8" width="0.8" height="244.95000000000002" fill="#e6e6e6" opacity="0.45"/>
<rect x="621.3375000000001" y="347.8" width="1" height="244.95000000000002" fill="#e2e2e2" opacity="0.7"/>
<rect x="621.4375000000001" y="343" width="0.8" height="2" fill="#999"/>
<rect x="612.8312500000001" y="347.8" width="0.8" height="244.95000000000002" fill="#e6e6e6" opacity="0.45"/>
<rect x="569.7" y="332" width="1" height="260.95000000000005" fill="#555"/>
<text x="571.2" y="338.8" font-size="8.5" fill="#222" textLength="10" lengthAdjust="spacingAndGlyphs">85</text>
<rect x="655.7624999999999" y="347.8" width="1" height="244.95000000000002" fill="#e2e2e2" opacity="0.7"/>
<rect x="655.8625" y="343" width="0.8" height="2" fill="#999"/>
<rect x="647.25625" y="347.8" width="0.8" height="244.95000000000002" fill="#e6e6e6" opacity="0.45"/>
<rect x="672.9749999999999" y="347.8" width="1" height="244.95000000000002" fill="#e2e2e2" opacity="0.7"/>
<rect x="673.0749999999999" y="343" width="0.8" height="2" fill="#999"/>
<rect x="664.46875" y="347.8" width="0.8" height="244.95000000000002" fill="#e6e6e6" opacity="0.45"/>
<rect x="690.1875" y="347.8" width="1" height="244.95000000000002" fill="#e2e2e2" opacity="0.7"/>
<rect x="690.2875" y="343" width="0.8" height="2" fill="#999"/>
<rect x="681.68125" y="347.8" width="0.8" height="244.95000000000002" fill="#e6e6e6" opacity="0.45"/>
<rect x="638.55" y="332" width="1" height="260.95000000000005" fill="#9a9a9a"/>
<text x="640.05" y="338.8" font-size="8.5" fill="#222" textLength="10" lengthAdjust="spacingAndGlyphs">86</text>
<rect x="724.6125" y="347.8" width="1" height="244.95000000000002" fill="#e2e2e2" opacity="0.7"/>
<rect x="724.7125" y="343" width="0.8" height="2" fill="#999"/>
<rect x="716.10625" y="347.8" width="0.8" height="244.95000000000002" fill="#e6e6e6" opacity="0.45"/>
<rect x="741.8249999999999" y="347.8" width="1" height="244.95000000000002" fill="#e2e2e2" opacity="0.7"/>
<rect x="741.925" y="343" width="0.8" height="2" fill="#999"/>
<rect x="733.31875" y="347.8" width="0.8" height="244.95000000000002" fill="#e6e6e6" opacity="0.45"/>
<rect x="759.0375" y="347.8" width="1" height="244.95000000000002" fill="#e2e2e2" opacity="0.7"/>
<rect x="759.1375" y="343" width="0.8" height="2" fill="#999"/>
<rect x="750.53125" y="347.8" width="0.8" height="244.95000000000002" fill="#e6e6e6" opacity="0.45"/>
<rect x="707.4" y="332" width="1" height="260.95000000000005" fill="#9a9a9a"/>
<text x="708.9" y="338.8" font-size="8.5" fill="#222" textLength="10" lengthAdjust="spacingAndGlyphs">87</text>
<rect x="793.4625" y="347.8" width="1" height="244.95000000000002" fill="#e2e2e2" opacity="0.7"/>
<rect x="793.5625" y="343" width="0.8" height="2" fill="#999"/>
<rect x="784.9562500000001" y="347.8" width="0.8" height="244.95000000000002" fill="#e6e6e6" opacity="0.45"/>
<rect x="810.675" y="347.8" width="1" height="244.95000000000002" fill="#e2e2e2" opacity="0.7"/>
<rect x="810.775" y="343" width="0.8" height="2" fill="#999"/>
<rect x="802.16875" y="347.8" width="0.8" height="244.95000000000002" fill="#e6e6e6" opacity="0.45"/>
<rect x="827.8875" y="347.8" width="1" height="244.95000000000002" fill="#e2e2e2" opacity="0.7"/>
<rect x="827.9875000000001" y="343" width="0.8" height="2" fill="#999"/>
<rect x="819.38125" y="347.8" width="0.8" height="244.95000000000002" fill="#e6e6e6" opacity="0.45"/>
<rect x="776.25" y="332" width="1" height="260.95000000000005" fill="#9a9a9a"/>
<text x="777.75" y="338.8" font-size="8.5" fill="#222" textLength="10" lengthAdjust="spacingAndGlyphs">88</text>
<rect x="862.3124999999999" y="347.8" width="1" height="244.95000000000002" fill="#e2e2e2" opacity="0.7"/>
<rect x="862.4124999999999" y="343" width="0.8" height="2" fill="#999"/>
<rect x="853.80625" y="347.8" width="0.8" height="244.95000000000002" fill="#e6e6e6" opacity="0.45"/>
<rect x="879.5249999999999" y="347.8" width="1" height="244.95000000000002" fill="#e2e2e2" opacity="0.7"/>
<rect x="879.6249999999999" y="343" width="0.8" height="2" fill="#999"/>
<rect x="871.01875" y="347.8" width="0.8" height="244.95000000000002" fill="#e6e6e6" opacity="0.45"/>
<rect x="896.7375" y="347.8" width="1" height="244.95000000000002" fill="#e2e2e2" opacity="0.7"/>
<rect x="896.8375" y="343" width="0.8" height="2" fill="#999"/>
<rect x="888.2312499999999" y="347.8" width="0.8" height="244.95000000000002" fill="#e6e6e6" opacity="0.45"/>
<rect x="845.0999999999999" y="332" width="1" height="260.95000000000005" fill="#9a9a9a"/>
<text x="846.5999999999999" y="338.8" font-size="8.5" fill="#222" textLength="10" lengthAdjust="spacingAndGlyphs">89</text>
<rect x="931.1624999999999" y="347.8" width="1" height="244.95000000000002" fill="#e2e2e2" opacity="0.7"/>
<rect x="931.2624999999999" y="343" width="0.8" height="2" fill="#999"/>
<rect x="922.65625" y="347.8" width="0.8" height="244.95000000000002" fill="#e6e6e6" opacity="0.45"/>
<rect x="948.3749999999999" y="347.8" width="1" height="244.95000000000002" fill="#e2e2e2" opacity="0.7"/>
<rect x="948.4749999999999" y="343" width="0.8" height="2" fill="#999"/>
<rect x="939.86875" y="347.8" width="0.8" height="244.95000000000002" fill="#e6e6e6" opacity="0.45"/>
<rect x="965.5875" y="347.8" width="1" height="244.95000000000002" fill="#e2e2e2" opacity="0.7"/>
<rect x="965.6875" y="343" width="0.8" height="2" fill="#999"/>
<rect x="957.08125" y="347.8" width="0.8" height="244.95000000000002" fill="#e6e6e6" opacity="0.45"/>
<rect x="913.9499999999999" y="332" width="1" height="260.95000000000005" fill="#9a9a9a"/>
<text x="915.4499999999999" y="338.8" font-size="8.5" fill="#222" textLength="10" lengthAdjust="spacingAndGlyphs">90</text>
<rect x="1000.0124999999999" y="347.8" width="1" height="244.95000000000002" fill="#e2e2e2" opacity="0.7"/>
<rect x="1000.1125" y="343" width="0.8" height="2" fill="#999"/>
<rect x="991.50625" y="347.8" width="0.8" height="244.95000000000002" fill="#e6e6e6" opacity="0.45"/>
<rect x="1017.2249999999999" y="347.8" width="1" height="244.95000000000002" fill="#e2e2e2" opacity="0.7"/>
<rect x="1017.3249999999999" y="343" width="0.8" height="2" fill="#999"/>
<rect x="1008.71875" y="347.8" width="0.8" height="244.95000000000002" fill="#e6e6e6" opacity="0.45"/>
<rect x="1034.4375" y="347.8" width="1" height="244.95000000000002" fill="#e2e2e2" opacity="0.7"/>
<rect x="1025.9312499999999" y="347.8" width="0.8" height="244.95000000000002" fill="#e6e6e6" opacity="0.45"/>
<rect x="982.8" y="332" width="1" height="260.95000000000005" fill="#9a9a9a"/>
<text x="984.3" y="338.8" font-size="8.5" fill="#222" textLength="10" lengthAdjust="spacingAndGlyphs">91</text>
<rect x="1041.5" y="347.8" width="12" height="244.95000000000002" fill="#c3c3c3"/>
<rect x="1041.5" y="347.8" width="0.8" height="244.95000000000002" fill="#a8a8a8"/>
<rect x="1045" y="447" width="5.5" height="55.5" rx="2.5" fill="#7a7a7a"/>
<rect x="1046" y="429" width="3.5" height="0.8" fill="#999"/><rect x="1046" y="431" width="3.5" height="0.8" fill="#999"/><rect x="1046.5" y="436" width="2.5" height="2.5" rx="1" fill="#999"/>
<circle cx="1047.8" cy="568.8" r="1.7" fill="#111"/><rect x="1047.5" y="572" width="0.7" height="15" fill="#999"/>
<rect x="12" y="592.8" width="1042" height="10.7" fill="#b9b9b9"/>
<rect x="12" y="592.8" width="1042" height="0.8" fill="#9d9d9d"/>
<text x="15" y="601" font-size="7.5" fill="#222" font-weight="bold">#</text>
<path d="M98 598H128M139 598H162M264 598H332M457 598H487M495 598H517M619 598H688" stroke="#8c8c8c" stroke-width="4" stroke-linecap="round" stroke-dasharray="5 1 3 1"/>
<path d="M812 598H962" stroke="#707070" stroke-width="4.2" stroke-linecap="round"/>
<path d="M958 598H968" stroke="#9a9a9a" stroke-width="5.5" stroke-linecap="round"/>
<circle cx="1037.5" cy="598" r="3" fill="#222"/><path d="M1035 598h5M1037.5 595.5v5" stroke="#ddd" stroke-width="0.8"/>
<rect x="1053.5" y="290" width="2" height="313" fill="#404040"/>
<rect x="12" y="603.5" width="1043" height="5" fill="#2a2a2a"/>
<defs><linearGradient id="bg" x1="0" y1="0" x2="0" y2="1"><stop offset="0" stop-color="#b81838"/><stop offset="0.1" stop-color="#d63442"/><stop offset="0.22" stop-color="#f08048"/><stop offset="0.34" stop-color="#f8c862"/><stop offset="0.5" stop-color="#fff6d4"/><stop offset="0.66" stop-color="#f8c862"/><stop offset="0.78" stop-color="#f08048"/><stop offset="0.9" stop-color="#d63442"/><stop offset="1" stop-color="#b81838"/></linearGradient><clipPath id="gc"><rect x="36.6" y="347.8" width="1004.9" height="245"/></clipPath></defs>
<g clip-path="url(#gc)">
<path d="M126 461L126.5 590" stroke="#cf5a3c" stroke-width="1.1"/>
<path d="M134 447L134.5 462" stroke="#cf5a3c" stroke-width="1.1"/>
<path d="M161.5 494L162 520" stroke="#cf5a3c" stroke-width="1.1"/>
<path d="M225 476L232 439" stroke="#cf5a3c" stroke-width="1.1"/>
<path d="M253 458L257 480" stroke="#cf5a3c" stroke-width="1.1"/>
<path d="M285 470L287 497" stroke="#cf5a3c" stroke-width="1.1"/>
<path d="M402 462L402 480" stroke="#cf5a3c" stroke-width="1.1"/>
<path d="M519 444L522 465" stroke="#cf5a3c" stroke-width="1.1"/>
<path d="M560 438L566 466" stroke="#cf5a3c" stroke-width="1.1"/>
<path d="M650 400L655 430" stroke="#cf5a3c" stroke-width="1.1"/>
<path d="M688 384L690 404" stroke="#cf5a3c" stroke-width="1.1"/>
<path d="M667 462L669 504" stroke="#cf5a3c" stroke-width="1.1"/>
<path d="M672 458L669 504" stroke="#cf5a3c" stroke-width="1.1"/>
<path d="M745 442L743 488" stroke="#cf5a3c" stroke-width="1.1"/>
<path d="M778 405L786 366" stroke="#cf5a3c" stroke-width="1.1"/>
<path d="M830 368L832 348" stroke="#cf5a3c" stroke-width="1.1"/>
<path d="M892.2 348L892.2 400" stroke="#cf5a3c" stroke-width="1.1"/>
<path d="M912 348L913.5 372" stroke="#cf5a3c" stroke-width="1.1"/>
<path d="M961.7 348L961.7 426" stroke="#cf5a3c" stroke-width="1.1"/>
<path d="M958 396L961 426" stroke="#cf5a3c" stroke-width="1.1"/>
<path d="M984 348L988 390" stroke="#cf5a3c" stroke-width="1.1"/>
<path d="M988 390L1000 405" stroke="#cf5a3c" stroke-width="1.1"/>
<path d="M1020 348L1017 410" stroke="#cf5a3c" stroke-width="1.1"/>
<path d="M861 348L861 355" stroke="#cf5a3c" stroke-width="1.1"/>
<path d="M1029 348L1029 352" stroke="#cf5a3c" stroke-width="1.1"/>
<path d="M881.5 348L881.5 350" stroke="#cf5a3c" stroke-width="1.1"/>
<path d="M93 484L97 500" stroke="#cf5a3c" stroke-width="1.1"/>
<path d="M200 455L203 468" stroke="#cf5a3c" stroke-width="1.1"/>
<path d="M305 488L310 499" stroke="#cf5a3c" stroke-width="1.1"/>
<path d="M342 457L345 470" stroke="#cf5a3c" stroke-width="1.1"/>
<path d="M409 455L412 466" stroke="#cf5a3c" stroke-width="1.1"/>
<path d="M476 456L479 468" stroke="#cf5a3c" stroke-width="1.1"/>
<path d="M536 411L540 424" stroke="#cf5a3c" stroke-width="1.1"/>
<path d="M697 397L701 408" stroke="#cf5a3c" stroke-width="1.1"/>
<path d="M798 379L802 388" stroke="#cf5a3c" stroke-width="1.1"/>
<path d="M717 381L721 391" stroke="#cf5a3c" stroke-width="1.1"/>
<path d="M990 382L994 392" stroke="#cf5a3c" stroke-width="1.1"/>
<path d="M37.0 497.7L37.0 495.1 38.0 495.3 39.0 495.0 40.1 494.6 41.1 494.4 42.1 494.4 43.1 494.7 44.1 494.6 45.1 495.1 46.2 495.2 47.2 495.5 48.2 495.0 49.2 493.7 50.2 492.9 51.3 492.1 52.3 492.3 53.3 492.1 54.3 491.4 55.3 491.6 56.4 491.1 57.4 491.2 58.4 491.5 59.4 491.3 60.4 491.6 61.4 491.8 62.5 492.2 63.5 492.9 64.5 493.5L64.5 497.7L64.5 501.7 63.5 502.6 62.5 503.3 61.4 503.6 60.4 504.1 59.4 504.0 58.4 504.2 57.4 504.1 56.4 504.2 55.3 503.9 54.3 503.4 53.3 503.1 52.3 503.1 51.3 503.1 50.2 502.6 49.2 501.2 48.2 500.5 47.2 499.9 46.2 500.2 45.1 500.7 44.1 500.3 43.1 500.9 42.1 500.4 41.1 500.6 40.1 500.5 39.0 500.3 38.0 500.0 37.0 500.0Z" fill="url(#bg)" stroke="#ac1838" stroke-width="1.1" stroke-linejoin="round"/>
<path d="M38.5 497.7L39.7 497.6L40.9 497.9L42.1 497.4L43.3 496.6L44.5 497.0L45.7 498.4L46.9 499.1L48.1 498.4L49.3 496.7L50.5 496.0L51.7 497.2L52.9 498.0L54.1 497.3L55.3 497.4L56.5 499.3L57.7 500.4L58.9 498.2L60.1 495.0L61.3 494.7L62.5 497.5L63.7 499.2" fill="none" stroke="#9c3434" stroke-width="0.85" opacity="0.9"/>
<path d="M62.9 453.7L62.9 446.8 63.9 445.5 65.0 444.1 66.0 444.3 67.1 444.4 68.2 444.9 69.2 444.8 70.2 444.9 71.3 445.3 72.3 445.2 73.4 445.8 74.5 446.3 75.5 448.4L75.5 453.7L75.5 458.4 74.5 460.8 73.4 461.4 72.3 462.0 71.3 462.7 70.2 462.8 69.2 462.4 68.2 462.8 67.1 463.3 66.0 463.2 65.0 463.3 63.9 462.2 62.9 460.9Z" fill="url(#bg)" stroke="#ac1838" stroke-width="1.1" stroke-linejoin="round"/>
<path d="M64.4 453.7L65.6 455.9L66.8 457.1L68.0 454.3L69.2 450.5L70.4 450.3L71.6 453.5L72.8 455.7L74.0 454.9" fill="none" stroke="#9c3434" stroke-width="0.85" opacity="0.9"/>
<path d="M73.0 459.3L73.0 453.0 74.0 453.1 75.1 452.5 76.1 452.4 77.2 452.5 78.2 452.3 79.2 452.6 80.3 453.4 81.3 453.0 82.4 453.2 83.4 453.9 84.4 454.3 85.5 455.1 86.5 455.9 87.6 457.3 88.6 458.4L88.6 459.3L88.6 460.0 87.6 461.4 86.5 463.1 85.5 463.4 84.4 463.9 83.4 464.6 82.4 465.2 81.3 465.2 80.3 465.3 79.2 466.2 78.2 466.1 77.2 466.6 76.1 466.5 75.1 465.8 74.0 465.7 73.0 465.1Z" fill="url(#bg)" stroke="#ac1838" stroke-width="1.1" stroke-linejoin="round"/>
<path d="M74.5 459.3L75.7 461.9L76.9 461.7L78.1 458.2L79.3 455.8L80.5 457.3L81.7 460.3L82.9 461.3L84.1 459.9L85.3 459.2L86.5 459.6L87.7 459.5" fill="none" stroke="#9c3434" stroke-width="0.85" opacity="0.9"/>
<path d="M88.2 493.0L88.2 485.2 89.2 484.8 90.2 483.7 91.2 483.0 92.2 482.4 93.2 482.6 94.2 482.8 95.2 483.2 96.2 483.6 97.2 484.2 98.2 483.8 99.2 484.3 100.2 485.0 101.2 486.6 102.3 487.2 103.3 487.6 104.3 487.9 105.3 488.3 106.3 489.8 107.3 490.1 108.3 490.2 109.3 490.7 110.3 490.3 111.3 489.9 112.3 490.2 113.3 489.9 114.3 489.3L114.3 493.0L114.3 496.7 113.3 496.2 112.3 496.0 111.3 495.7 110.3 495.6 109.3 495.9 108.3 495.5 107.3 495.7 106.3 496.5 105.3 497.1 104.3 498.2 103.3 498.0 102.3 498.5 101.2 499.7 100.2 501.0 99.2 501.5 98.2 501.8 97.2 502.1 96.2 501.9 95.2 502.3 94.2 502.6 93.2 503.1 92.2 503.1 91.2 502.8 90.2 502.0 89.2 501.3 88.2 501.3Z" fill="url(#bg)" stroke="#ac1838" stroke-width="1.1" stroke-linejoin="round"/>
<path d="M89.7 493.0L90.9 492.0L92.1 495.7L93.3 496.0L94.5 493.3L95.7 491.9L96.9 492.7L98.1 493.0L99.3 491.4L100.5 490.7L101.7 493.1L102.9 495.6L104.1 495.2L105.3 492.7L106.5 491.6L107.7 492.3L108.9 493.2L110.1 493.3L111.3 492.9L112.5 493.2L113.7 494.1" fill="none" stroke="#9c3434" stroke-width="0.85" opacity="0.9"/>
<path d="M119.8 471.3L119.8 466.5 120.9 464.0 122.0 461.1 123.1 461.5 124.3 461.8 125.4 462.4 126.5 465.7 127.6 467.6L127.6 471.3L127.6 475.6 126.5 477.2 125.4 480.2 124.3 480.3 123.1 480.7 122.0 481.3 120.9 479.0 119.8 476.5Z" fill="url(#bg)" stroke="#ac1838" stroke-width="1.1" stroke-linejoin="round"/>
<path d="M133.8 461.6L133.8 453.9 134.8 453.3 135.9 452.9 136.9 452.9 137.9 452.8 138.9 452.7 140.0 452.4 141.0 453.1 142.0 453.1 143.0 452.8 144.1 453.0 145.1 453.4 146.1 453.2 147.1 453.8 148.2 453.9 149.2 454.8 150.2 454.3 151.2 454.8 152.3 454.1 153.3 453.6 154.3 454.0 155.3 453.7 156.4 454.8 157.4 455.8L157.4 461.6L157.4 467.4 156.4 468.6 155.3 469.8 154.3 469.7 153.3 469.0 152.3 469.1 151.2 468.9 150.2 468.8 149.2 468.9 148.2 468.8 147.1 469.3 146.1 470.2 145.1 470.0 144.1 470.3 143.0 470.4 142.0 470.3 141.0 470.6 140.0 470.6 138.9 470.8 137.9 470.6 136.9 470.7 135.9 469.9 134.8 469.5 133.8 469.5Z" fill="url(#bg)" stroke="#ac1838" stroke-width="1.1" stroke-linejoin="round"/>
<path d="M135.3 461.6L136.5 457.8L137.7 460.7L138.9 464.3L140.1 464.3L141.3 461.9L142.5 460.7L143.7 461.6L144.9 461.6L146.1 459.8L147.3 459.1L148.5 461.9L149.7 465.1L150.9 464.7L152.1 461.0L153.3 458.6L154.5 459.8L155.7 462.0L156.9 461.9" fill="none" stroke="#9c3434" stroke-width="0.85" opacity="0.9"/>
<path d="M155.8 521.0L155.8 513.9 156.8 513.9 157.8 513.3 158.9 513.2 159.9 512.7 160.9 513.0 161.9 513.1 162.9 512.9 163.9 512.6 165.0 512.8 166.0 513.2 167.0 513.3 168.0 514.0 169.0 514.7 170.0 515.2 171.1 515.9 172.1 517.2 173.1 518.0 174.1 518.2 175.1 518.2 176.2 518.4 177.2 518.6 178.2 518.5 179.2 518.7 180.2 518.6 181.2 518.0 182.3 518.3 183.3 517.7 184.3 517.3 185.3 516.0 186.3 515.3 187.3 515.2 188.4 514.6 189.4 513.1 190.4 512.6 191.4 511.9 192.4 511.5 193.4 512.1 194.5 512.4 195.5 515.1 196.5 516.9L196.5 521.0L196.5 525.2 195.5 526.6 194.5 529.6 193.4 529.9 192.4 530.8 191.4 530.3 190.4 529.5 189.4 528.9 188.4 527.7 187.3 526.8 186.3 527.0 185.3 525.6 184.3 524.4 183.3 523.8 182.3 524.2 181.2 523.9 180.2 524.0 179.2 523.7 178.2 523.5 177.2 523.5 176.2 523.7 175.1 523.9 174.1 524.2 173.1 524.0 172.1 524.8 171.1 526.0 170.0 526.7 169.0 527.3 168.0 527.9 167.0 528.9 166.0 528.8 165.0 528.7 163.9 529.0 162.9 529.2 161.9 529.2 160.9 529.2 159.9 529.4 158.9 529.0 157.8 528.4 156.8 528.0 155.8 527.8Z" fill="url(#bg)" stroke="#ac1838" stroke-width="1.1" stroke-linejoin="round"/>
<path d="M157.3 521.0L158.5 524.6L159.7 522.9L160.9 520.1L162.1 519.8L163.3 521.0L164.5 520.5L165.7 519.0L166.9 519.7L168.1 522.9L169.3 524.3L170.5 522.2L171.7 519.6L172.9 519.7L174.1 520.7L175.3 521.4L176.5 521.2L177.7 521.0L178.9 521.5L180.1 521.9L181.3 521.1L182.5 519.7L183.7 519.5L184.9 521.1L186.1 523.4L187.3 522.9L188.5 520.8L189.7 520.1L190.9 521.1L192.1 520.7L193.3 518.8L194.5 518.9L195.7 521.8" fill="none" stroke="#9c3434" stroke-width="0.85" opacity="0.9"/>
<path d="M194.4 461.0L194.4 454.0 195.4 453.3 196.4 453.2 197.4 452.7 198.4 453.3 199.4 452.9 200.4 453.0 201.4 453.3 202.4 453.4 203.4 453.7 204.4 453.2 205.4 453.3 206.4 452.8 207.4 453.1 208.4 452.7 209.4 453.5 210.4 453.6 211.4 454.2 212.4 454.9 213.4 455.4 214.4 457.6 215.4 458.3 216.4 456.2 217.4 454.1 218.4 454.0 219.4 456.0 220.4 457.6 221.4 456.9 222.4 454.8 223.4 454.7 224.4 453.7 225.4 453.7 226.4 453.5 227.4 453.3 228.4 453.3 229.4 453.5 230.4 453.3 231.4 453.6 232.4 453.4L232.4 461.0L232.4 468.4 231.4 468.6 230.4 468.8 229.4 468.9 228.4 468.6 227.4 468.9 226.4 468.7 225.4 468.3 224.4 468.1 223.4 467.5 222.4 466.7 221.4 464.7 220.4 464.2 219.4 466.1 218.4 467.7 217.4 467.4 216.4 465.3 215.4 463.5 214.4 464.0 213.4 467.0 212.4 467.0 211.4 467.7 210.4 468.3 209.4 468.8 208.4 469.3 207.4 468.9 206.4 468.6 205.4 468.9 204.4 468.9 203.4 468.3 202.4 468.8 201.4 468.3 200.4 468.9 199.4 468.7 198.4 469.3 197.4 469.3 196.4 468.9 195.4 468.2 194.4 468.0Z" fill="url(#bg)" stroke="#ac1838" stroke-width="1.1" stroke-linejoin="round"/>
<path d="M195.9 461.0L197.1 464.9L198.3 462.0L199.5 458.7L200.7 458.7L201.9 460.8L203.1 461.3L204.3 460.3L205.5 460.9L206.7 463.3L207.9 464.0L209.1 460.9L210.3 457.5L211.5 458.2L212.7 461.3L213.9 462.6L215.1 461.5L216.3 460.9L217.5 461.3L218.7 461.9L219.9 460.6L221.1 459.7L222.3 459.1L223.5 462.4L224.7 464.9L225.9 462.9L227.1 459.5L228.3 458.8L229.5 460.5L230.7 461.0L231.9 460.0" fill="none" stroke="#9c3434" stroke-width="0.85" opacity="0.9"/>
<path d="M231.4 439.5L231.4 434.2 232.4 434.3 233.4 432.9 234.5 432.7 235.5 432.5 236.5 432.5 237.5 433.1 238.6 433.4 239.6 434.7 240.6 436.5L240.6 439.5L240.6 442.3 239.6 445.0 238.6 445.4 237.5 445.6 236.5 446.2 235.5 446.5 234.5 446.8 233.4 445.5 232.4 444.7 231.4 444.2Z" fill="url(#bg)" stroke="#ac1838" stroke-width="1.1" stroke-linejoin="round"/>
<path d="M232.9 439.5L234.1 439.6L235.3 440.1L236.5 441.2L237.7 440.0L238.9 437.3L240.1 437.7" fill="none" stroke="#9c3434" stroke-width="0.85" opacity="0.9"/>
<path d="M238.6 461.6L238.6 455.0 239.6 454.5 240.7 454.3 241.7 453.7 242.7 453.6 243.7 453.7 244.8 453.8 245.8 454.1 246.8 454.4 247.8 454.7 248.9 454.7 249.9 454.5 250.9 455.1 251.9 455.4 253.0 455.6 254.0 456.7 255.0 456.8 256.0 456.9 257.1 458.1 258.1 458.8L258.1 461.6L258.1 464.8 257.1 465.3 256.0 466.1 255.0 466.8 254.0 466.9 253.0 467.5 251.9 468.0 250.9 468.2 249.9 468.5 248.9 468.9 247.8 468.8 246.8 468.9 245.8 468.8 244.8 468.8 243.7 469.2 242.7 469.1 241.7 469.3 240.7 468.9 239.6 468.3 238.6 468.0Z" fill="url(#bg)" stroke="#ac1838" stroke-width="1.1" stroke-linejoin="round"/>
<path d="M240.1 461.6L241.3 463.4L242.5 463.1L243.7 461.7L244.9 462.0L246.1 463.1L247.3 461.9L248.5 459.0L249.7 458.3L250.9 461.5L252.1 464.5L253.3 463.8L254.5 461.4L255.7 460.4L256.9 461.2" fill="none" stroke="#9c3434" stroke-width="0.85" opacity="0.9"/>
<path d="M257.0 470.9L257.0 465.2 258.0 464.9 259.1 464.0 260.1 463.6 261.1 463.6 262.1 463.3 263.2 463.3 264.2 462.9 265.2 463.4 266.3 463.3 267.3 463.0 268.3 463.2 269.4 463.2 270.4 463.2 271.4 463.8 272.5 463.4 273.5 463.7 274.5 463.8 275.5 463.5 276.6 463.7 277.6 463.8L277.6 470.9L277.6 477.9 276.6 478.1 275.5 477.7 274.5 478.2 273.5 478.4 272.5 478.3 271.4 478.4 270.4 478.6 269.4 478.6 268.3 478.1 267.3 478.6 266.3 478.6 265.2 478.5 264.2 478.8 263.2 478.6 262.1 478.7 261.1 478.5 260.1 477.8 259.1 477.3 258.0 476.9 257.0 477.0Z" fill="url(#bg)" stroke="#ac1838" stroke-width="1.1" stroke-linejoin="round"/>
<path d="M258.5 470.9L259.7 470.5L260.9 469.9L262.1 471.7L263.3 474.1L264.5 473.1L265.7 469.2L266.9 467.0L268.1 469.1L269.3 472.4L270.5 473.0L271.7 471.3L272.9 470.9L274.1 472.0L275.3 471.6L276.5 469.0" fill="none" stroke="#9c3434" stroke-width="0.85" opacity="0.9"/>
<path d="M276.6 465.7L276.6 458.4 277.6 458.5 278.7 457.7 279.7 457.0 280.7 457.0 281.7 457.3 282.8 457.5 283.8 456.8 284.8 457.4 285.8 457.3 286.9 457.4 287.9 457.5L287.9 465.7L287.9 473.8 286.9 474.2 285.8 473.9 284.8 474.5 283.8 474.2 282.8 474.6 281.7 474.1 280.7 474.1 279.7 474.3 278.7 473.7 277.6 473.2 276.6 472.5Z" fill="url(#bg)" stroke="#ac1838" stroke-width="1.1" stroke-linejoin="round"/>
<path d="M278.1 465.7L279.3 468.1L280.5 467.8L281.7 465.8L282.9 465.5L284.1 466.5L285.3 465.7L286.5 463.2" fill="none" stroke="#9c3434" stroke-width="0.85" opacity="0.9"/>
<path d="M286.9 493.0L286.9 486.0 287.9 485.6 288.9 485.6 289.9 485.4 290.9 485.2 291.9 484.5 292.9 484.8 293.9 484.7 294.9 484.7 295.9 485.0 296.9 485.0 297.9 484.5 298.9 484.9 299.9 484.7 300.9 484.8 301.9 485.0 302.9 485.1 303.9 485.0 304.9 485.7 305.9 485.8 306.9 486.0 308.0 486.8 309.0 488.0 310.0 488.7 311.0 488.1 312.0 487.0 313.0 486.9 314.0 487.7 315.0 488.1 316.0 487.8 317.0 488.2 318.0 488.9 319.0 489.7 320.0 489.9 321.0 490.2 322.0 490.4 323.0 490.4 324.0 491.4 325.0 491.5 326.0 492.6 327.0 492.1L327.0 493.0L327.0 493.4 326.0 493.7 325.0 494.5 324.0 494.8 323.0 495.1 322.0 495.3 321.0 495.7 320.0 496.1 319.0 496.8 318.0 496.9 317.0 497.5 316.0 498.2 315.0 497.9 314.0 498.4 313.0 498.9 312.0 499.2 311.0 498.5 310.0 497.6 309.0 498.6 308.0 498.9 306.9 499.8 305.9 500.3 304.9 500.4 303.9 500.4 302.9 500.7 301.9 500.9 300.9 501.5 299.9 501.1 298.9 501.5 297.9 501.5 296.9 501.4 295.9 500.9 294.9 501.1 293.9 500.9 292.9 501.2 291.9 500.9 290.9 501.1 289.9 500.6 288.9 500.7 287.9 500.3 286.9 500.3Z" fill="url(#bg)" stroke="#ac1838" stroke-width="1.1" stroke-linejoin="round"/>
<path d="M288.4 493.0L289.6 494.5L290.8 497.0L292.0 495.1L293.2 491.2L294.4 490.0L295.6 492.0L296.8 493.7L298.0 493.1L299.2 492.7L300.4 494.3L301.6 495.8L302.8 493.9L304.0 490.1L305.2 489.2L306.4 492.4L307.6 495.2L308.8 494.7L310.0 493.1L311.2 492.7L312.4 493.4L313.6 493.0L314.8 491.4L316.0 491.2L317.2 493.3L318.4 495.0L319.6 494.3L320.8 492.7L322.0 492.1L323.2 492.6L324.4 493.1L325.6 493.0" fill="none" stroke="#9c3434" stroke-width="0.85" opacity="0.9"/>
<path d="M325.0 499.0L325.0 493.9 326.0 493.5 327.0 492.9 328.0 492.3 329.0 491.7 330.0 491.9 331.0 492.1 332.0 493.2 333.0 493.0L333.0 499.0L333.0 505.1 332.0 504.9 331.0 505.4 330.0 505.9 329.0 506.2 328.0 505.8 327.0 505.4 326.0 504.2 325.0 503.7Z" fill="url(#bg)" stroke="#ac1838" stroke-width="1.1" stroke-linejoin="round"/>
<path d="M331.0 473.5L331.0 468.8 332.0 468.0 333.1 467.5 334.1 467.6 335.2 467.8 336.2 467.6 337.3 468.6 338.3 468.6L338.3 473.5L338.3 478.2 337.3 478.6 336.2 479.2 335.2 479.2 334.1 479.9 333.1 479.4 332.0 478.6 331.0 478.3Z" fill="url(#bg)" stroke="#ac1838" stroke-width="1.1" stroke-linejoin="round"/>
<path d="M338.3 464.7L338.3 459.6 339.3 459.3 340.4 457.9 341.4 456.0 342.4 456.0 343.4 456.3 344.5 456.2 345.5 456.1 346.5 455.9 347.5 456.1 348.6 456.5 349.6 456.2 350.6 456.6 351.6 456.3 352.7 456.7 353.7 456.6 354.7 456.8 355.8 456.5 356.8 456.9 357.8 456.8 358.8 456.2 359.9 456.6 360.9 456.1 361.9 456.2 362.9 456.3 364.0 456.7 365.0 456.5L365.0 464.7L365.0 472.4 364.0 473.1 362.9 472.9 361.9 473.3 360.9 472.8 359.9 473.2 358.8 472.8 357.8 472.9 356.8 472.9 355.8 472.7 354.7 472.4 353.7 472.5 352.7 472.8 351.6 472.5 350.6 473.0 349.6 472.8 348.6 472.9 347.5 473.4 346.5 473.4 345.5 473.3 344.5 473.5 343.4 473.5 342.4 473.5 341.4 472.9 340.4 471.7 339.3 470.6 338.3 470.0Z" fill="url(#bg)" stroke="#ac1838" stroke-width="1.1" stroke-linejoin="round"/>
<path d="M339.8 464.7L341.0 461.4L342.2 462.0L343.4 464.9L344.6 466.1L345.8 465.1L347.0 464.8L348.2 466.3L349.4 466.6L350.6 463.8L351.8 461.0L353.0 462.1L354.2 466.1L355.4 468.1L356.6 466.3L357.8 463.8L359.0 463.8L360.2 464.8L361.4 464.0L362.6 462.4L363.8 463.4" fill="none" stroke="#9c3434" stroke-width="0.85" opacity="0.9"/>
<path d="M362.0 493.5L362.0 485.4 363.0 485.1 364.1 485.1 365.1 484.2 366.1 483.8 367.1 483.4 368.2 483.7 369.2 483.9 370.2 483.5 371.3 483.8 372.3 484.4 373.3 484.2 374.4 484.7 375.4 484.2 376.4 484.5 377.4 485.6 378.5 486.9 379.5 487.3 380.5 487.9 381.6 487.7 382.6 488.7 383.6 489.4 384.7 489.6 385.7 489.9 386.7 489.6 387.8 489.5 388.8 489.8 389.8 489.5 390.8 489.3 391.9 489.1 392.9 488.4L392.9 493.5L392.9 498.8 391.9 498.0 390.8 497.6 389.8 497.2 388.8 497.7 387.8 497.2 386.7 497.5 385.7 497.3 384.7 496.9 383.6 497.2 382.6 498.1 381.6 499.1 380.5 499.6 379.5 499.4 378.5 500.7 377.4 501.8 376.4 502.7 375.4 502.2 374.4 502.3 373.3 502.5 372.3 502.7 371.3 503.3 370.2 503.1 369.2 503.4 368.2 503.4 367.1 503.2 366.1 503.3 365.1 502.9 364.1 502.0 363.0 501.8 362.0 501.6Z" fill="url(#bg)" stroke="#ac1838" stroke-width="1.1" stroke-linejoin="round"/>
<path d="M363.5 493.5L364.7 496.2L365.9 494.2L367.1 493.0L368.3 493.8L369.5 493.9L370.7 491.8L371.9 490.5L373.1 492.8L374.3 496.6L375.5 497.1L376.7 493.8L377.9 490.9L379.1 491.8L380.3 493.5L381.5 493.6L382.7 493.0L383.9 493.6L385.1 494.8L386.3 494.8L387.5 493.1L388.7 491.4L389.9 492.1L391.1 494.1L392.3 495.2" fill="none" stroke="#9c3434" stroke-width="0.85" opacity="0.9"/>
<path d="M391.9 460.6L391.9 456.5 392.9 454.9 393.9 452.3 394.9 453.5 395.9 455.1 396.9 456.6 397.9 457.9 398.9 456.8 399.9 455.3 400.9 454.3 401.9 454.4 402.9 453.2 404.0 451.5 405.0 451.4 406.0 451.0 407.0 451.1 408.0 451.5 409.0 451.5 410.0 451.6 411.0 451.5 412.0 451.4 413.0 451.7 414.0 451.4 415.0 451.4 416.0 451.3 417.0 451.4 418.0 451.7 419.0 451.2 420.0 451.0 421.0 451.3 422.0 450.9 423.0 451.0 424.0 451.1 425.0 451.0 426.1 451.2 427.1 451.3 428.1 451.7 429.1 451.8 430.1 452.1 431.1 452.6 432.1 452.5 433.1 452.5 434.1 452.5 435.1 452.3 436.1 451.7 437.1 451.8L437.1 460.6L437.1 469.9 436.1 469.7 435.1 469.0 434.1 469.1 433.1 468.5 432.1 468.9 431.1 468.6 430.1 469.2 429.1 469.1 428.1 469.4 427.1 469.9 426.1 470.1 425.0 470.0 424.0 470.5 423.0 470.4 422.0 470.1 421.0 470.0 420.0 470.0 419.0 469.6 418.0 470.1 417.0 470.0 416.0 469.7 415.0 469.3 414.0 469.8 413.0 469.4 412.0 469.6 411.0 469.7 410.0 470.0 409.0 470.1 408.0 469.8 407.0 470.0 406.0 469.9 405.0 470.4 404.0 469.5 402.9 467.9 401.9 467.2 400.9 466.8 399.9 465.6 398.9 464.4 397.9 463.7 396.9 464.3 395.9 466.5 394.9 467.8 393.9 468.3 392.9 466.1 391.9 464.8Z" fill="url(#bg)" stroke="#ac1838" stroke-width="1.1" stroke-linejoin="round"/>
<path d="M393.4 460.6L394.6 460.4L395.8 461.1L397.0 461.1L398.2 460.1L399.4 458.6L400.6 459.1L401.8 462.5L403.0 464.5L404.2 462.0L405.4 458.9L406.6 458.8L407.8 460.3L409.0 460.4L410.2 459.3L411.4 460.1L412.6 463.0L413.8 464.0L415.0 461.0L416.2 457.3L417.4 457.4L418.6 460.6L419.8 462.6L421.0 461.6L422.2 460.6L423.4 461.5L424.6 462.1L425.8 460.1L427.0 457.3L428.2 457.8L429.4 461.7L430.6 464.3L431.8 462.7L433.0 459.6L434.2 459.0L435.4 460.3L436.6 460.4" fill="none" stroke="#9c3434" stroke-width="0.85" opacity="0.9"/>
<path d="M469.0 462.7L469.0 455.6 470.0 455.3 471.1 455.0 472.1 454.3 473.1 453.8 474.1 453.9 475.2 453.4 476.2 453.6 477.2 453.2 478.2 452.9 479.3 453.1 480.3 452.8 481.3 453.0 482.3 453.1 483.4 453.4 484.4 454.0 485.4 454.0 486.4 454.6 487.5 454.4 488.5 454.9 489.5 454.9 490.6 455.7 491.6 455.7 492.6 455.6 493.6 455.9 494.7 455.1 495.7 454.8 496.7 455.1 497.7 454.9 498.8 455.0 499.8 454.7 500.8 455.2 501.8 455.7 502.9 455.7 503.9 455.7L503.9 462.7L503.9 469.5 502.9 469.7 501.8 469.7 500.8 470.3 499.8 470.1 498.8 470.6 497.7 470.6 496.7 470.5 495.7 470.0 494.7 470.3 493.6 469.8 492.6 470.0 491.6 469.6 490.6 469.9 489.5 470.2 488.5 470.6 487.5 470.5 486.4 471.0 485.4 471.0 484.4 471.1 483.4 472.0 482.3 471.9 481.3 472.4 480.3 472.1 479.3 472.5 478.2 472.1 477.2 471.8 476.2 471.7 475.2 471.8 474.1 472.0 473.1 471.4 472.1 471.3 471.1 470.7 470.0 470.2 469.0 469.4Z" fill="url(#bg)" stroke="#ac1838" stroke-width="1.1" stroke-linejoin="round"/>
<path d="M470.5 462.7L471.7 463.5L472.9 462.6L474.1 460.1L475.3 459.9L476.5 463.3L477.7 466.5L478.9 465.5L480.1 461.9L481.3 460.2L482.5 461.6L483.7 462.9L484.9 462.2L486.1 461.8L487.3 463.8L488.5 466.0L489.7 464.6L490.9 460.7L492.1 458.9L493.3 461.2L494.5 464.4L495.7 464.7L496.9 463.0L498.1 462.8L499.3 463.8L500.5 463.2L501.7 460.5L502.9 459.4" fill="none" stroke="#9c3434" stroke-width="0.85" opacity="0.9"/>
<path d="M502.9 443.7L502.9 437.7 503.9 436.9 504.9 436.2 506.0 435.2 507.0 435.7 508.0 435.5 509.0 435.9 510.1 435.9 511.1 435.9 512.1 435.9 513.1 435.7 514.2 436.1 515.2 435.9 516.2 436.3 517.2 436.3 518.3 436.8 519.3 436.4L519.3 443.7L519.3 450.7 518.3 451.0 517.2 450.7 516.2 451.0 515.2 451.2 514.2 451.3 513.1 451.9 512.1 451.5 511.1 451.5 510.1 451.9 509.0 451.8 508.0 451.6 507.0 452.3 506.0 451.7 504.9 451.7 503.9 450.3 502.9 450.0Z" fill="url(#bg)" stroke="#ac1838" stroke-width="1.1" stroke-linejoin="round"/>
<path d="M504.4 443.7L505.6 446.8L506.8 447.3L508.0 444.0L509.2 441.1L510.4 441.8L511.6 443.7L512.8 443.8L514.0 442.9L515.2 444.0L516.4 446.4L517.6 446.3L518.8 442.9" fill="none" stroke="#9c3434" stroke-width="0.85" opacity="0.9"/>
<path d="M518.3 465.8L518.3 458.5 519.3 458.2 520.3 457.8 521.4 457.0 522.4 457.1 523.4 457.4 524.4 457.7 525.5 458.3 526.5 458.5 527.5 459.0L527.5 465.8L527.5 472.8 526.5 473.1 525.5 473.3 524.4 473.5 523.4 474.3 522.4 474.5 521.4 474.4 520.3 473.9 519.3 473.2 518.3 473.0Z" fill="url(#bg)" stroke="#ac1838" stroke-width="1.1" stroke-linejoin="round"/>
<path d="M519.8 465.8L521.0 462.0L522.2 465.1L523.4 468.5L524.6 468.4L525.8 466.0L527.0 465.0" fill="none" stroke="#9c3434" stroke-width="0.85" opacity="0.9"/>
<path d="M527.5 440.6L527.5 433.6 528.6 432.4 529.8 431.2 530.9 431.5 532.0 432.0 533.2 432.6 534.3 432.6L534.3 440.6L534.3 448.3 533.2 449.0 532.0 449.0 530.9 449.4 529.8 449.7 528.6 448.5 527.5 447.3Z" fill="url(#bg)" stroke="#ac1838" stroke-width="1.1" stroke-linejoin="round"/>
<path d="M532.7 416.5L532.7 407.5 533.7 407.8 534.8 407.6 535.8 407.4 536.8 406.9 537.8 406.9 538.9 407.1 539.9 407.0 540.9 406.5 541.9 407.0 543.0 407.1 544.0 407.1 545.0 406.9 546.0 406.7 547.1 407.0 548.1 406.7 549.1 406.8 550.1 407.1 551.2 406.8 552.2 406.9 553.2 407.4 554.2 407.6 555.3 407.5 556.3 407.2L556.3 416.5L556.3 425.8 555.3 425.8 554.2 425.7 553.2 425.6 552.2 425.9 551.2 426.2 550.1 426.3 549.1 426.3 548.1 425.8 547.1 425.9 546.0 425.9 545.0 426.4 544.0 425.9 543.0 426.0 541.9 425.9 540.9 426.1 539.9 426.5 538.9 425.9 537.8 426.4 536.8 426.3 535.8 426.0 534.8 426.0 533.7 425.3 532.7 425.4Z" fill="url(#bg)" stroke="#ac1838" stroke-width="1.1" stroke-linejoin="round"/>
<path d="M534.2 416.5L535.4 420.2L536.6 417.4L537.8 413.6L539.0 413.2L540.2 416.1L541.4 418.1L542.6 417.3L543.8 416.5L545.0 417.6L546.2 418.4L547.4 416.3L548.6 413.2L549.8 413.4L551.0 417.2L552.2 420.0L553.4 418.8L554.6 415.9L555.8 415.2" fill="none" stroke="#9c3434" stroke-width="0.85" opacity="0.9"/>
<path d="M554.0 437.7L554.0 430.6 555.0 430.3 556.1 430.1 557.1 429.7 558.2 429.2 559.2 429.4 560.2 430.1 561.3 431.5 562.3 432.0 563.4 432.1 564.4 432.5L564.4 437.7L564.4 442.8 563.4 442.6 562.3 443.4 561.3 444.3 560.2 445.2 559.2 445.9 558.2 446.2 557.1 445.8 556.1 445.3 555.0 445.2 554.0 444.9Z" fill="url(#bg)" stroke="#ac1838" stroke-width="1.1" stroke-linejoin="round"/>
<path d="M555.5 437.7L556.7 434.5L557.9 434.6L559.1 437.7L560.3 439.3L561.5 438.3L562.7 437.7L563.9 438.6" fill="none" stroke="#9c3434" stroke-width="0.85" opacity="0.9"/>
<path d="M562.7 466.0L562.7 461.0 563.8 460.3 565.0 459.8 566.1 459.0 567.2 459.5 568.4 460.4 569.5 461.1L569.5 466.0L569.5 470.8 568.4 471.5 567.2 472.1 566.1 472.6 565.0 472.0 563.8 471.3 562.7 471.3Z" fill="url(#bg)" stroke="#ac1838" stroke-width="1.1" stroke-linejoin="round"/>
<path d="M569.9 418.0L569.9 411.1 570.9 410.5 571.9 410.1 572.9 409.5 573.9 409.9 575.0 409.5 576.0 409.3 577.0 409.7 578.0 409.8 579.0 410.0 580.0 409.6 581.0 409.4 582.0 409.7 583.1 409.5 584.1 409.5 585.1 410.8 586.1 411.8 587.1 413.5 588.1 414.2 589.1 414.0 590.1 414.0 591.1 414.7 592.2 414.3 593.2 414.8 594.2 414.8 595.2 414.4 596.2 414.4 597.2 414.5 598.2 414.7 599.2 414.7 600.2 414.6 601.3 414.2 602.3 413.1 603.3 413.3 604.3 413.0 605.3 412.2 606.3 412.1 607.3 411.7 608.3 411.8 609.4 411.5 610.4 412.0 611.4 412.4 612.4 412.6 613.4 413.0 614.4 412.9 615.4 410.0 616.4 409.7 617.4 409.4 618.5 409.1 619.5 408.7 620.5 408.7 621.5 408.5 622.5 409.1 623.5 409.3 624.5 409.1 625.5 409.6 626.5 410.1 627.6 409.7 628.6 412.3 629.6 411.7 630.6 411.5 631.6 411.9 632.6 411.6 633.6 411.9 634.6 412.7 635.7 414.1 636.7 414.1 637.7 414.9 638.7 416.3 639.7 416.9L639.7 418.0L639.7 418.9 638.7 419.7 637.7 420.5 636.7 421.7 635.7 421.9 634.6 422.8 633.6 424.1 632.6 424.7 631.6 424.6 630.6 423.9 629.6 423.9 628.6 424.3 627.6 426.3 626.5 426.4 625.5 426.5 624.5 426.6 623.5 427.0 622.5 427.2 621.5 426.9 620.5 426.9 619.5 427.3 618.5 426.4 617.4 426.6 616.4 426.2 615.4 425.9 614.4 423.2 613.4 423.4 612.4 423.6 611.4 424.1 610.4 424.2 609.4 424.6 608.3 424.4 607.3 424.3 606.3 424.4 605.3 423.5 604.3 422.9 603.3 422.8 602.3 422.9 601.3 422.0 600.2 421.4 599.2 421.2 598.2 421.6 597.2 421.6 596.2 421.1 595.2 421.1 594.2 421.4 593.2 421.4 592.2 421.6 591.1 421.6 590.1 421.9 589.1 421.8 588.1 421.8 587.1 422.6 586.1 424.0 585.1 425.2 584.1 426.2 583.1 426.4 582.0 426.0 581.0 426.3 580.0 426.6 579.0 426.5 578.0 426.3 577.0 426.3 576.0 426.5 575.0 426.2 573.9 426.6 572.9 426.3 571.9 425.4 570.9 425.5 569.9 425.0Z" fill="url(#bg)" stroke="#ac1838" stroke-width="1.1" stroke-linejoin="round"/>
<path d="M571.4 418.0L572.6 419.0L573.8 416.8L575.0 417.2L576.2 418.1L577.4 417.0L578.6 415.7L579.8 417.4L581.0 420.9L582.2 421.7L583.4 418.3L584.6 415.0L585.8 415.7L587.0 418.0L588.2 418.6L589.4 418.0L590.6 418.1L591.8 418.9L593.0 419.0L594.2 417.7L595.4 416.2L596.6 416.7L597.8 418.5L599.0 419.5L600.2 418.7L601.4 417.6L602.6 417.6L603.8 418.2L605.0 417.4L606.2 415.9L607.4 416.7L608.6 419.9L609.8 421.4L611.0 419.2L612.2 416.3L613.4 416.0L614.6 417.6L615.8 418.7L617.0 417.9L618.2 417.8L619.4 419.7L620.6 420.8L621.8 418.3L623.0 414.7L624.2 414.5L625.4 418.1L626.6 420.8L627.8 419.9L629.0 417.9L630.2 417.8L631.4 418.6L632.6 417.6L633.8 415.8L635.0 416.5L636.2 418.6L637.4 419.7L638.6 418.5" fill="none" stroke="#9c3434" stroke-width="0.85" opacity="0.9"/>
<path d="M639.4 404.5L639.4 396.5 640.4 396.5 641.5 396.2 642.5 396.3 643.5 396.1 644.5 395.6 645.6 395.5 646.6 395.6 647.6 395.6 648.6 396.2 649.7 395.9 650.7 396.1 651.7 395.9 652.8 396.2 653.8 396.3 654.8 395.8 655.8 396.2 656.9 396.9 657.9 397.8 658.9 398.4 659.9 398.4 661.0 398.2 662.0 397.5 663.0 397.2 664.0 398.1 665.1 399.8 666.1 400.8L666.1 404.5L666.1 408.3 665.1 409.2 664.0 411.0 663.0 411.3 662.0 411.5 661.0 411.0 659.9 410.4 658.9 410.9 657.9 411.6 656.9 411.9 655.8 412.6 654.8 413.1 653.8 412.9 652.8 412.9 651.7 412.9 650.7 412.9 649.7 413.1 648.6 412.8 647.6 413.4 646.6 412.8 645.6 413.4 644.5 413.4 643.5 413.1 642.5 412.8 641.5 412.7 640.4 412.2 639.4 412.7Z" fill="url(#bg)" stroke="#ac1838" stroke-width="1.1" stroke-linejoin="round"/>
<path d="M640.9 404.5L642.1 403.8L643.3 404.6L644.5 403.7L645.7 403.7L646.9 406.1L648.1 407.9L649.3 405.8L650.5 401.8L651.7 400.8L652.9 403.7L654.1 406.5L655.3 406.1L656.5 404.6L657.7 404.8L658.9 405.6L660.1 404.6L661.3 402.1L662.5 401.5L663.7 404.7L664.9 406.9" fill="none" stroke="#9c3434" stroke-width="0.85" opacity="0.9"/>
<path d="M673.3 412.7L673.3 404.7 674.3 404.0 675.4 402.2 676.4 401.8 677.4 402.3 678.5 402.2 679.5 402.9 680.5 402.5 681.5 403.6 682.6 403.9 683.6 404.8 684.6 404.9 685.7 406.6 686.7 407.7L686.7 412.7L686.7 417.5 685.7 418.5 684.6 420.1 683.6 421.0 682.6 421.1 681.5 421.9 680.5 422.6 679.5 422.8 678.5 422.9 677.4 423.4 676.4 423.6 675.4 422.9 674.3 421.7 673.3 420.9Z" fill="url(#bg)" stroke="#ac1838" stroke-width="1.1" stroke-linejoin="round"/>
<path d="M674.8 412.7L676.0 413.8L677.2 414.9L678.4 413.0L679.6 409.6L680.8 409.2L682.0 412.8L683.2 415.9L684.4 415.2L685.6 412.5" fill="none" stroke="#9c3434" stroke-width="0.85" opacity="0.9"/>
<path d="M686.0 403.9L686.0 394.7 687.0 395.0 688.0 394.9 689.0 394.2 690.0 394.1 691.1 393.6 692.1 393.7 693.1 393.4 694.1 393.3 695.1 393.9 696.1 393.8 697.1 393.8 698.1 393.9 699.2 394.1 700.2 393.9 701.2 394.3 702.2 394.5 703.2 395.6 704.2 395.9 705.2 396.0 706.2 396.1 707.3 396.8 708.3 397.2 709.3 397.9 710.3 397.7L710.3 403.9L710.3 409.8 709.3 410.2 708.3 410.7 707.3 410.8 706.2 411.5 705.2 412.0 704.2 412.3 703.2 412.7 702.2 413.2 701.2 413.6 700.2 413.9 699.2 414.2 698.1 413.9 697.1 413.7 696.1 414.1 695.1 414.2 694.1 414.1 693.1 414.1 692.1 413.9 691.1 413.9 690.0 414.1 689.0 413.9 688.0 413.0 687.0 412.7 686.0 413.2Z" fill="url(#bg)" stroke="#ac1838" stroke-width="1.1" stroke-linejoin="round"/>
<path d="M687.5 403.9L688.7 402.3L689.9 400.2L691.1 402.1L692.3 406.2L693.5 407.5L694.7 405.0L695.9 402.5L697.1 402.8L698.3 403.9L699.5 403.2L700.7 402.0L701.9 403.4L703.1 406.7L704.3 407.5L705.5 404.1L706.7 400.7L707.9 401.2L709.1 404.0" fill="none" stroke="#9c3434" stroke-width="0.85" opacity="0.9"/>
<path d="M709.3 387.0L709.3 379.1 710.3 379.0 711.4 378.3 712.4 378.2 713.4 377.6 714.4 377.0 715.5 377.1 716.5 377.6 717.5 377.1 718.6 377.5 719.6 377.6 720.6 377.9 721.6 377.8 722.7 377.7 723.7 377.9 724.7 377.7 725.8 378.1 726.8 379.0 727.8 380.1 728.9 381.4 729.9 381.9 730.9 381.8 731.9 382.5 733.0 382.1 734.0 382.4 735.0 382.2 736.1 382.8 737.1 382.6 738.1 382.6 739.1 382.8 740.2 383.2 741.2 383.0L741.2 387.0L741.2 390.9 740.2 391.3 739.1 391.2 738.1 391.6 737.1 391.4 736.1 391.6 735.0 391.7 734.0 391.3 733.0 391.9 731.9 391.9 730.9 392.1 729.9 391.8 728.9 392.6 727.8 393.5 726.8 394.8 725.8 395.5 724.7 396.3 723.7 396.2 722.7 396.2 721.6 396.5 720.6 396.3 719.6 396.5 718.6 396.7 717.5 396.6 716.5 396.7 715.5 396.9 714.4 396.7 713.4 396.7 712.4 395.9 711.4 395.6 710.3 395.4 709.3 394.9Z" fill="url(#bg)" stroke="#ac1838" stroke-width="1.1" stroke-linejoin="round"/>
<path d="M710.8 387.0L712.0 387.1L713.2 389.7L714.4 389.8L715.6 386.4L716.8 383.2L718.0 384.3L719.2 387.8L720.4 389.4L721.6 388.0L722.8 386.8L724.0 387.6L725.2 388.0L726.4 385.8L727.6 383.8L728.8 385.5L730.0 388.4L731.2 389.6L732.4 387.9L733.6 385.9L734.8 385.8L736.0 386.8L737.2 386.9L738.4 386.3L739.6 386.7L740.8 388.3" fill="none" stroke="#9c3434" stroke-width="0.85" opacity="0.9"/>
<path d="M747.2 388.3L747.2 379.0 748.2 379.2 749.3 379.0 750.3 378.8 751.3 378.6 752.3 378.8 753.4 378.3 754.4 378.4 755.4 378.5 756.5 378.3 757.5 378.7 758.5 378.7 759.5 378.8 760.6 378.9 761.6 378.4 762.6 379.1 763.7 378.6 764.7 378.5 765.7 379.3 766.7 380.0 767.8 381.8 768.8 382.6 769.8 382.6 770.9 383.0 771.9 383.4 772.9 383.4 773.9 384.1 775.0 385.8 776.0 386.1L776.0 388.3L776.0 390.1 775.0 391.1 773.9 392.6 772.9 393.3 771.9 393.3 770.9 394.1 769.8 394.3 768.8 394.4 767.8 394.8 766.7 396.7 765.7 397.4 764.7 397.6 763.7 397.5 762.6 398.0 761.6 397.6 760.6 398.1 759.5 397.8 758.5 398.4 757.5 397.8 756.5 398.5 755.4 398.3 754.4 398.1 753.4 398.0 752.3 397.8 751.3 397.4 750.3 397.6 749.3 397.4 748.2 397.6 747.2 397.5Z" fill="url(#bg)" stroke="#ac1838" stroke-width="1.1" stroke-linejoin="round"/>
<path d="M748.7 388.3L749.9 388.9L751.1 391.1L752.3 390.5L753.5 386.8L754.7 384.3L755.9 386.2L757.1 389.9L758.3 390.8L759.5 389.0L760.7 388.0L761.9 388.9L763.1 388.9L764.3 386.7L765.5 385.1L766.7 387.2L767.9 390.9L769.1 391.4L770.3 388.8L771.5 386.7L772.7 387.1L773.9 388.3L775.1 388.3" fill="none" stroke="#9c3434" stroke-width="0.85" opacity="0.9"/>
<path d="M666.1 469.7L666.1 464.7 667.1 464.3 668.2 463.5 669.2 462.7 670.2 462.2 671.3 462.7 672.3 463.3 673.4 463.5 674.4 464.0L674.4 469.7L674.4 475.4 673.4 475.8 672.3 476.5 671.3 476.7 670.2 477.1 669.2 476.9 668.2 475.9 667.1 474.8 666.1 474.4Z" fill="url(#bg)" stroke="#ac1838" stroke-width="1.1" stroke-linejoin="round"/>
<path d="M741.0 442.3L741.0 436.4 742.0 435.4 743.0 434.5 744.1 432.9 745.1 432.6 746.1 433.3 747.2 434.2 748.2 434.8 749.2 435.2L749.2 442.3L749.2 449.3 748.2 449.9 747.2 450.7 746.1 451.2 745.1 452.0 744.1 451.9 743.0 450.5 742.0 448.9 741.0 448.4Z" fill="url(#bg)" stroke="#ac1838" stroke-width="1.1" stroke-linejoin="round"/>
<path d="M775.1 399.4L775.1 393.4 776.2 392.7 777.3 392.0 778.4 392.1 779.5 392.6 780.6 393.1 781.7 393.4L781.7 399.4L781.7 405.7 780.6 405.6 779.5 406.4 778.4 406.8 777.3 406.8 776.2 405.9 775.1 405.6Z" fill="url(#bg)" stroke="#ac1838" stroke-width="1.1" stroke-linejoin="round"/>
<path d="M779.7 381.3L779.7 375.4 780.8 374.9 781.9 374.2 783.0 374.1 784.1 374.0 785.2 375.2 786.3 375.0L786.3 381.3L786.3 387.2 785.2 387.7 784.1 388.4 783.0 388.8 781.9 388.3 780.8 387.5 779.7 387.5Z" fill="url(#bg)" stroke="#ac1838" stroke-width="1.1" stroke-linejoin="round"/>
<path d="M784.3 360.6L784.3 353.3 785.3 353.7 786.4 353.0 787.4 352.8 788.4 352.5 789.5 353.2 790.5 354.3 791.5 355.5 792.6 356.4 793.6 356.4L793.6 360.6L793.6 364.3 792.6 364.7 791.5 365.8 790.5 366.9 789.5 368.2 788.4 368.8 787.4 368.8 786.4 368.5 785.3 367.9 784.3 367.4Z" fill="url(#bg)" stroke="#ac1838" stroke-width="1.1" stroke-linejoin="round"/>
<path d="M785.8 360.6L787.0 360.4L788.2 362.3L789.4 363.4L790.6 360.9L791.8 358.3L793.0 358.6" fill="none" stroke="#9c3434" stroke-width="0.85" opacity="0.9"/>
<path d="M792.9 383.0L792.9 376.3 793.9 375.8 794.9 375.8 796.0 375.0 797.0 374.9 798.0 374.8 799.0 375.1 800.1 374.9 801.1 374.6 802.1 375.0 803.1 374.9 804.1 374.9 805.2 375.3 806.2 375.1 807.2 375.0 808.2 375.3 809.3 375.4 810.3 376.1 811.3 376.3L811.3 383.0L811.3 389.7 810.3 389.8 809.3 389.9 808.2 390.2 807.2 390.8 806.2 390.9 805.2 391.3 804.1 391.1 803.1 390.7 802.1 391.4 801.1 391.3 800.1 390.8 799.0 390.9 798.0 391.3 797.0 391.0 796.0 390.6 794.9 390.5 793.9 390.3 792.9 390.1Z" fill="url(#bg)" stroke="#ac1838" stroke-width="1.1" stroke-linejoin="round"/>
<path d="M794.4 383.0L795.6 384.1L796.8 383.0L798.0 383.8L799.2 384.9L800.4 383.4L801.6 380.1L802.8 379.5L804.0 382.9L805.2 386.3L806.4 385.8L807.6 382.8L808.8 381.6L810.0 382.6" fill="none" stroke="#9c3434" stroke-width="0.85" opacity="0.9"/>
<path d="M809.3 361.0L809.3 353.7 810.3 354.1 811.3 353.9 812.4 353.2 813.4 353.5 814.4 353.4 815.4 353.3 816.4 353.2 817.4 353.1 818.5 353.4 819.5 353.0 820.5 353.6 821.5 353.3 822.5 353.2 823.6 353.5 824.6 353.4 825.6 353.5 826.6 353.3 827.6 353.4 828.6 353.6 829.7 353.4 830.7 353.8 831.7 353.5L831.7 361.0L831.7 368.4 830.7 368.7 829.7 368.7 828.6 368.4 827.6 368.6 826.6 368.7 825.6 368.6 824.6 368.6 823.6 368.2 822.5 368.8 821.5 368.7 820.5 368.3 819.5 368.8 818.5 368.4 817.4 369.1 816.4 369.1 815.4 368.9 814.4 368.5 813.4 368.9 812.4 368.6 811.3 368.0 810.3 367.9 809.3 367.7Z" fill="url(#bg)" stroke="#ac1838" stroke-width="1.1" stroke-linejoin="round"/>
<path d="M810.8 361.0L812.0 358.1L813.2 361.9L814.4 363.8L815.6 362.4L816.8 360.6L818.0 361.0L819.2 361.7L820.4 360.1L821.6 358.0L822.8 359.2L824.0 363.0L825.2 365.0L826.4 362.6L827.6 359.1L828.8 358.6L830.0 360.5L831.2 361.3" fill="none" stroke="#9c3434" stroke-width="0.85" opacity="0.9"/>
<path d="M830.4 349.5L830.4 345.3 831.4 345.2 832.5 345.0 833.5 345.1 834.6 344.7 835.6 345.0 836.7 344.8 837.7 344.8 838.8 344.4 839.8 344.3 840.9 344.6 841.9 344.8 843.0 344.9 844.0 345.0 845.1 344.7 846.1 345.1 847.2 345.3 848.2 344.7L848.2 349.5L848.2 354.0 847.2 353.9 846.1 354.2 845.1 354.4 844.0 354.3 843.0 354.6 841.9 354.1 840.9 354.7 839.8 354.4 838.8 354.1 837.7 354.6 836.7 354.4 835.6 354.2 834.6 354.2 833.5 354.2 832.5 354.4 831.4 353.9 830.4 354.1Z" fill="url(#bg)" stroke="#ac1838" stroke-width="1.1" stroke-linejoin="round"/>
<path d="M831.9 349.5L833.1 350.9L834.3 351.9L835.5 350.3L836.7 348.4L837.9 348.4L839.1 349.4L840.3 349.2L841.5 348.5L842.7 349.2L843.9 351.2L845.1 351.7L846.3 349.7L847.5 347.5" fill="none" stroke="#9c3434" stroke-width="0.85" opacity="0.9"/>
<path d="M884.3 388.3L884.3 382.1 885.4 382.1 886.5 381.0 887.6 380.9 888.7 381.2 889.8 382.2 890.9 382.0L890.9 388.3L890.9 394.5 889.8 394.5 888.7 395.4 887.6 395.5 886.5 395.8 885.4 394.6 884.3 394.5Z" fill="url(#bg)" stroke="#ac1838" stroke-width="1.1" stroke-linejoin="round"/>
<path d="M912.7 365.5L912.7 357.7 913.7 357.4 914.8 357.1 915.8 356.3 916.8 355.6 917.9 355.4 918.9 355.5 919.9 355.6 921.0 355.5 922.0 356.2 923.1 355.7 924.1 356.2 925.1 356.1 926.2 356.2 927.2 356.2 928.2 357.3 929.3 357.4 930.3 357.7L930.3 365.5L930.3 373.4 929.3 373.5 928.2 374.0 927.2 374.8 926.2 374.5 925.1 374.9 924.1 374.8 923.1 375.2 922.0 375.1 921.0 374.9 919.9 375.3 918.9 375.4 917.9 375.5 916.8 375.0 915.8 374.8 914.8 374.1 913.7 374.0 912.7 373.3Z" fill="url(#bg)" stroke="#ac1838" stroke-width="1.1" stroke-linejoin="round"/>
<path d="M914.2 365.5L915.4 365.8L916.6 366.5L917.8 365.5L919.0 365.8L920.2 367.6L921.4 367.5L922.6 364.3L923.8 361.6L925.0 363.2L926.2 367.1L927.4 368.7L928.6 366.7L929.8 364.7" fill="none" stroke="#9c3434" stroke-width="0.85" opacity="0.9"/>
<path d="M928.8 386.9L928.8 380.1 929.8 380.2 930.8 379.3 931.9 379.3 932.9 379.1 933.9 379.9 934.9 380.5 936.0 380.7 937.0 381.6 938.0 382.2 939.0 381.7 940.1 381.4 941.1 380.8 942.1 380.3 943.1 380.1 944.2 378.8 945.2 378.8 946.2 380.5 947.2 382.3 948.3 385.1 949.3 386.2L949.3 386.9L949.3 387.6 948.3 388.9 947.2 391.3 946.2 393.8 945.2 395.1 944.2 394.5 943.1 393.8 942.1 393.6 941.1 392.9 940.1 392.8 939.0 392.3 938.0 391.7 937.0 391.9 936.0 392.9 934.9 393.9 933.9 394.2 932.9 394.4 931.9 394.0 930.8 393.9 929.8 393.8 928.8 394.1Z" fill="url(#bg)" stroke="#ac1838" stroke-width="1.1" stroke-linejoin="round"/>
<path d="M930.3 386.9L931.5 385.3L932.7 383.0L933.9 385.0L935.1 388.2L936.3 388.5L937.5 387.2L938.7 386.9L939.9 387.7L941.1 387.5L942.3 385.2L943.5 383.4L944.7 385.8L945.9 389.8L947.1 389.2L948.3 387.0" fill="none" stroke="#9c3434" stroke-width="0.85" opacity="0.9"/>
<path d="M983.9 388.4L983.9 380.6 984.9 380.4 985.9 380.1 986.9 379.4 987.9 379.1 988.9 379.0 989.9 378.7 990.9 379.0 991.9 379.1 992.9 378.7 993.9 378.9 994.9 379.4 996.0 378.9 997.0 378.9 998.0 379.4 999.0 380.2 1000.0 382.5 1001.0 383.5 1002.0 383.2 1003.0 383.4 1004.0 382.9 1005.0 382.9 1006.0 382.9 1007.0 383.4 1008.0 383.0 1009.0 383.2 1010.0 383.1 1011.0 383.1 1012.0 383.5 1013.0 383.5 1014.0 383.7 1015.0 384.2 1016.0 384.7 1017.0 383.3 1018.1 382.1 1019.1 380.2 1020.1 379.7 1021.1 379.6 1022.1 379.0 1023.1 379.3 1024.1 378.7 1025.1 379.2 1026.1 379.4 1027.1 380.0 1028.1 381.2 1029.1 381.1L1029.1 388.4L1029.1 395.1 1028.1 395.5 1027.1 396.8 1026.1 397.2 1025.1 397.7 1024.1 397.8 1023.1 397.8 1022.1 397.2 1021.1 397.3 1020.1 397.1 1019.1 396.6 1018.1 394.7 1017.0 393.1 1016.0 392.7 1015.0 392.9 1014.0 392.7 1013.0 393.1 1012.0 393.2 1011.0 393.7 1010.0 393.8 1009.0 393.8 1008.0 393.6 1007.0 393.5 1006.0 393.5 1005.0 393.6 1004.0 393.9 1003.0 393.6 1002.0 393.1 1001.0 393.2 1000.0 394.5 999.0 396.5 998.0 397.7 997.0 397.9 996.0 397.6 994.9 398.0 993.9 398.1 992.9 398.1 991.9 397.6 990.9 397.5 989.9 397.6 988.9 397.6 987.9 397.2 986.9 397.0 985.9 396.9 984.9 396.4 983.9 396.7Z" fill="url(#bg)" stroke="#ac1838" stroke-width="1.1" stroke-linejoin="round"/>
<path d="M985.4 388.4L986.6 390.6L987.8 386.6L989.0 384.5L990.2 386.6L991.4 389.9L992.6 390.4L993.8 388.8L995.0 388.5L996.2 389.6L997.4 389.1L998.6 386.3L999.8 385.3L1001.0 387.8L1002.2 390.5L1003.4 390.9L1004.6 388.7L1005.8 387.0L1007.0 387.5L1008.2 388.4L1009.4 387.9L1010.6 387.3L1011.8 388.5L1013.0 390.5L1014.2 390.3L1015.4 388.0L1016.6 386.3L1017.8 386.3L1019.0 389.1L1020.2 390.1L1021.4 388.9L1022.6 388.5L1023.8 389.8L1025.0 389.8L1026.2 387.0L1027.4 384.7L1028.6 386.5" fill="none" stroke="#9c3434" stroke-width="0.85" opacity="0.9"/>
<path d="M112.3 582.4L112.3 578.4 113.3 578.1 114.4 578.1 115.4 577.8 116.4 577.4 117.5 577.7 118.5 577.7 119.5 578.1 120.6 578.6 121.6 578.1L121.6 582.4L121.6 586.7 120.6 586.5 119.5 586.8 118.5 587.0 117.5 587.1 116.4 587.3 115.4 586.8 114.4 587.0 113.3 586.6 112.3 586.2Z" fill="url(#bg)" stroke="#ac1838" stroke-width="1.1" stroke-linejoin="round"/>
<path d="M113.8 582.4L115.0 583.4L116.2 580.9L117.4 579.9L118.6 581.6L119.8 583.7L121.0 583.8" fill="none" stroke="#9c3434" stroke-width="0.85" opacity="0.9"/>
<path d="M126.2 587.0L126.2 581.3 127.3 580.7 128.4 580.8 129.6 580.7 130.7 580.7 131.8 582.2 132.9 582.7 134.1 584.7 135.2 585.9L135.2 587.0L135.2 588.1 134.1 589.8 132.9 591.2 131.8 591.7 130.7 592.9 129.6 593.3 128.4 592.9 127.3 593.3 126.2 592.8Z" fill="url(#bg)" stroke="#ac1838" stroke-width="1.1" stroke-linejoin="round"/>
</g></svg>
<svg width="1170" height="608" style="left:0;top:0"><defs><linearGradient id="mg" x1="0" y1="0" x2="0" y2="608" gradientUnits="userSpaceOnUse"><stop offset="0" stop-color="#6a5470"/><stop offset="0.08" stop-color="#6c5872"/><stop offset="0.15" stop-color="#73647a"/><stop offset="0.25" stop-color="#7a7884"/><stop offset="0.34" stop-color="#778589"/><stop offset="0.5" stop-color="#76898b"/><stop offset="1" stop-color="#74898a"/></linearGradient></defs>
<rect x="1072.8" y="0" width="97.2" height="608" fill="#353535"/>
<path d="M1073.5 1.5l5 5M1078.5 1.5l-5 5" stroke="#eee" stroke-width="1.5"/><path d="M1073.5 14l2.5-5l2.5 5z" fill="#eee"/>
<rect x="1075.3" y="20.0" width="1.6" height="1.6" fill="#ddd"/>
<rect x="1075.3" y="22.6" width="1.6" height="1.6" fill="#ddd"/>
<rect x="1075.3" y="25.2" width="1.6" height="1.6" fill="#ddd"/>
<rect x="1075.3" y="27.8" width="1.6" height="1.6" fill="#ddd"/>
<rect x="1075.3" y="30.4" width="1.6" height="1.6" fill="#ddd"/>
<rect x="1075.3" y="33.0" width="1.6" height="1.6" fill="#ddd"/>
<rect x="1075.3" y="35.6" width="1.6" height="1.6" fill="#ddd"/>
<rect x="1084.2" y="6.6" width="14.5" height="1.8" fill="#b4b4b4"/>
<rect x="1084.2" y="8.4" width="14.5" height="600" fill="#262626"/>
<rect x="1085.0" y="8.4" width="12.9" height="600" fill="url(#mg)"/>
<rect x="1085.0" y="8.4" width="1" height="600" fill="#ffffff" opacity="0.28"/>
<rect x="1096.9" y="8.4" width="1" height="600" fill="#ffffff" opacity="0.12"/>
<text x="1091.4" y="5.5" font-size="6" fill="#b8b8b8" text-anchor="middle" font-style="italic">-Inf.</text>
<text x="1095.7" y="30.3" font-size="6.5" fill="#e8e8e8" text-anchor="end">9</text>
<rect x="1096.0" y="27" width="1" height="1" fill="#e8e8e8"/>
<text x="1095.7" y="91.3" font-size="6.5" fill="#e8e8e8" text-anchor="end">6</text>
<rect x="1096.0" y="88" width="1" height="1" fill="#e8e8e8"/>
<text x="1095.7" y="150.3" font-size="6.5" fill="#e8e8e8" text-anchor="end">3</text>
<rect x="1096.0" y="147" width="1" height="1" fill="#e8e8e8"/>
<text x="1095.7" y="210.3" font-size="6.5" fill="#e8e8e8" text-anchor="end">0</text>
<rect x="1096.0" y="207" width="1" height="1" fill="#e8e8e8"/>
<text x="1095.7" y="270.3" font-size="6.5" fill="#e8e8e8" text-anchor="end">-3</text>
<rect x="1096.0" y="267" width="1" height="1" fill="#e8e8e8"/>
<text x="1095.7" y="330.3" font-size="6.5" fill="#e8e8e8" text-anchor="end">-6</text>
<rect x="1096.0" y="327" width="1" height="1" fill="#e8e8e8"/>
<text x="1095.7" y="390.3" font-size="6.5" fill="#e8e8e8" text-anchor="end">-9</text>
<rect x="1096.0" y="387" width="1" height="1" fill="#e8e8e8"/>
<text x="1095.7" y="451.3" font-size="6.5" fill="#e8e8e8" text-anchor="end">-12</text>
<rect x="1096.0" y="448" width="1" height="1" fill="#e8e8e8"/>
<text x="1095.7" y="512.3" font-size="6.5" fill="#e8e8e8" text-anchor="end">-15</text>
<rect x="1096.0" y="509" width="1" height="1" fill="#e8e8e8"/>
<text x="1095.7" y="572.3" font-size="6.5" fill="#e8e8e8" text-anchor="end">-18</text>
<rect x="1096.0" y="569" width="1" height="1" fill="#e8e8e8"/>
<rect x="1105.6" y="6.6" width="14.5" height="1.8" fill="#b4b4b4"/>
<rect x="1105.6" y="8.4" width="14.5" height="600" fill="#262626"/>
<rect x="1106.3999999999999" y="8.4" width="12.9" height="600" fill="url(#mg)"/>
<rect x="1106.3999999999999" y="8.4" width="1" height="600" fill="#ffffff" opacity="0.28"/>
<rect x="1118.3" y="8.4" width="1" height="600" fill="#ffffff" opacity="0.12"/>
<text x="1112.8" y="5.5" font-size="6" fill="#b8b8b8" text-anchor="middle" font-style="italic">-Inf.</text>
<text x="1117.1" y="30.3" font-size="6.5" fill="#e8e8e8" text-anchor="end">9</text>
<rect x="1117.3999999999999" y="27" width="1" height="1" fill="#e8e8e8"/>
<text x="1117.1" y="91.3" font-size="6.5" fill="#e8e8e8" text-anchor="end">6</text>
<rect x="1117.3999999999999" y="88" width="1" height="1" fill="#e8e8e8"/>
<text x="1117.1" y="150.3" font-size="6.5" fill="#e8e8e8" text-anchor="end">3</text>
<rect x="1117.3999999999999" y="147" width="1" height="1" fill="#e8e8e8"/>
<text x="1117.1" y="210.3" font-size="6.5" fill="#e8e8e8" text-anchor="end">0</text>
<rect x="1117.3999999999999" y="207" width="1" height="1" fill="#e8e8e8"/>
<text x="1117.1" y="270.3" font-size="6.5" fill="#e8e8e8" text-anchor="end">-3</text>
<rect x="1117.3999999999999" y="267" width="1" height="1" fill="#e8e8e8"/>
<text x="1117.1" y="330.3" font-size="6.5" fill="#e8e8e8" text-anchor="end">-6</text>
<rect x="1117.3999999999999" y="327" width="1" height="1" fill="#e8e8e8"/>
<text x="1117.1" y="390.3" font-size="6.5" fill="#e8e8e8" text-anchor="end">-9</text>
<rect x="1117.3999999999999" y="387" width="1" height="1" fill="#e8e8e8"/>
<text x="1117.1" y="451.3" font-size="6.5" fill="#e8e8e8" text-anchor="end">-12</text>
<rect x="1117.3999999999999" y="448" width="1" height="1" fill="#e8e8e8"/>
<text x="1117.1" y="512.3" font-size="6.5" fill="#e8e8e8" text-anchor="end">-15</text>
<rect x="1117.3999999999999" y="509" width="1" height="1" fill="#e8e8e8"/>
<text x="1117.1" y="572.3" font-size="6.5" fill="#e8e8e8" text-anchor="end">-18</text>
<rect x="1117.3999999999999" y="569" width="1" height="1" fill="#e8e8e8"/>
<rect x="1127.0" y="6.6" width="14.5" height="1.8" fill="#b4b4b4"/>
<rect x="1127.0" y="8.4" width="14.5" height="600" fill="#262626"/>
<rect x="1127.8" y="8.4" width="12.9" height="600" fill="url(#mg)"/>
<rect x="1127.8" y="8.4" width="1" height="600" fill="#ffffff" opacity="0.28"/>
<rect x="1139.7" y="8.4" width="1" height="600" fill="#ffffff" opacity="0.12"/>
<text x="1134.2" y="5.5" font-size="6" fill="#b8b8b8" text-anchor="middle" font-style="italic">-Inf.</text>
<text x="1138.5" y="30.3" font-size="6.5" fill="#e8e8e8" text-anchor="end">9</text>
<rect x="1138.8" y="27" width="1" height="1" fill="#e8e8e8"/>
<text x="1138.5" y="91.3" font-size="6.5" fill="#e8e8e8" text-anchor="end">6</text>
<rect x="1138.8" y="88" width="1" height="1" fill="#e8e8e8"/>
<text x="1138.5" y="150.3" font-size="6.5" fill="#e8e8e8" text-anchor="end">3</text>
<rect x="1138.8" y="147" width="1" height="1" fill="#e8e8e8"/>
<text x="1138.5" y="210.3" font-size="6.5" fill="#e8e8e8" text-anchor="end">0</text>
<rect x="1138.8" y="207" width="1" height="1" fill="#e8e8e8"/>
<text x="1138.5" y="270.3" font-size="6.5" fill="#e8e8e8" text-anchor="end">-3</text>
<rect x="1138.8" y="267" width="1" height="1" fill="#e8e8e8"/>
<text x="1138.5" y="330.3" font-size="6.5" fill="#e8e8e8" text-anchor="end">-6</text>
<rect x="1138.8" y="327" width="1" height="1" fill="#e8e8e8"/>
<text x="1138.5" y="390.3" font-size="6.5" fill="#e8e8e8" text-anchor="end">-9</text>
<rect x="1138.8" y="387" width="1" height="1" fill="#e8e8e8"/>
<text x="1138.5" y="451.3" font-size="6.5" fill="#e8e8e8" text-anchor="end">-12</text>
<rect x="1138.8" y="448" width="1" height="1" fill="#e8e8e8"/>
<text x="1138.5" y="512.3" font-size="6.5" fill="#e8e8e8" text-anchor="end">-15</text>
<rect x="1138.8" y="509" width="1" height="1" fill="#e8e8e8"/>
<text x="1138.5" y="572.3" font-size="6.5" fill="#e8e8e8" text-anchor="end">-18</text>
<rect x="1138.8" y="569" width="1" height="1" fill="#e8e8e8"/>
<rect x="1148.4" y="6.6" width="14.5" height="1.8" fill="#b4b4b4"/>
<rect x="1148.4" y="8.4" width="14.5" height="600" fill="#262626"/>
<rect x="1149.2" y="8.4" width="12.9" height="600" fill="url(#mg)"/>
<rect x="1149.2" y="8.4" width="1" height="600" fill="#ffffff" opacity="0.28"/>
<rect x="1161.1000000000001" y="8.4" width="1" height="600" fill="#ffffff" opacity="0.12"/>
<text x="1155.6000000000001" y="5.5" font-size="6" fill="#b8b8b8" text-anchor="middle" font-style="italic">0.0</text>
<text x="1159.9" y="30.3" font-size="6.5" fill="#e8e8e8" text-anchor="end">9</text>
<rect x="1160.2" y="27" width="1" height="1" fill="#e8e8e8"/>
<text x="1159.9" y="91.3" font-size="6.5" fill="#e8e8e8" text-anchor="end">6</text>
<rect x="1160.2" y="88" width="1" height="1" fill="#e8e8e8"/>
<text x="1159.9" y="150.3" font-size="6.5" fill="#e8e8e8" text-anchor="end">3</text>
<rect x="1160.2" y="147" width="1" height="1" fill="#e8e8e8"/>
<text x="1159.9" y="210.3" font-size="6.5" fill="#e8e8e8" text-anchor="end">0</text>
<rect x="1160.2" y="207" width="1" height="1" fill="#e8e8e8"/>
<text x="1159.9" y="270.3" font-size="6.5" fill="#e8e8e8" text-anchor="end">-3</text>
<rect x="1160.2" y="267" width="1" height="1" fill="#e8e8e8"/>
<text x="1159.9" y="330.3" font-size="6.5" fill="#e8e8e8" text-anchor="end">-6</text>
<rect x="1160.2" y="327" width="1" height="1" fill="#e8e8e8"/>
<text x="1159.9" y="390.3" font-size="6.5" fill="#e8e8e8" text-anchor="end">-9</text>
<rect x="1160.2" y="387" width="1" height="1" fill="#e8e8e8"/>
<text x="1159.9" y="451.3" font-size="6.5" fill="#e8e8e8" text-anchor="end">-12</text>
<rect x="1160.2" y="448" width="1" height="1" fill="#e8e8e8"/>
<text x="1159.9" y="512.3" font-size="6.5" fill="#e8e8e8" text-anchor="end">-15</text>
<rect x="1160.2" y="509" width="1" height="1" fill="#e8e8e8"/>
<text x="1159.9" y="572.3" font-size="6.5" fill="#e8e8e8" text-anchor="end">-18</text>
<rect x="1160.2" y="569" width="1" height="1" fill="#e8e8e8"/>
</svg>
</body></html>
